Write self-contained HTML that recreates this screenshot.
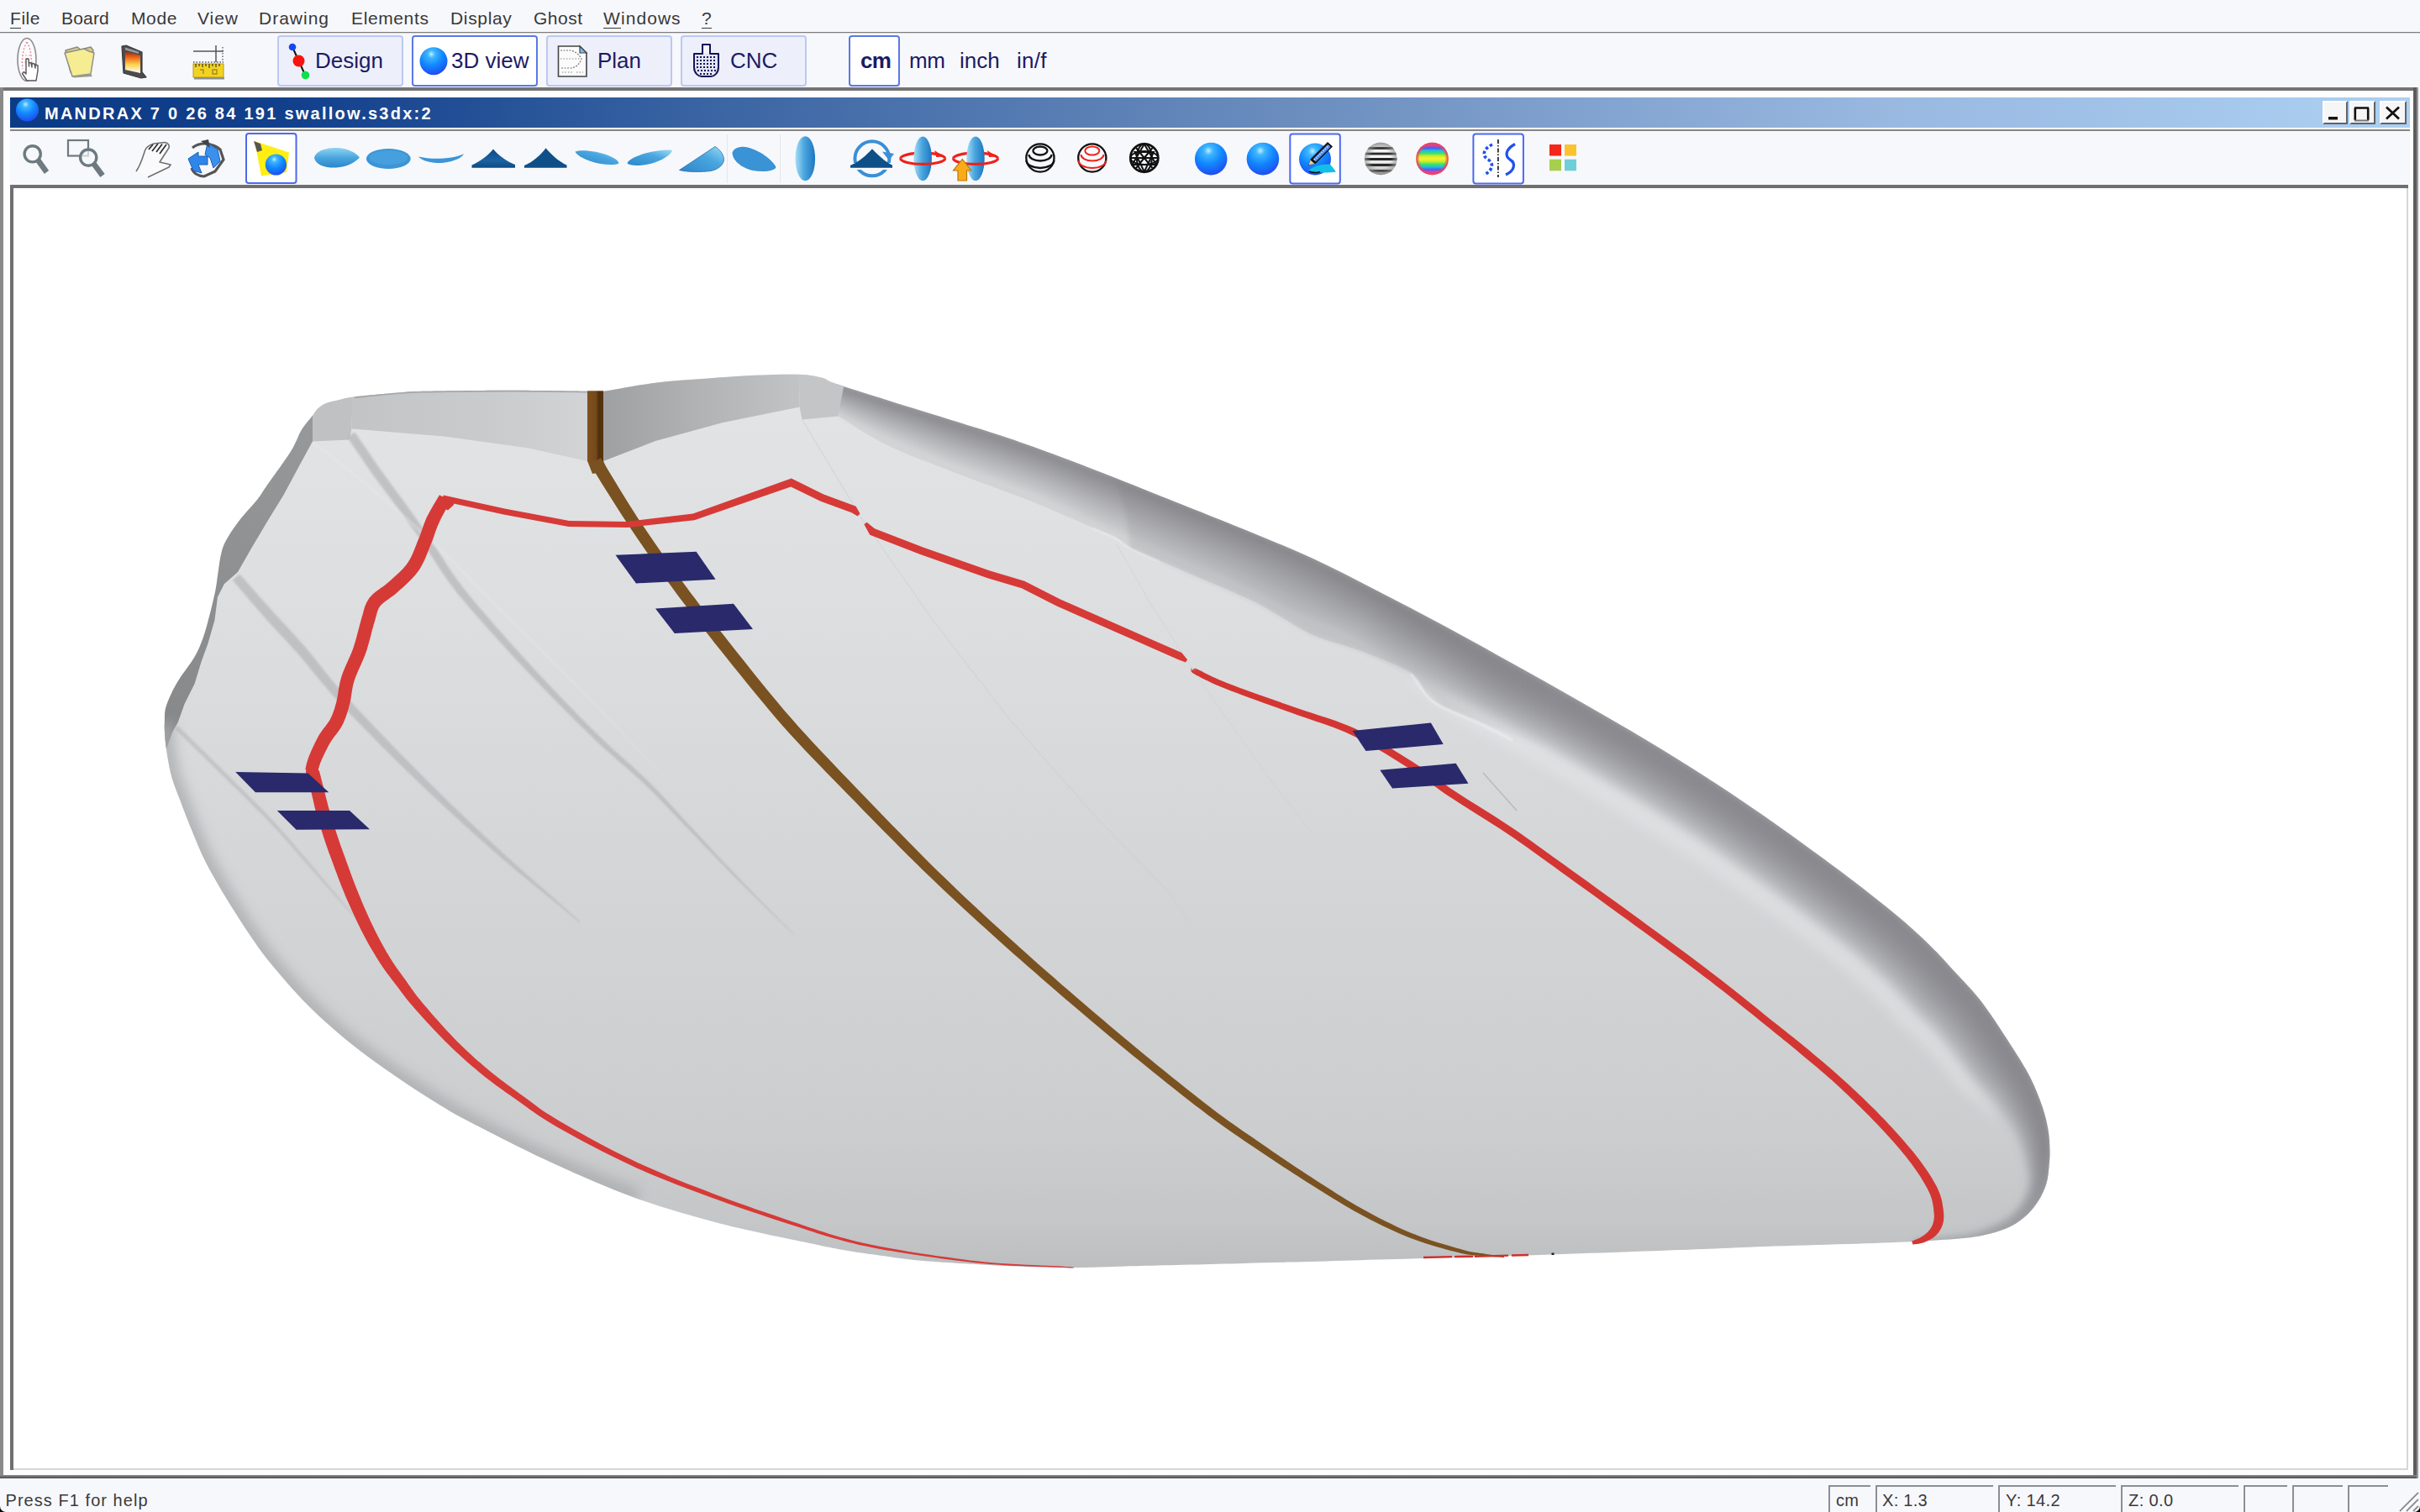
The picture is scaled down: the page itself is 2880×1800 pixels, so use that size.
<!DOCTYPE html>
<html>
<head>
<meta charset="utf-8">
<title>Shape3d</title>
<style>
html,body{margin:0;padding:0;}
body{width:2880px;height:1800px;overflow:hidden;background:#f7f8fc;font-family:"Liberation Sans",sans-serif;position:relative;}
.a{position:absolute;}
.t{position:absolute;white-space:pre;line-height:1;}
.menu .t{font-size:21px;color:#383838;top:11px;}
.menu u{text-decoration:none;border-bottom:1.5px solid #383838;padding-bottom:0;}
.tb{position:absolute;top:42px;height:57px;border:2px solid #bcc8f1;border-radius:4px;background:#edf0fa;}
.tb.sel{border-color:#5a78e6;background:#ffffff;}
.tbt{font-size:26px;color:#1b1b66;top:59px;}
.st{font-size:20px;color:#3a3a3a;top:1776px;}
.pane{position:absolute;top:1768px;height:32px;border-top:2px solid #8d8d93;border-left:2px solid #8d8d93;}
.wb{position:absolute;top:120px;height:24px;background:#f6f6f6;border-top:2px solid #fff;border-left:2px solid #fff;border-right:2px solid #5f6468;border-bottom:2px solid #5f6468;}
</style>
</head>
<body>
<!-- ===== menu bar ===== -->
<div class="menu">
<span class="t" style="left:12px;letter-spacing:.54px"><u>F</u>ile</span>
<span class="t" style="left:73px;letter-spacing:.19px">Board</span>
<span class="t" style="left:156px;letter-spacing:.62px">Mode</span>
<span class="t" style="left:235px;letter-spacing:.96px">View</span>
<span class="t" style="left:308px;letter-spacing:1px">Drawing</span>
<span class="t" style="left:418px;letter-spacing:.62px">Elements</span>
<span class="t" style="left:536px;letter-spacing:.66px">Display</span>
<span class="t" style="left:635px;letter-spacing:.51px">Ghost</span>
<span class="t" style="left:718px;letter-spacing:1.07px"><u>W</u>indows</span>
<span class="t" style="left:835px;"><u>?</u></span>
</div>
<div class="a" style="left:0;top:38px;width:2880px;height:1px;background:#7d7d7d"></div>
<div class="a" style="left:0;top:39px;width:2880px;height:1px;background:#d9d9dc"></div>

<!-- ===== main toolbar ===== -->
<div id="maintb">
<div class="tb" style="left:330px;width:146px"></div>
<div class="tb sel" style="left:490px;width:146px"></div>
<div class="tb" style="left:650px;width:146px"></div>
<div class="tb" style="left:810px;width:146px"></div>
<div class="tb sel" style="left:1010px;width:57px"></div>
<span class="t tbt" style="left:375px;">Design</span>
<span class="t tbt" style="left:537px;">3D view</span>
<span class="t tbt" style="left:711px;">Plan</span>
<span class="t tbt" style="left:869px;">CNC</span>
<span class="t tbt" style="left:1024px;font-weight:bold;letter-spacing:-.6px">cm</span>
<span class="t tbt" style="left:1082px;letter-spacing:-.5px">mm</span>
<span class="t tbt" style="left:1142px;">inch</span>
<span class="t tbt" style="left:1210px;letter-spacing:.3px">in/f</span>
</div>

<!-- ===== MDI child frame ===== -->
<div class="a" style="left:0;top:104px;width:2878px;height:4px;background:#747474"></div>
<div class="a" style="left:0;top:104px;width:4px;height:1656px;background:#8a8a8a"></div>
<div class="a" style="left:4px;top:108px;width:2868px;height:1648px;background:#fdfdfe"></div>
<div class="a" style="left:2872px;top:104px;width:4px;height:1656px;background:#5c5c5c"></div>
<div class="a" style="left:2876px;top:104px;width:2px;height:1656px;background:#9a9a9a"></div>
<div class="a" style="left:0;top:1756px;width:2876px;height:4px;background:linear-gradient(#8c8c8c,#4a4a4a)"></div>
<!-- title bar -->
<div class="a" style="left:12px;top:116px;width:2856px;height:36px;background:linear-gradient(90deg,#0c3b86 0%,#12408c 12%,#3c66a4 30%,#6e90c0 55%,#98b8e0 78%,#add0f2 100%)"></div>
<div class="a" style="left:12px;top:154px;width:2856px;height:2px;background:#858585"></div>
<div class="a" style="left:12px;top:156px;width:2856px;height:64px;background:#f7f8fc"></div>
<span class="t" style="left:53px;top:125px;font-size:20px;font-weight:bold;color:#fff;letter-spacing:2.26px;" id="title">MANDRAX 7 0 26 84 191 swallow.s3dx:2</span>
<div class="wb" style="left:2764px;width:26px"></div>
<div class="wb" style="left:2796px;width:27px"></div>
<div class="wb" style="left:2832px;width:28px"></div>

<!-- canvas -->
<div class="a" style="left:12px;top:220px;width:2854px;height:1530px;background:#6f6f6f"></div>
<div class="a" style="left:16px;top:224px;width:2850px;height:1526px;background:#d6d6d6"></div>
<div class="a" id="canvas" style="left:16px;top:224px;width:2848px;height:1524px;background:#fff;overflow:hidden"></div>
<svg class="a" style="left:16px;top:224px" width="2848" height="1524" viewBox="16 224 2848 1524">
<defs>
<linearGradient id="gb" gradientUnits="userSpaceOnUse" x1="0" y1="450" x2="0" y2="1510"><stop offset="0" stop-color="#e3e4e6"/><stop offset=".3" stop-color="#dcdddf"/><stop offset=".6" stop-color="#d3d4d6"/><stop offset=".85" stop-color="#cccdcf"/><stop offset=".95" stop-color="#c4c6c8"/><stop offset="1" stop-color="#bcbec0"/></linearGradient>
<clipPath id="cs"><path d="M317.0 579.0 C323.6 569.5 339.3 548.2 346.3 537.0 C353.3 525.8 354.7 518.6 359.0 511.6 C363.3 504.6 368.7 499.0 372.0 494.7 C375.3 490.4 376.1 488.3 378.9 485.8 C381.7 483.3 384.7 481.5 388.8 479.8 C392.9 478.1 398.2 477.1 403.7 475.9 C409.1 474.7 408.8 473.9 421.5 472.4 C434.2 470.9 465.5 468.1 480.0 467.0 C494.5 465.9 487.3 466.2 508.6 465.8 C529.9 465.4 576.1 464.8 607.8 464.8 C639.5 464.8 680.6 465.6 699.0 465.8 C717.4 466.0 704.5 467.5 718.0 465.8 C731.5 464.1 759.8 458.2 780.0 455.7 C800.2 453.2 819.7 452.3 839.5 450.8 C859.3 449.3 880.5 447.6 899.0 446.8 C917.5 446.0 937.4 445.3 950.6 445.8 C963.8 446.3 971.1 448.0 978.4 449.8 C985.7 451.6 981.1 452.2 994.3 456.7 C1007.5 461.2 1034.0 469.5 1057.8 477.0 C1081.6 484.5 1113.3 494.1 1137.0 501.5 C1160.7 508.9 1179.5 514.6 1200.0 521.5 C1220.5 528.4 1238.3 534.9 1260.0 543.0 C1281.7 551.1 1306.7 560.8 1330.0 570.0 C1353.3 579.2 1375.0 588.0 1400.0 598.0 C1425.0 608.0 1453.3 619.0 1480.0 630.0 C1506.7 641.0 1533.4 651.5 1560.0 663.8 C1586.6 676.0 1613.0 690.0 1639.4 703.5 C1665.9 717.0 1692.3 730.8 1718.7 745.0 C1745.1 759.2 1771.5 774.0 1798.0 788.8 C1824.5 803.5 1850.5 818.0 1877.5 833.5 C1904.5 849.0 1933.0 865.2 1960.0 881.5 C1987.0 897.8 2013.0 913.8 2039.4 931.0 C2065.8 948.2 2092.3 966.3 2118.7 985.0 C2145.1 1003.7 2174.8 1025.5 2198.0 1043.0 C2221.2 1060.5 2241.0 1076.2 2257.6 1090.0 C2274.2 1103.8 2285.7 1114.6 2297.3 1125.9 C2308.9 1137.2 2316.6 1146.1 2327.0 1157.6 C2337.4 1169.1 2348.4 1179.6 2360.0 1195.0 C2371.6 1210.4 2387.4 1235.2 2396.8 1250.0 C2406.2 1264.8 2411.1 1272.5 2416.7 1283.7 C2422.3 1295.0 2427.1 1307.3 2430.6 1317.5 C2434.1 1327.7 2436.0 1336.4 2437.5 1345.0 C2439.0 1353.6 2439.3 1361.7 2439.5 1369.0 C2439.7 1376.3 2439.2 1382.4 2438.5 1389.0 C2437.8 1395.6 2437.5 1402.1 2435.5 1408.7 C2433.5 1415.3 2430.4 1422.4 2426.6 1428.6 C2422.8 1434.8 2418.3 1440.8 2412.7 1446.0 C2407.1 1451.2 2400.5 1456.2 2392.9 1460.0 C2385.3 1463.8 2376.3 1466.7 2367.0 1469.0 C2357.7 1471.3 2351.9 1472.5 2337.0 1474.0 C2322.1 1475.5 2300.9 1476.8 2277.8 1478.0 C2254.7 1479.2 2228.2 1480.0 2198.4 1481.0 C2168.6 1482.0 2132.1 1482.8 2099.0 1484.0 C2065.9 1485.2 2049.8 1486.2 2000.0 1488.0 C1950.2 1489.8 1866.7 1492.9 1800.0 1495.0 C1733.3 1497.1 1653.3 1499.3 1600.0 1500.8 C1546.7 1502.3 1520.5 1503.0 1480.0 1504.0 C1439.5 1505.0 1390.7 1506.2 1357.0 1507.0 C1323.3 1507.8 1304.2 1509.0 1277.8 1509.0 C1251.4 1509.0 1228.2 1508.3 1198.4 1507.0 C1168.6 1505.7 1125.6 1503.2 1099.2 1501.0 C1072.8 1498.8 1056.5 1495.8 1040.0 1493.5 C1023.5 1491.2 1013.9 1490.0 1000.0 1487.5 C986.1 1485.0 980.5 1483.7 956.8 1478.6 C933.1 1473.5 890.7 1465.3 857.6 1456.7 C824.5 1448.1 791.5 1438.9 758.4 1427.0 C725.3 1415.1 692.3 1400.5 659.2 1385.3 C626.1 1370.1 583.6 1348.3 560.0 1336.0 C536.4 1323.7 531.2 1320.0 517.5 1311.7 C503.8 1303.4 491.1 1294.9 477.8 1285.9 C464.6 1277.0 451.2 1267.9 438.0 1258.0 C424.8 1248.1 411.6 1237.8 398.4 1226.3 C385.2 1214.8 371.9 1202.6 358.7 1188.7 C345.5 1174.8 329.1 1155.5 319.0 1143.0 C308.9 1130.5 304.6 1123.6 298.0 1114.0 C291.4 1104.4 285.9 1095.8 279.4 1085.5 C272.9 1075.2 265.3 1062.9 259.0 1052.0 C252.7 1041.1 246.9 1030.9 241.7 1020.0 C236.5 1009.1 232.3 998.3 227.6 986.8 C222.9 975.3 217.7 961.6 213.7 951.0 C209.7 940.4 206.4 932.9 203.8 923.0 C201.2 913.1 199.2 900.5 197.9 891.6 C196.6 882.7 196.2 875.1 195.9 869.8 C195.6 864.5 195.7 864.4 195.9 860.0 C196.1 855.6 195.6 849.4 196.9 843.7 C198.2 838.0 201.0 831.9 203.8 825.9 C206.6 819.9 209.1 815.3 213.7 808.0 C218.3 800.7 227.0 790.0 231.6 782.0 C236.2 774.0 238.5 768.2 241.5 760.0 C244.5 751.8 246.9 742.1 249.4 732.6 C251.9 723.1 254.7 711.2 256.4 702.9 C258.1 694.6 258.2 690.3 259.4 683.0 C260.5 675.7 261.6 665.7 263.3 659.0 C265.0 652.3 265.7 649.6 269.3 643.0 C272.9 636.4 278.7 627.7 285.0 619.5 C291.3 611.3 301.7 600.5 307.0 593.7 C312.3 587.0 310.4 588.5 317.0 579.0Z"/></clipPath>
<filter id="b30" x="-10%" y="-10%" width="120%" height="120%"><feGaussianBlur stdDeviation="26"/></filter>
<filter id="b18" x="-10%" y="-10%" width="120%" height="120%"><feGaussianBlur stdDeviation="16"/></filter>
<filter id="b8" x="-10%" y="-10%" width="120%" height="120%"><feGaussianBlur stdDeviation="7"/></filter>
<filter id="b1" x="-10%" y="-10%" width="120%" height="120%"><feGaussianBlur stdDeviation="1.2"/></filter>
<filter id="b4" x="-10%" y="-10%" width="120%" height="120%"><feGaussianBlur stdDeviation="4"/></filter>
<filter id="b3" x="-10%" y="-10%" width="120%" height="120%"><feGaussianBlur stdDeviation="2.5"/></filter>
<linearGradient id="gtl" gradientUnits="userSpaceOnUse" x1="420" y1="0" x2="700" y2="0"><stop offset="0" stop-color="#c3c4c6"/><stop offset=".6" stop-color="#cacbcd"/><stop offset="1" stop-color="#d2d3d5"/></linearGradient>
<linearGradient id="gtr" gradientUnits="userSpaceOnUse" x1="718" y1="0" x2="952" y2="0"><stop offset="0" stop-color="#9fa0a2"/><stop offset=".5" stop-color="#b2b3b5"/><stop offset="1" stop-color="#c2c3c5"/></linearGradient>
<linearGradient id="gst" gradientUnits="userSpaceOnUse" x1="699" y1="0" x2="718" y2="0"><stop offset="0" stop-color="#80521f"/><stop offset=".55" stop-color="#74481a"/><stop offset=".7" stop-color="#4f2f0c"/><stop offset="1" stop-color="#56340f"/></linearGradient>
<linearGradient id="gdl" gradientUnits="userSpaceOnUse" x1="200" y1="850" x2="372" y2="500"><stop offset="0" stop-color="#88898b"/><stop offset="1" stop-color="#97989a"/></linearGradient>
<linearGradient id="gfade" gradientUnits="userSpaceOnUse" x1="1660" y1="0" x2="1840" y2="0"><stop offset="0" stop-color="#fff"/><stop offset="1" stop-color="#000"/></linearGradient>
<mask id="mfade" maskUnits="userSpaceOnUse" x="900" y="400" width="1100" height="600"><rect x="900" y="400" width="1100" height="600" fill="url(#gfade)"/></mask>
</defs>
<path d="M317.0 579.0 C323.6 569.5 339.3 548.2 346.3 537.0 C353.3 525.8 354.7 518.6 359.0 511.6 C363.3 504.6 368.7 499.0 372.0 494.7 C375.3 490.4 376.1 488.3 378.9 485.8 C381.7 483.3 384.7 481.5 388.8 479.8 C392.9 478.1 398.2 477.1 403.7 475.9 C409.1 474.7 408.8 473.9 421.5 472.4 C434.2 470.9 465.5 468.1 480.0 467.0 C494.5 465.9 487.3 466.2 508.6 465.8 C529.9 465.4 576.1 464.8 607.8 464.8 C639.5 464.8 680.6 465.6 699.0 465.8 C717.4 466.0 704.5 467.5 718.0 465.8 C731.5 464.1 759.8 458.2 780.0 455.7 C800.2 453.2 819.7 452.3 839.5 450.8 C859.3 449.3 880.5 447.6 899.0 446.8 C917.5 446.0 937.4 445.3 950.6 445.8 C963.8 446.3 971.1 448.0 978.4 449.8 C985.7 451.6 981.1 452.2 994.3 456.7 C1007.5 461.2 1034.0 469.5 1057.8 477.0 C1081.6 484.5 1113.3 494.1 1137.0 501.5 C1160.7 508.9 1179.5 514.6 1200.0 521.5 C1220.5 528.4 1238.3 534.9 1260.0 543.0 C1281.7 551.1 1306.7 560.8 1330.0 570.0 C1353.3 579.2 1375.0 588.0 1400.0 598.0 C1425.0 608.0 1453.3 619.0 1480.0 630.0 C1506.7 641.0 1533.4 651.5 1560.0 663.8 C1586.6 676.0 1613.0 690.0 1639.4 703.5 C1665.9 717.0 1692.3 730.8 1718.7 745.0 C1745.1 759.2 1771.5 774.0 1798.0 788.8 C1824.5 803.5 1850.5 818.0 1877.5 833.5 C1904.5 849.0 1933.0 865.2 1960.0 881.5 C1987.0 897.8 2013.0 913.8 2039.4 931.0 C2065.8 948.2 2092.3 966.3 2118.7 985.0 C2145.1 1003.7 2174.8 1025.5 2198.0 1043.0 C2221.2 1060.5 2241.0 1076.2 2257.6 1090.0 C2274.2 1103.8 2285.7 1114.6 2297.3 1125.9 C2308.9 1137.2 2316.6 1146.1 2327.0 1157.6 C2337.4 1169.1 2348.4 1179.6 2360.0 1195.0 C2371.6 1210.4 2387.4 1235.2 2396.8 1250.0 C2406.2 1264.8 2411.1 1272.5 2416.7 1283.7 C2422.3 1295.0 2427.1 1307.3 2430.6 1317.5 C2434.1 1327.7 2436.0 1336.4 2437.5 1345.0 C2439.0 1353.6 2439.3 1361.7 2439.5 1369.0 C2439.7 1376.3 2439.2 1382.4 2438.5 1389.0 C2437.8 1395.6 2437.5 1402.1 2435.5 1408.7 C2433.5 1415.3 2430.4 1422.4 2426.6 1428.6 C2422.8 1434.8 2418.3 1440.8 2412.7 1446.0 C2407.1 1451.2 2400.5 1456.2 2392.9 1460.0 C2385.3 1463.8 2376.3 1466.7 2367.0 1469.0 C2357.7 1471.3 2351.9 1472.5 2337.0 1474.0 C2322.1 1475.5 2300.9 1476.8 2277.8 1478.0 C2254.7 1479.2 2228.2 1480.0 2198.4 1481.0 C2168.6 1482.0 2132.1 1482.8 2099.0 1484.0 C2065.9 1485.2 2049.8 1486.2 2000.0 1488.0 C1950.2 1489.8 1866.7 1492.9 1800.0 1495.0 C1733.3 1497.1 1653.3 1499.3 1600.0 1500.8 C1546.7 1502.3 1520.5 1503.0 1480.0 1504.0 C1439.5 1505.0 1390.7 1506.2 1357.0 1507.0 C1323.3 1507.8 1304.2 1509.0 1277.8 1509.0 C1251.4 1509.0 1228.2 1508.3 1198.4 1507.0 C1168.6 1505.7 1125.6 1503.2 1099.2 1501.0 C1072.8 1498.8 1056.5 1495.8 1040.0 1493.5 C1023.5 1491.2 1013.9 1490.0 1000.0 1487.5 C986.1 1485.0 980.5 1483.7 956.8 1478.6 C933.1 1473.5 890.7 1465.3 857.6 1456.7 C824.5 1448.1 791.5 1438.9 758.4 1427.0 C725.3 1415.1 692.3 1400.5 659.2 1385.3 C626.1 1370.1 583.6 1348.3 560.0 1336.0 C536.4 1323.7 531.2 1320.0 517.5 1311.7 C503.8 1303.4 491.1 1294.9 477.8 1285.9 C464.6 1277.0 451.2 1267.9 438.0 1258.0 C424.8 1248.1 411.6 1237.8 398.4 1226.3 C385.2 1214.8 371.9 1202.6 358.7 1188.7 C345.5 1174.8 329.1 1155.5 319.0 1143.0 C308.9 1130.5 304.6 1123.6 298.0 1114.0 C291.4 1104.4 285.9 1095.8 279.4 1085.5 C272.9 1075.2 265.3 1062.9 259.0 1052.0 C252.7 1041.1 246.9 1030.9 241.7 1020.0 C236.5 1009.1 232.3 998.3 227.6 986.8 C222.9 975.3 217.7 961.6 213.7 951.0 C209.7 940.4 206.4 932.9 203.8 923.0 C201.2 913.1 199.2 900.5 197.9 891.6 C196.6 882.7 196.2 875.1 195.9 869.8 C195.6 864.5 195.7 864.4 195.9 860.0 C196.1 855.6 195.6 849.4 196.9 843.7 C198.2 838.0 201.0 831.9 203.8 825.9 C206.6 819.9 209.1 815.3 213.7 808.0 C218.3 800.7 227.0 790.0 231.6 782.0 C236.2 774.0 238.5 768.2 241.5 760.0 C244.5 751.8 246.9 742.1 249.4 732.6 C251.9 723.1 254.7 711.2 256.4 702.9 C258.1 694.6 258.2 690.3 259.4 683.0 C260.5 675.7 261.6 665.7 263.3 659.0 C265.0 652.3 265.7 649.6 269.3 643.0 C272.9 636.4 278.7 627.7 285.0 619.5 C291.3 611.3 301.7 600.5 307.0 593.7 C312.3 587.0 310.4 588.5 317.0 579.0Z" fill="url(#gb)"/>
<g clip-path="url(#cs)"><g filter="url(#b4)">
<polygon points="995.2,453.8 1001.9,456.0 1011.1,459.0 1022.0,462.5 1034.0,466.3 1046.5,470.3 1058.7,474.1 1071.2,478.0 1084.5,482.2 1098.3,486.4 1112.1,490.6 1125.4,494.8 1137.9,498.6 1149.4,502.2 1160.2,505.6 1170.6,508.8 1180.7,512.0 1190.8,515.3 1201.0,518.7 1211.0,522.1 1220.8,525.5 1230.6,529.0 1240.4,532.6 1250.5,536.3 1261.1,540.2 1272.2,544.4 1283.7,548.8 1295.5,553.3 1307.4,557.9 1319.3,562.6 1331.1,567.2 1342.7,571.8 1354.1,576.3 1365.5,580.9 1377.0,585.5 1388.9,590.3 1401.1,595.2 1413.9,600.3 1427.0,605.5 1440.5,610.9 1454.1,616.3 1467.7,621.7 1481.1,627.2 1494.5,632.7 1507.8,638.1 1521.2,643.7 1534.6,649.3 1547.9,655.1 1561.3,661.1 1574.6,667.3 1587.8,673.8 1601.1,680.5 1614.3,687.2 1627.5,694.0 1640.8,700.8 1654.0,707.6 1667.2,714.5 1680.4,721.3 1693.7,728.3 1706.9,735.3 1720.1,742.4 1733.3,749.5 1746.6,756.8 1759.8,764.1 1773.0,771.4 1786.2,778.8 1799.5,786.2 1812.7,793.5 1825.8,800.9 1839.0,808.3 1852.2,815.7 1865.6,823.2 1879.0,830.9 1892.6,838.7 1906.4,846.6 1920.3,854.6 1934.1,862.7 1947.9,870.8 1961.5,878.9 1975.0,887.0 1988.3,895.2 2001.5,903.3 2014.7,911.6 2027.8,919.9 2041.0,928.5 2054.3,937.2 2067.5,946.0 2080.7,955.0 2094.0,964.1 2107.2,973.3 2120.4,982.6 2133.9,992.1 2147.6,1002.0 2161.4,1012.0 2174.8,1021.9 2187.7,1031.5 2199.8,1040.6 2211.1,1049.2 2221.9,1057.5 2232.1,1065.5 2241.8,1073.2 2250.9,1080.6 2259.5,1087.7 2267.4,1094.4 2274.7,1100.7 2281.3,1106.7 2287.6,1112.5 2293.6,1118.1 2299.4,1123.8 2304.9,1129.3 2310.0,1134.5 2314.8,1139.6 2319.4,1144.7 2324.2,1150.0 2329.2,1155.6 2334.5,1161.3 2339.8,1167.0 2345.3,1172.8 2350.9,1179.1 2356.6,1185.8 2362.4,1193.2 2368.6,1201.7 2375.1,1211.1 2381.7,1221.1 2388.2,1231.0 2394.1,1240.2 2399.3,1248.4 2403.7,1255.2 2407.5,1261.2 2410.8,1266.6 2413.7,1271.8 2416.6,1276.9 2419.4,1282.4 2422.2,1288.1 2424.8,1294.0 2427.2,1299.9 2429.5,1305.6 2431.6,1311.2 2433.4,1316.5 2435.1,1321.6 2436.5,1326.5 2437.7,1331.1 2438.8,1335.7 2439.7,1340.1 2440.5,1344.5 2441.1,1348.8 2441.6,1353.1 2442.0,1357.2 2442.2,1361.3 2442.4,1365.2 2442.5,1369.0 2442.5,1372.6 2442.5,1376.1 2442.3,1379.4 2442.1,1382.7 2441.8,1386.0 2441.5,1389.3 2441.2,1392.6 2440.8,1395.9 2440.5,1399.3 2440.0,1402.7 2439.3,1406.1 2438.4,1409.5 2437.3,1413.0 2435.9,1416.5 2434.5,1420.0 2432.8,1423.5 2431.1,1426.9 2429.2,1430.2 2427.1,1433.3 2425.0,1436.5 2422.7,1439.5 2420.2,1442.5 2417.6,1445.4 2414.8,1448.2 2411.8,1450.9 2408.6,1453.5 2405.3,1456.0 2401.8,1458.4 2398.1,1460.6 2394.2,1462.7 2390.2,1464.6 2386.0,1466.3 2381.6,1467.9 2377.0,1469.3 2372.4,1470.7 2367.7,1471.9 2363.2,1473.0 2359.0,1473.9 2354.6,1474.8 2349.7,1475.5 2344.1,1476.3 2337.3,1477.0 2328.4,1477.8 2317.4,1478.5 2305.7,1479.3 2294.4,1480.0 2284.8,1480.6 2278.0,1481.0 2277.8,1478.0 2284.6,1477.4 2294.2,1476.3 2305.4,1474.9 2317.1,1473.1 2327.8,1471.0 2336.6,1469.5 2343.2,1468.1 2348.5,1466.8 2353.0,1465.4 2357.0,1464.0 2360.8,1462.4 2364.9,1460.7 2369.2,1459.0 2373.3,1457.3 2377.3,1455.4 2381.0,1453.5 2384.4,1451.5 2387.6,1449.4 2390.5,1447.2 2393.2,1444.9 2395.7,1442.5 2398.1,1440.0 2400.2,1437.5 2402.2,1434.9 2404.0,1432.3 2405.5,1429.7 2406.9,1427.0 2408.1,1424.2 2409.2,1421.5 2410.2,1418.7 2410.9,1415.8 2411.6,1412.9 2412.1,1410.0 2412.4,1407.2 2412.5,1404.5 2412.5,1402.0 2412.2,1399.8 2411.7,1397.6 2411.1,1395.2 2410.6,1392.5 2409.9,1389.5 2409.3,1386.3 2408.7,1383.1 2408.1,1380.2 2407.3,1377.5 2406.5,1375.0 2405.6,1372.4 2404.6,1369.5 2403.6,1366.5 2402.5,1363.5 2401.3,1360.4 2400.1,1357.5 2398.7,1354.6 2397.2,1351.6 2395.6,1348.6 2393.9,1345.5 2392.1,1342.4 2390.2,1339.3 2388.1,1336.1 2385.8,1332.5 2383.2,1328.7 2380.4,1324.5 2377.4,1320.2 2374.3,1316.0 2371.2,1311.8 2367.9,1307.9 2364.7,1304.4 2361.5,1301.2 2358.1,1297.9 2354.3,1294.0 2349.8,1289.2 2344.5,1283.3 2338.8,1275.8 2332.4,1267.2 2325.7,1258.2 2318.9,1249.4 2312.6,1241.5 2307.0,1235.1 2302.2,1229.7 2297.6,1225.0 2292.7,1220.2 2287.5,1215.2 2281.8,1209.9 2276.1,1204.3 2270.9,1198.6 2266.2,1193.3 2261.9,1188.7 2257.8,1184.3 2253.6,1179.9 2248.8,1175.2 2243.7,1170.2 2238.4,1165.2 2232.9,1160.1 2226.9,1154.8 2220.5,1149.1 2213.3,1143.0 2205.3,1136.4 2196.7,1129.5 2187.5,1122.2 2177.7,1114.5 2167.3,1106.5 2156.3,1098.1 2144.5,1089.3 2131.9,1079.9 2118.8,1070.2 2105.3,1060.4 2091.9,1050.8 2078.8,1041.4 2065.9,1032.4 2053.0,1023.4 2040.1,1014.6 2027.3,1005.9 2014.5,997.3 2001.7,988.9 1988.9,980.7 1976.2,972.6 1963.4,964.6 1950.5,956.6 1937.5,948.7 1924.4,940.8 1911.1,932.8 1897.7,924.9 1884.1,917.0 1870.4,909.1 1856.7,901.3 1843.2,893.5 1830.0,886.0 1816.8,878.5 1803.7,871.2 1790.6,863.8 1777.5,856.5 1764.3,849.2 1751.4,841.3 1738.5,833.5 1725.6,825.8 1712.8,818.1 1700.1,810.6 1687.4,803.1 1675.0,795.2 1662.5,787.4 1650.0,779.6 1637.4,771.9 1624.8,764.2 1612.1,756.5 1598.5,750.6 1585.0,744.7 1571.7,738.9 1558.5,733.4 1545.5,728.0 1532.7,723.0 1520.7,716.4 1508.5,710.0 1496.1,703.6 1483.4,697.3 1470.6,690.9 1457.8,684.5 1444.6,678.8 1431.3,673.1 1417.9,667.4 1404.7,661.8 1391.6,656.3 1378.9,650.9 1366.7,645.6 1355.0,640.6 1343.6,635.6 1332.3,630.8 1321.2,626.0 1309.8,621.1 1298.5,615.7 1287.0,610.2 1275.6,604.8 1264.3,599.5 1253.2,594.3 1242.7,589.3 1232.3,585.4 1222.5,581.6 1213.0,578.0 1203.6,574.5 1194.2,571.1 1184.5,567.6 1174.8,564.0 1165.2,560.4 1155.5,556.8 1145.3,553.2 1134.7,549.4 1123.4,545.4 1111.3,540.3 1098.4,535.0 1085.0,529.6 1071.5,524.2 1058.5,518.8 1046.3,513.7 1034.4,508.3 1022.4,502.8 1010.8,497.5 1000.3,492.5 991.7,488.0 985.4,484.4" fill="#838487" opacity="0.200"/>
<polygon points="995.2,453.8 1001.9,456.0 1011.1,459.0 1022.0,462.5 1034.0,466.3 1046.5,470.3 1058.7,474.1 1071.2,478.0 1084.5,482.2 1098.3,486.4 1112.1,490.6 1125.4,494.8 1137.9,498.6 1149.4,502.2 1160.2,505.6 1170.6,508.8 1180.7,512.0 1190.8,515.3 1201.0,518.7 1211.0,522.1 1220.8,525.5 1230.6,529.0 1240.4,532.6 1250.5,536.3 1261.1,540.2 1272.2,544.4 1283.7,548.8 1295.5,553.3 1307.4,557.9 1319.3,562.6 1331.1,567.2 1342.7,571.8 1354.1,576.3 1365.5,580.9 1377.0,585.5 1388.9,590.3 1401.1,595.2 1413.9,600.3 1427.0,605.5 1440.5,610.9 1454.1,616.3 1467.7,621.7 1481.1,627.2 1494.5,632.7 1507.8,638.1 1521.2,643.7 1534.6,649.3 1547.9,655.1 1561.3,661.1 1574.6,667.3 1587.8,673.8 1601.1,680.5 1614.3,687.2 1627.5,694.0 1640.8,700.8 1654.0,707.6 1667.2,714.5 1680.4,721.3 1693.7,728.3 1706.9,735.3 1720.1,742.4 1733.3,749.5 1746.6,756.8 1759.8,764.1 1773.0,771.4 1786.2,778.8 1799.5,786.2 1812.7,793.5 1825.8,800.9 1839.0,808.3 1852.2,815.7 1865.6,823.2 1879.0,830.9 1892.6,838.7 1906.4,846.6 1920.3,854.6 1934.1,862.7 1947.9,870.8 1961.5,878.9 1975.0,887.0 1988.3,895.2 2001.5,903.3 2014.7,911.6 2027.8,919.9 2041.0,928.5 2054.3,937.2 2067.5,946.0 2080.7,955.0 2094.0,964.1 2107.2,973.3 2120.4,982.6 2133.9,992.1 2147.6,1002.0 2161.4,1012.0 2174.8,1021.9 2187.7,1031.5 2199.8,1040.6 2211.1,1049.2 2221.9,1057.5 2232.1,1065.5 2241.8,1073.2 2250.9,1080.6 2259.5,1087.7 2267.4,1094.4 2274.7,1100.7 2281.3,1106.7 2287.6,1112.5 2293.6,1118.1 2299.4,1123.8 2304.9,1129.3 2310.0,1134.5 2314.8,1139.6 2319.4,1144.7 2324.2,1150.0 2329.2,1155.6 2334.5,1161.3 2339.8,1167.0 2345.3,1172.8 2350.9,1179.1 2356.6,1185.8 2362.4,1193.2 2368.6,1201.7 2375.1,1211.1 2381.7,1221.1 2388.2,1231.0 2394.1,1240.2 2399.3,1248.4 2403.7,1255.2 2407.5,1261.2 2410.8,1266.6 2413.7,1271.8 2416.6,1276.9 2419.4,1282.4 2422.2,1288.1 2424.8,1294.0 2427.2,1299.9 2429.5,1305.6 2431.6,1311.2 2433.4,1316.5 2435.1,1321.6 2436.5,1326.5 2437.7,1331.1 2438.8,1335.7 2439.7,1340.1 2440.5,1344.5 2441.1,1348.8 2441.6,1353.1 2442.0,1357.2 2442.2,1361.3 2442.4,1365.2 2442.5,1369.0 2442.5,1372.6 2442.5,1376.1 2442.3,1379.4 2442.1,1382.7 2441.8,1386.0 2441.5,1389.3 2441.2,1392.6 2440.8,1395.9 2440.5,1399.3 2440.0,1402.7 2439.3,1406.1 2438.4,1409.5 2437.3,1413.0 2435.9,1416.5 2434.5,1420.0 2432.8,1423.5 2431.1,1426.9 2429.2,1430.2 2427.1,1433.3 2425.0,1436.5 2422.7,1439.5 2420.2,1442.5 2417.6,1445.4 2414.8,1448.2 2411.8,1450.9 2408.6,1453.5 2405.3,1456.0 2401.8,1458.4 2398.1,1460.6 2394.2,1462.7 2390.2,1464.6 2386.0,1466.3 2381.6,1467.9 2377.0,1469.3 2372.4,1470.7 2367.7,1471.9 2363.2,1473.0 2359.0,1473.9 2354.6,1474.8 2349.7,1475.5 2344.1,1476.3 2337.3,1477.0 2328.4,1477.8 2317.4,1478.5 2305.7,1479.3 2294.4,1480.0 2284.8,1480.6 2278.0,1481.0 2277.8,1478.0 2284.6,1477.6 2294.2,1477.0 2305.5,1476.3 2317.2,1475.6 2328.1,1474.8 2336.9,1473.2 2343.5,1471.5 2348.9,1469.5 2353.3,1467.3 2357.1,1464.8 2361.0,1463.3 2365.1,1461.7 2369.5,1460.0 2373.7,1458.3 2377.7,1456.5 2381.4,1454.7 2385.0,1452.7 2388.2,1450.6 2391.2,1448.5 2394.0,1446.2 2396.6,1443.8 2399.1,1441.3 2401.4,1438.7 2403.4,1436.2 2405.3,1433.6 2406.9,1430.9 2408.4,1428.2 2409.8,1425.5 2411.0,1422.6 2412.1,1419.8 2413.0,1416.9 2413.7,1414.0 2414.3,1411.0 2414.8,1408.1 2415.1,1405.3 2415.2,1402.8 2415.0,1400.4 2414.6,1398.1 2414.2,1395.6 2413.7,1392.8 2413.2,1389.8 2412.7,1386.6 2412.2,1383.4 2411.7,1380.5 2411.0,1377.7 2410.3,1375.1 2409.6,1372.4 2408.7,1369.5 2407.7,1366.4 2406.7,1363.2 2405.7,1360.1 2404.5,1357.0 2403.3,1354.0 2401.9,1350.9 2400.4,1347.7 2398.8,1344.5 2397.0,1341.2 2395.2,1337.9 2393.2,1334.5 2391.0,1330.8 2388.5,1326.7 2385.8,1322.4 2382.9,1318.0 2379.9,1313.5 2376.8,1309.2 2373.6,1305.1 2370.4,1301.4 2367.3,1298.0 2363.9,1294.5 2360.2,1290.4 2355.7,1285.5 2350.6,1279.5 2344.9,1271.9 2338.6,1263.2 2331.9,1254.1 2325.2,1245.2 2318.8,1237.1 2313.1,1230.4 2308.2,1224.8 2303.5,1219.8 2298.6,1215.0 2293.3,1209.9 2287.7,1204.5 2282.0,1198.9 2276.8,1193.2 2272.1,1187.9 2267.8,1183.2 2263.6,1178.8 2259.3,1174.3 2254.5,1169.5 2249.3,1164.4 2243.9,1159.3 2238.3,1154.1 2232.3,1148.8 2225.7,1143.0 2218.4,1136.9 2210.4,1130.2 2201.7,1123.2 2192.4,1115.9 2182.6,1108.1 2172.2,1100.1 2161.2,1091.7 2149.4,1082.9 2136.7,1073.5 2123.5,1063.7 2110.0,1053.9 2096.6,1044.2 2083.4,1034.9 2070.5,1025.8 2057.6,1016.8 2044.7,1008.0 2031.8,999.2 2018.9,990.6 2006.0,982.2 1993.2,973.9 1980.4,965.8 1967.6,957.7 1954.7,949.8 1941.7,941.8 1928.6,933.9 1915.2,925.9 1901.7,918.0 1888.1,910.0 1874.4,902.1 1860.7,894.3 1847.2,886.6 1833.9,879.0 1820.7,871.5 1807.6,864.2 1794.5,856.8 1781.4,849.5 1768.2,842.2 1755.5,834.0 1742.7,825.9 1730.0,817.8 1717.4,809.8 1704.8,801.9 1692.2,794.1 1679.9,786.0 1667.5,777.9 1655.1,769.9 1642.6,761.9 1630.1,754.0 1617.5,746.1 1604.1,739.8 1590.7,733.5 1577.5,727.4 1564.4,721.4 1551.5,715.6 1538.7,710.0 1526.4,703.6 1513.9,697.3 1501.3,691.1 1488.5,685.0 1475.6,678.8 1462.7,672.6 1449.4,666.9 1436.0,661.3 1422.6,655.7 1409.3,650.1 1396.2,644.6 1383.5,639.3 1371.3,634.1 1359.5,629.1 1348.1,624.3 1336.9,619.5 1325.6,614.7 1314.3,610.0 1302.8,604.7 1291.2,599.4 1279.7,594.1 1268.3,589.0 1257.1,584.0 1246.4,579.2 1236.1,575.2 1226.2,571.5 1216.6,567.9 1207.1,564.4 1197.6,561.0 1187.9,557.5 1178.1,553.9 1168.4,550.4 1158.6,546.9 1148.4,543.4 1137.7,539.7 1126.4,535.8 1114.2,531.0 1101.2,525.9 1087.7,520.8 1074.2,515.6 1061.1,510.5 1048.8,505.7 1036.9,500.6 1024.7,495.5 1013.0,490.4 1002.5,485.8 993.7,481.6 987.4,478.3" fill="#838487" opacity="0.200"/>
<polygon points="995.2,453.8 1001.9,456.0 1011.1,459.0 1022.0,462.5 1034.0,466.3 1046.5,470.3 1058.7,474.1 1071.2,478.0 1084.5,482.2 1098.3,486.4 1112.1,490.6 1125.4,494.8 1137.9,498.6 1149.4,502.2 1160.2,505.6 1170.6,508.8 1180.7,512.0 1190.8,515.3 1201.0,518.7 1211.0,522.1 1220.8,525.5 1230.6,529.0 1240.4,532.6 1250.5,536.3 1261.1,540.2 1272.2,544.4 1283.7,548.8 1295.5,553.3 1307.4,557.9 1319.3,562.6 1331.1,567.2 1342.7,571.8 1354.1,576.3 1365.5,580.9 1377.0,585.5 1388.9,590.3 1401.1,595.2 1413.9,600.3 1427.0,605.5 1440.5,610.9 1454.1,616.3 1467.7,621.7 1481.1,627.2 1494.5,632.7 1507.8,638.1 1521.2,643.7 1534.6,649.3 1547.9,655.1 1561.3,661.1 1574.6,667.3 1587.8,673.8 1601.1,680.5 1614.3,687.2 1627.5,694.0 1640.8,700.8 1654.0,707.6 1667.2,714.5 1680.4,721.3 1693.7,728.3 1706.9,735.3 1720.1,742.4 1733.3,749.5 1746.6,756.8 1759.8,764.1 1773.0,771.4 1786.2,778.8 1799.5,786.2 1812.7,793.5 1825.8,800.9 1839.0,808.3 1852.2,815.7 1865.6,823.2 1879.0,830.9 1892.6,838.7 1906.4,846.6 1920.3,854.6 1934.1,862.7 1947.9,870.8 1961.5,878.9 1975.0,887.0 1988.3,895.2 2001.5,903.3 2014.7,911.6 2027.8,919.9 2041.0,928.5 2054.3,937.2 2067.5,946.0 2080.7,955.0 2094.0,964.1 2107.2,973.3 2120.4,982.6 2133.9,992.1 2147.6,1002.0 2161.4,1012.0 2174.8,1021.9 2187.7,1031.5 2199.8,1040.6 2211.1,1049.2 2221.9,1057.5 2232.1,1065.5 2241.8,1073.2 2250.9,1080.6 2259.5,1087.7 2267.4,1094.4 2274.7,1100.7 2281.3,1106.7 2287.6,1112.5 2293.6,1118.1 2299.4,1123.8 2304.9,1129.3 2310.0,1134.5 2314.8,1139.6 2319.4,1144.7 2324.2,1150.0 2329.2,1155.6 2334.5,1161.3 2339.8,1167.0 2345.3,1172.8 2350.9,1179.1 2356.6,1185.8 2362.4,1193.2 2368.6,1201.7 2375.1,1211.1 2381.7,1221.1 2388.2,1231.0 2394.1,1240.2 2399.3,1248.4 2403.7,1255.2 2407.5,1261.2 2410.8,1266.6 2413.7,1271.8 2416.6,1276.9 2419.4,1282.4 2422.2,1288.1 2424.8,1294.0 2427.2,1299.9 2429.5,1305.6 2431.6,1311.2 2433.4,1316.5 2435.1,1321.6 2436.5,1326.5 2437.7,1331.1 2438.8,1335.7 2439.7,1340.1 2440.5,1344.5 2441.1,1348.8 2441.6,1353.1 2442.0,1357.2 2442.2,1361.3 2442.4,1365.2 2442.5,1369.0 2442.5,1372.6 2442.5,1376.1 2442.3,1379.4 2442.1,1382.7 2441.8,1386.0 2441.5,1389.3 2441.2,1392.6 2440.8,1395.9 2440.5,1399.3 2440.0,1402.7 2439.3,1406.1 2438.4,1409.5 2437.3,1413.0 2435.9,1416.5 2434.5,1420.0 2432.8,1423.5 2431.1,1426.9 2429.2,1430.2 2427.1,1433.3 2425.0,1436.5 2422.7,1439.5 2420.2,1442.5 2417.6,1445.4 2414.8,1448.2 2411.8,1450.9 2408.6,1453.5 2405.3,1456.0 2401.8,1458.4 2398.1,1460.6 2394.2,1462.7 2390.2,1464.6 2386.0,1466.3 2381.6,1467.9 2377.0,1469.3 2372.4,1470.7 2367.7,1471.9 2363.2,1473.0 2359.0,1473.9 2354.6,1474.8 2349.7,1475.5 2344.1,1476.3 2337.3,1477.0 2328.4,1477.8 2317.4,1478.5 2305.7,1479.3 2294.4,1480.0 2284.8,1480.6 2278.0,1481.0 2277.8,1478.0 2284.6,1477.6 2294.2,1477.0 2305.5,1476.3 2317.2,1475.6 2328.1,1474.8 2337.0,1474.0 2343.7,1473.3 2349.3,1472.6 2354.1,1471.8 2358.4,1471.0 2362.3,1468.9 2366.3,1466.4 2370.6,1464.0 2374.6,1461.3 2378.3,1458.5 2381.9,1455.7 2385.4,1453.8 2388.8,1451.8 2391.8,1449.6 2394.7,1447.3 2397.4,1444.9 2400.0,1442.5 2402.4,1439.9 2404.5,1437.4 2406.5,1434.7 2408.2,1432.1 2409.8,1429.4 2411.3,1426.6 2412.6,1423.7 2413.8,1420.9 2414.8,1417.9 2415.7,1415.0 2416.4,1412.0 2417.0,1409.0 2417.4,1406.1 2417.6,1403.5 2417.5,1401.0 2417.3,1398.6 2417.0,1396.0 2416.6,1393.2 2416.2,1390.1 2415.8,1386.9 2415.4,1383.7 2414.9,1380.7 2414.4,1377.9 2413.8,1375.2 2413.1,1372.4 2412.4,1369.4 2411.5,1366.3 2410.6,1363.0 2409.7,1359.7 2408.6,1356.6 2407.4,1353.4 2406.1,1350.2 2404.7,1346.9 2403.2,1343.5 2401.5,1340.1 2399.8,1336.6 2397.9,1333.0 2395.7,1329.2 2393.3,1325.0 2390.6,1320.5 2387.8,1315.9 2384.9,1311.4 2381.9,1306.9 2378.7,1302.6 2375.6,1298.7 2372.5,1295.0 2369.2,1291.3 2365.5,1287.1 2361.1,1282.1 2356.1,1276.0 2350.5,1268.3 2344.2,1259.6 2337.5,1250.4 2330.8,1241.3 2324.4,1233.1 2318.7,1226.2 2313.7,1220.4 2308.9,1215.2 2303.9,1210.2 2298.6,1205.0 2293.0,1199.6 2287.3,1194.0 2282.2,1188.3 2277.5,1183.0 2273.1,1178.3 2268.9,1173.7 2264.5,1169.2 2259.6,1164.3 2254.3,1159.2 2248.8,1154.0 2243.1,1148.7 2237.1,1143.3 2230.4,1137.5 2223.1,1131.3 2215.0,1124.6 2206.3,1117.5 2197.0,1110.1 2187.1,1102.4 2176.6,1094.3 2165.5,1085.9 2153.7,1077.0 2141.0,1067.6 2127.8,1057.9 2114.3,1048.0 2100.8,1038.3 2087.6,1028.9 2074.7,1019.8 2061.7,1010.8 2048.8,1001.9 2035.8,993.2 2022.9,984.6 2010.0,976.1 1997.2,967.8 1984.3,959.6 1971.5,951.6 1958.5,943.6 1945.5,935.6 1932.3,927.6 1918.9,919.7 1905.4,911.7 1891.7,903.7 1878.0,895.8 1864.3,888.0 1850.8,880.2 1837.5,872.6 1824.3,865.2 1811.2,857.8 1798.1,850.5 1785.0,843.1 1771.8,835.8 1759.1,827.5 1746.5,819.1 1733.9,810.9 1721.3,802.7 1708.8,794.5 1696.3,786.5 1684.0,778.2 1671.7,770.0 1659.3,761.8 1646.9,753.7 1634.4,745.7 1621.8,737.6 1608.6,731.1 1595.3,724.5 1582.2,718.0 1569.2,711.7 1556.3,705.6 1543.5,699.7 1530.9,693.3 1518.3,687.2 1505.5,681.1 1492.6,675.1 1479.6,669.1 1466.5,663.1 1453.2,657.4 1439.8,651.8 1426.4,646.2 1413.0,640.7 1399.9,635.3 1387.2,630.0 1375.0,624.9 1363.2,620.0 1351.8,615.2 1340.5,610.4 1329.2,605.7 1317.8,601.0 1306.3,595.9 1294.6,590.7 1283.0,585.6 1271.5,580.6 1260.3,575.7 1249.5,571.1 1239.1,567.1 1229.1,563.4 1219.5,559.8 1210.0,556.3 1200.4,552.9 1190.6,549.5 1180.7,545.9 1171.0,542.5 1161.1,539.0 1150.8,535.6 1140.1,531.9 1128.7,528.1 1116.5,523.5 1103.4,518.7 1089.9,513.7 1076.3,508.7 1063.1,503.9 1050.8,499.3 1038.8,494.5 1026.6,489.6 1014.9,484.8 1004.2,480.4 995.3,476.5 988.9,473.5" fill="#838487" opacity="0.200"/>
<polygon points="995.2,453.8 1001.9,456.0 1011.1,459.0 1022.0,462.5 1034.0,466.3 1046.5,470.3 1058.7,474.1 1071.2,478.0 1084.5,482.2 1098.3,486.4 1112.1,490.6 1125.4,494.8 1137.9,498.6 1149.4,502.2 1160.2,505.6 1170.6,508.8 1180.7,512.0 1190.8,515.3 1201.0,518.7 1211.0,522.1 1220.8,525.5 1230.6,529.0 1240.4,532.6 1250.5,536.3 1261.1,540.2 1272.2,544.4 1283.7,548.8 1295.5,553.3 1307.4,557.9 1319.3,562.6 1331.1,567.2 1342.7,571.8 1354.1,576.3 1365.5,580.9 1377.0,585.5 1388.9,590.3 1401.1,595.2 1413.9,600.3 1427.0,605.5 1440.5,610.9 1454.1,616.3 1467.7,621.7 1481.1,627.2 1494.5,632.7 1507.8,638.1 1521.2,643.7 1534.6,649.3 1547.9,655.1 1561.3,661.1 1574.6,667.3 1587.8,673.8 1601.1,680.5 1614.3,687.2 1627.5,694.0 1640.8,700.8 1654.0,707.6 1667.2,714.5 1680.4,721.3 1693.7,728.3 1706.9,735.3 1720.1,742.4 1733.3,749.5 1746.6,756.8 1759.8,764.1 1773.0,771.4 1786.2,778.8 1799.5,786.2 1812.7,793.5 1825.8,800.9 1839.0,808.3 1852.2,815.7 1865.6,823.2 1879.0,830.9 1892.6,838.7 1906.4,846.6 1920.3,854.6 1934.1,862.7 1947.9,870.8 1961.5,878.9 1975.0,887.0 1988.3,895.2 2001.5,903.3 2014.7,911.6 2027.8,919.9 2041.0,928.5 2054.3,937.2 2067.5,946.0 2080.7,955.0 2094.0,964.1 2107.2,973.3 2120.4,982.6 2133.9,992.1 2147.6,1002.0 2161.4,1012.0 2174.8,1021.9 2187.7,1031.5 2199.8,1040.6 2211.1,1049.2 2221.9,1057.5 2232.1,1065.5 2241.8,1073.2 2250.9,1080.6 2259.5,1087.7 2267.4,1094.4 2274.7,1100.7 2281.3,1106.7 2287.6,1112.5 2293.6,1118.1 2299.4,1123.8 2304.9,1129.3 2310.0,1134.5 2314.8,1139.6 2319.4,1144.7 2324.2,1150.0 2329.2,1155.6 2334.5,1161.3 2339.8,1167.0 2345.3,1172.8 2350.9,1179.1 2356.6,1185.8 2362.4,1193.2 2368.6,1201.7 2375.1,1211.1 2381.7,1221.1 2388.2,1231.0 2394.1,1240.2 2399.3,1248.4 2403.7,1255.2 2407.5,1261.2 2410.8,1266.6 2413.7,1271.8 2416.6,1276.9 2419.4,1282.4 2422.2,1288.1 2424.8,1294.0 2427.2,1299.9 2429.5,1305.6 2431.6,1311.2 2433.4,1316.5 2435.1,1321.6 2436.5,1326.5 2437.7,1331.1 2438.8,1335.7 2439.7,1340.1 2440.5,1344.5 2441.1,1348.8 2441.6,1353.1 2442.0,1357.2 2442.2,1361.3 2442.4,1365.2 2442.5,1369.0 2442.5,1372.6 2442.5,1376.1 2442.3,1379.4 2442.1,1382.7 2441.8,1386.0 2441.5,1389.3 2441.2,1392.6 2440.8,1395.9 2440.5,1399.3 2440.0,1402.7 2439.3,1406.1 2438.4,1409.5 2437.3,1413.0 2435.9,1416.5 2434.5,1420.0 2432.8,1423.5 2431.1,1426.9 2429.2,1430.2 2427.1,1433.3 2425.0,1436.5 2422.7,1439.5 2420.2,1442.5 2417.6,1445.4 2414.8,1448.2 2411.8,1450.9 2408.6,1453.5 2405.3,1456.0 2401.8,1458.4 2398.1,1460.6 2394.2,1462.7 2390.2,1464.6 2386.0,1466.3 2381.6,1467.9 2377.0,1469.3 2372.4,1470.7 2367.7,1471.9 2363.2,1473.0 2359.0,1473.9 2354.6,1474.8 2349.7,1475.5 2344.1,1476.3 2337.3,1477.0 2328.4,1477.8 2317.4,1478.5 2305.7,1479.3 2294.4,1480.0 2284.8,1480.6 2278.0,1481.0 2277.8,1478.0 2284.6,1477.6 2294.2,1477.0 2305.5,1476.3 2317.2,1475.6 2328.1,1474.8 2337.0,1474.0 2343.7,1473.3 2349.3,1472.6 2354.1,1471.8 2358.4,1471.0 2362.6,1470.1 2367.0,1469.0 2371.6,1467.8 2376.2,1466.5 2380.6,1465.1 2384.8,1463.2 2388.4,1460.4 2391.6,1457.4 2394.4,1454.2 2396.9,1450.8 2399.0,1447.2 2400.8,1443.5 2403.3,1441.0 2405.5,1438.4 2407.6,1435.8 2409.4,1433.1 2411.1,1430.4 2412.7,1427.6 2414.1,1424.7 2415.4,1421.8 2416.5,1418.9 2417.5,1415.8 2418.3,1412.8 2419.0,1409.8 2419.5,1406.9 2419.8,1404.1 2419.9,1401.6 2419.7,1399.0 2419.5,1396.4 2419.2,1393.5 2418.9,1390.4 2418.6,1387.1 2418.3,1384.0 2417.9,1380.9 2417.5,1378.1 2417.0,1375.3 2416.4,1372.4 2415.7,1369.4 2414.9,1366.1 2414.1,1362.8 2413.3,1359.5 2412.3,1356.2 2411.2,1352.9 2410.0,1349.5 2408.6,1346.1 2407.2,1342.6 2405.6,1339.1 2403.9,1335.5 2402.1,1331.7 2400.0,1327.8 2397.7,1323.4 2395.1,1318.8 2392.3,1314.1 2389.5,1309.4 2386.5,1304.7 2383.4,1300.2 2380.3,1296.2 2377.3,1292.4 2374.0,1288.5 2370.3,1284.1 2366.1,1279.0 2361.1,1272.8 2355.6,1265.0 2349.3,1256.2 2342.7,1247.0 2336.0,1237.8 2329.6,1229.4 2323.8,1222.3 2318.7,1216.4 2313.7,1211.0 2308.7,1205.8 2303.4,1200.6 2297.8,1195.1 2292.2,1189.5 2287.1,1183.8 2282.4,1178.6 2278.0,1173.8 2273.7,1169.2 2269.2,1164.5 2264.2,1159.5 2258.9,1154.4 2253.4,1149.2 2247.6,1143.8 2241.5,1138.3 2234.8,1132.5 2227.3,1126.2 2219.2,1119.5 2210.4,1112.4 2201.1,1104.9 2191.1,1097.2 2180.6,1089.1 2169.5,1080.6 2157.7,1071.7 2145.0,1062.3 2131.7,1052.5 2118.2,1042.7 2104.7,1032.9 2091.4,1023.5 2078.5,1014.4 2065.5,1005.4 2052.5,996.5 2039.5,987.7 2026.6,979.0 2013.6,970.5 2000.7,962.2 1987.9,954.0 1975.0,945.9 1962.0,937.9 1948.9,929.9 1935.7,922.0 1922.3,914.0 1908.8,906.0 1895.1,898.0 1881.3,890.1 1867.6,882.2 1854.1,874.5 1840.8,866.9 1827.6,859.4 1814.4,852.0 1801.3,844.7 1788.2,837.4 1775.0,830.0 1762.4,821.6 1749.8,813.1 1737.3,804.7 1724.8,796.4 1712.3,788.1 1699.9,780.0 1687.5,771.6 1675.2,763.3 1662.8,755.1 1650.4,746.9 1637.9,738.8 1625.4,730.7 1612.2,724.0 1599.0,717.2 1586.0,710.5 1573.0,703.9 1560.1,697.6 1547.3,691.4 1534.6,685.1 1521.8,679.0 1508.9,673.1 1495.8,667.2 1482.8,661.3 1469.7,655.4 1456.3,649.8 1442.9,644.2 1429.4,638.7 1416.0,633.2 1402.9,627.9 1390.2,622.6 1377.9,617.6 1366.2,612.7 1354.7,607.9 1343.4,603.2 1332.0,598.5 1320.6,593.8 1309.0,588.8 1297.3,583.8 1285.6,578.8 1274.0,573.9 1262.8,569.1 1251.9,564.6 1241.5,560.7 1231.5,556.9 1221.8,553.3 1212.3,549.9 1202.6,546.4 1192.8,543.0 1182.9,539.5 1173.0,536.1 1163.1,532.7 1152.8,529.3 1142.0,525.7 1130.7,521.9 1118.4,517.5 1105.2,512.9 1091.6,508.1 1078.0,503.3 1064.8,498.6 1052.4,494.1 1040.4,489.5 1028.1,484.9 1016.3,480.3 1005.6,476.1 996.7,472.4 990.2,469.6" fill="#838487" opacity="0.200"/>
<polygon points="995.2,453.8 1001.9,456.0 1011.1,459.0 1022.0,462.5 1034.0,466.3 1046.5,470.3 1058.7,474.1 1071.2,478.0 1084.5,482.2 1098.3,486.4 1112.1,490.6 1125.4,494.8 1137.9,498.6 1149.4,502.2 1160.2,505.6 1170.6,508.8 1180.7,512.0 1190.8,515.3 1201.0,518.7 1211.0,522.1 1220.8,525.5 1230.6,529.0 1240.4,532.6 1250.5,536.3 1261.1,540.2 1272.2,544.4 1283.7,548.8 1295.5,553.3 1307.4,557.9 1319.3,562.6 1331.1,567.2 1342.7,571.8 1354.1,576.3 1365.5,580.9 1377.0,585.5 1388.9,590.3 1401.1,595.2 1413.9,600.3 1427.0,605.5 1440.5,610.9 1454.1,616.3 1467.7,621.7 1481.1,627.2 1494.5,632.7 1507.8,638.1 1521.2,643.7 1534.6,649.3 1547.9,655.1 1561.3,661.1 1574.6,667.3 1587.8,673.8 1601.1,680.5 1614.3,687.2 1627.5,694.0 1640.8,700.8 1654.0,707.6 1667.2,714.5 1680.4,721.3 1693.7,728.3 1706.9,735.3 1720.1,742.4 1733.3,749.5 1746.6,756.8 1759.8,764.1 1773.0,771.4 1786.2,778.8 1799.5,786.2 1812.7,793.5 1825.8,800.9 1839.0,808.3 1852.2,815.7 1865.6,823.2 1879.0,830.9 1892.6,838.7 1906.4,846.6 1920.3,854.6 1934.1,862.7 1947.9,870.8 1961.5,878.9 1975.0,887.0 1988.3,895.2 2001.5,903.3 2014.7,911.6 2027.8,919.9 2041.0,928.5 2054.3,937.2 2067.5,946.0 2080.7,955.0 2094.0,964.1 2107.2,973.3 2120.4,982.6 2133.9,992.1 2147.6,1002.0 2161.4,1012.0 2174.8,1021.9 2187.7,1031.5 2199.8,1040.6 2211.1,1049.2 2221.9,1057.5 2232.1,1065.5 2241.8,1073.2 2250.9,1080.6 2259.5,1087.7 2267.4,1094.4 2274.7,1100.7 2281.3,1106.7 2287.6,1112.5 2293.6,1118.1 2299.4,1123.8 2304.9,1129.3 2310.0,1134.5 2314.8,1139.6 2319.4,1144.7 2324.2,1150.0 2329.2,1155.6 2334.5,1161.3 2339.8,1167.0 2345.3,1172.8 2350.9,1179.1 2356.6,1185.8 2362.4,1193.2 2368.6,1201.7 2375.1,1211.1 2381.7,1221.1 2388.2,1231.0 2394.1,1240.2 2399.3,1248.4 2403.7,1255.2 2407.5,1261.2 2410.8,1266.6 2413.7,1271.8 2416.6,1276.9 2419.4,1282.4 2422.2,1288.1 2424.8,1294.0 2427.2,1299.9 2429.5,1305.6 2431.6,1311.2 2433.4,1316.5 2435.1,1321.6 2436.5,1326.5 2437.7,1331.1 2438.8,1335.7 2439.7,1340.1 2440.5,1344.5 2441.1,1348.8 2441.6,1353.1 2442.0,1357.2 2442.2,1361.3 2442.4,1365.2 2442.5,1369.0 2442.5,1372.6 2442.5,1376.1 2442.3,1379.4 2442.1,1382.7 2441.8,1386.0 2441.5,1389.3 2441.2,1392.6 2440.8,1395.9 2440.5,1399.3 2440.0,1402.7 2439.3,1406.1 2438.4,1409.5 2437.3,1413.0 2435.9,1416.5 2434.5,1420.0 2432.8,1423.5 2431.1,1426.9 2429.2,1430.2 2427.1,1433.3 2425.0,1436.5 2422.7,1439.5 2420.2,1442.5 2417.6,1445.4 2414.8,1448.2 2411.8,1450.9 2408.6,1453.5 2405.3,1456.0 2401.8,1458.4 2398.1,1460.6 2394.2,1462.7 2390.2,1464.6 2386.0,1466.3 2381.6,1467.9 2377.0,1469.3 2372.4,1470.7 2367.7,1471.9 2363.2,1473.0 2359.0,1473.9 2354.6,1474.8 2349.7,1475.5 2344.1,1476.3 2337.3,1477.0 2328.4,1477.8 2317.4,1478.5 2305.7,1479.3 2294.4,1480.0 2284.8,1480.6 2278.0,1481.0 2277.8,1478.0 2284.6,1477.6 2294.2,1477.0 2305.5,1476.3 2317.2,1475.6 2328.1,1474.8 2337.0,1474.0 2343.7,1473.3 2349.3,1472.6 2354.1,1471.8 2358.4,1471.0 2362.6,1470.1 2367.0,1469.0 2371.6,1467.8 2376.2,1466.5 2380.6,1465.1 2384.9,1463.5 2389.0,1461.8 2392.9,1460.0 2396.6,1458.0 2400.2,1455.8 2403.5,1453.5 2406.8,1451.1 2408.9,1447.5 2410.7,1443.9 2412.0,1440.0 2412.9,1436.1 2413.4,1432.2 2413.9,1428.5 2415.5,1425.6 2416.8,1422.7 2418.0,1419.7 2419.1,1416.6 2420.0,1413.6 2420.8,1410.5 2421.4,1407.5 2421.8,1404.7 2422.0,1402.0 2422.0,1399.4 2421.8,1396.7 2421.6,1393.7 2421.4,1390.6 2421.1,1387.4 2420.9,1384.2 2420.6,1381.1 2420.3,1378.2 2419.9,1375.4 2419.3,1372.4 2418.8,1369.3 2418.1,1366.0 2417.4,1362.6 2416.6,1359.2 2415.7,1355.8 2414.7,1352.4 2413.5,1349.0 2412.2,1345.4 2410.9,1341.8 2409.4,1338.1 2407.8,1334.4 2406.0,1330.6 2403.9,1326.4 2401.6,1322.0 2399.1,1317.3 2396.5,1312.4 2393.6,1307.5 2390.7,1302.8 2387.7,1298.1 2384.6,1293.9 2381.6,1289.9 2378.4,1285.9 2374.8,1281.4 2370.6,1276.1 2365.7,1269.8 2360.2,1262.1 2354.0,1253.2 2347.4,1243.8 2340.7,1234.6 2334.3,1226.1 2328.4,1218.8 2323.3,1212.7 2318.2,1207.2 2313.1,1201.9 2307.8,1196.5 2302.3,1191.0 2296.7,1185.4 2291.6,1179.7 2286.8,1174.5 2282.4,1169.6 2278.1,1165.0 2273.5,1160.2 2268.5,1155.2 2263.1,1150.0 2257.5,1144.7 2251.7,1139.4 2245.5,1133.8 2238.7,1127.9 2231.2,1121.6 2223.0,1114.8 2214.2,1107.6 2204.8,1100.2 2194.8,1092.4 2184.3,1084.3 2173.2,1075.8 2161.3,1066.9 2148.6,1057.4 2135.3,1047.6 2121.7,1037.8 2108.2,1028.0 2094.9,1018.6 2081.9,1009.4 2068.9,1000.4 2055.9,991.5 2042.9,982.7 2029.9,974.0 2016.9,965.5 2004.0,957.1 1991.1,948.9 1978.2,940.8 1965.2,932.8 1952.1,924.8 1938.8,916.8 1925.4,908.8 1911.8,900.8 1898.1,892.8 1884.4,884.8 1870.7,877.0 1857.1,869.2 1843.8,861.6 1830.6,854.1 1817.4,846.8 1804.3,839.4 1791.2,832.1 1778.0,824.7 1765.4,816.2 1752.8,807.7 1740.3,799.3 1727.8,790.9 1715.3,782.6 1702.9,774.4 1690.5,766.0 1678.2,757.7 1665.8,749.4 1653.3,741.3 1640.8,733.1 1628.3,725.1 1615.2,718.2 1602.1,711.3 1589.0,704.4 1576.1,697.7 1563.2,691.1 1550.3,684.8 1537.5,678.6 1524.6,672.6 1511.6,666.7 1498.4,660.9 1485.3,655.1 1472.1,649.3 1458.8,643.7 1445.3,638.2 1431.8,632.7 1418.4,627.3 1405.3,621.9 1392.5,616.7 1380.3,611.7 1368.5,606.8 1357.0,602.1 1345.7,597.4 1334.3,592.8 1322.9,588.1 1311.2,583.2 1299.5,578.3 1287.7,573.3 1276.1,568.5 1264.8,563.9 1253.9,559.4 1243.4,555.5 1233.4,551.7 1223.7,548.2 1214.1,544.7 1204.4,541.3 1194.5,537.8 1184.5,534.4 1174.7,531.0 1164.7,527.7 1154.4,524.3 1143.6,520.8 1132.2,517.0 1119.9,512.7 1106.7,508.2 1093.0,503.6 1079.4,498.9 1066.1,494.3 1053.7,490.0 1041.6,485.6 1029.3,481.1 1017.5,476.7 1006.7,472.7 997.7,469.2 991.2,466.5" fill="#838487" opacity="0.200"/>
<polygon points="995.2,453.8 1001.9,456.0 1011.1,459.0 1022.0,462.5 1034.0,466.3 1046.5,470.3 1058.7,474.1 1071.2,478.0 1084.5,482.2 1098.3,486.4 1112.1,490.6 1125.4,494.8 1137.9,498.6 1149.4,502.2 1160.2,505.6 1170.6,508.8 1180.7,512.0 1190.8,515.3 1201.0,518.7 1211.0,522.1 1220.8,525.5 1230.6,529.0 1240.4,532.6 1250.5,536.3 1261.1,540.2 1272.2,544.4 1283.7,548.8 1295.5,553.3 1307.4,557.9 1319.3,562.6 1331.1,567.2 1342.7,571.8 1354.1,576.3 1365.5,580.9 1377.0,585.5 1388.9,590.3 1401.1,595.2 1413.9,600.3 1427.0,605.5 1440.5,610.9 1454.1,616.3 1467.7,621.7 1481.1,627.2 1494.5,632.7 1507.8,638.1 1521.2,643.7 1534.6,649.3 1547.9,655.1 1561.3,661.1 1574.6,667.3 1587.8,673.8 1601.1,680.5 1614.3,687.2 1627.5,694.0 1640.8,700.8 1654.0,707.6 1667.2,714.5 1680.4,721.3 1693.7,728.3 1706.9,735.3 1720.1,742.4 1733.3,749.5 1746.6,756.8 1759.8,764.1 1773.0,771.4 1786.2,778.8 1799.5,786.2 1812.7,793.5 1825.8,800.9 1839.0,808.3 1852.2,815.7 1865.6,823.2 1879.0,830.9 1892.6,838.7 1906.4,846.6 1920.3,854.6 1934.1,862.7 1947.9,870.8 1961.5,878.9 1975.0,887.0 1988.3,895.2 2001.5,903.3 2014.7,911.6 2027.8,919.9 2041.0,928.5 2054.3,937.2 2067.5,946.0 2080.7,955.0 2094.0,964.1 2107.2,973.3 2120.4,982.6 2133.9,992.1 2147.6,1002.0 2161.4,1012.0 2174.8,1021.9 2187.7,1031.5 2199.8,1040.6 2211.1,1049.2 2221.9,1057.5 2232.1,1065.5 2241.8,1073.2 2250.9,1080.6 2259.5,1087.7 2267.4,1094.4 2274.7,1100.7 2281.3,1106.7 2287.6,1112.5 2293.6,1118.1 2299.4,1123.8 2304.9,1129.3 2310.0,1134.5 2314.8,1139.6 2319.4,1144.7 2324.2,1150.0 2329.2,1155.6 2334.5,1161.3 2339.8,1167.0 2345.3,1172.8 2350.9,1179.1 2356.6,1185.8 2362.4,1193.2 2368.6,1201.7 2375.1,1211.1 2381.7,1221.1 2388.2,1231.0 2394.1,1240.2 2399.3,1248.4 2403.7,1255.2 2407.5,1261.2 2410.8,1266.6 2413.7,1271.8 2416.6,1276.9 2419.4,1282.4 2422.2,1288.1 2424.8,1294.0 2427.2,1299.9 2429.5,1305.6 2431.6,1311.2 2433.4,1316.5 2435.1,1321.6 2436.5,1326.5 2437.7,1331.1 2438.8,1335.7 2439.7,1340.1 2440.5,1344.5 2441.1,1348.8 2441.6,1353.1 2442.0,1357.2 2442.2,1361.3 2442.4,1365.2 2442.5,1369.0 2442.5,1372.6 2442.5,1376.1 2442.3,1379.4 2442.1,1382.7 2441.8,1386.0 2441.5,1389.3 2441.2,1392.6 2440.8,1395.9 2440.5,1399.3 2440.0,1402.7 2439.3,1406.1 2438.4,1409.5 2437.3,1413.0 2435.9,1416.5 2434.5,1420.0 2432.8,1423.5 2431.1,1426.9 2429.2,1430.2 2427.1,1433.3 2425.0,1436.5 2422.7,1439.5 2420.2,1442.5 2417.6,1445.4 2414.8,1448.2 2411.8,1450.9 2408.6,1453.5 2405.3,1456.0 2401.8,1458.4 2398.1,1460.6 2394.2,1462.7 2390.2,1464.6 2386.0,1466.3 2381.6,1467.9 2377.0,1469.3 2372.4,1470.7 2367.7,1471.9 2363.2,1473.0 2359.0,1473.9 2354.6,1474.8 2349.7,1475.5 2344.1,1476.3 2337.3,1477.0 2328.4,1477.8 2317.4,1478.5 2305.7,1479.3 2294.4,1480.0 2284.8,1480.6 2278.0,1481.0 2277.8,1478.0 2284.6,1477.6 2294.2,1477.0 2305.5,1476.3 2317.2,1475.6 2328.1,1474.8 2337.0,1474.0 2343.7,1473.3 2349.3,1472.6 2354.1,1471.8 2358.4,1471.0 2362.6,1470.1 2367.0,1469.0 2371.6,1467.8 2376.2,1466.5 2380.6,1465.1 2384.9,1463.5 2389.0,1461.8 2392.9,1460.0 2396.6,1458.0 2400.2,1455.8 2403.5,1453.5 2406.8,1451.1 2409.8,1448.6 2412.7,1446.0 2415.4,1443.3 2418.0,1440.5 2420.3,1437.7 2422.3,1434.5 2422.9,1430.5 2423.2,1426.6 2422.9,1422.4 2422.1,1418.2 2421.6,1414.3 2422.5,1411.2 2423.2,1408.1 2423.7,1405.3 2423.9,1402.5 2424.0,1399.8 2423.9,1397.0 2423.8,1394.0 2423.7,1390.8 2423.5,1387.6 2423.3,1384.4 2423.1,1381.3 2422.9,1378.4 2422.5,1375.5 2422.1,1372.5 2421.6,1369.3 2421.0,1365.9 2420.3,1362.5 2419.6,1359.0 2418.8,1355.5 2417.9,1352.0 2416.8,1348.4 2415.6,1344.8 2414.3,1341.1 2412.8,1337.3 2411.3,1333.5 2409.5,1329.5 2407.6,1325.2 2405.3,1320.7 2402.9,1315.8 2400.3,1310.9 2397.5,1305.9 2394.6,1300.9 2391.6,1296.2 2388.6,1291.8 2385.6,1287.6 2382.4,1283.5 2378.9,1278.9 2374.7,1273.5 2369.9,1267.1 2364.5,1259.3 2358.3,1250.4 2351.7,1241.0 2345.0,1231.7 2338.6,1223.0 2332.7,1215.6 2327.5,1209.3 2322.3,1203.6 2317.2,1198.2 2311.8,1192.8 2306.3,1187.3 2300.8,1181.6 2295.7,1176.0 2291.0,1170.7 2286.5,1165.8 2282.1,1161.1 2277.5,1156.3 2272.4,1151.2 2266.9,1146.0 2261.3,1140.7 2255.4,1135.2 2249.2,1129.6 2242.3,1123.7 2234.8,1117.3 2226.5,1110.5 2217.7,1103.3 2208.3,1095.8 2198.3,1088.0 2187.7,1079.8 2176.6,1071.4 2164.6,1062.4 2151.9,1052.9 2138.6,1043.1 2125.0,1033.2 2111.5,1023.5 2098.2,1014.0 2085.1,1004.9 2072.1,995.8 2059.0,986.8 2046.0,978.0 2033.0,969.3 2020.0,960.8 2007.0,952.4 1994.1,944.2 1981.1,936.1 1968.1,928.0 1955.0,920.0 1941.7,912.0 1928.3,904.0 1914.6,895.9 1900.9,887.9 1887.1,880.0 1873.4,872.1 1859.9,864.4 1846.5,856.8 1833.3,849.3 1820.1,841.9 1807.0,834.5 1793.9,827.2 1780.7,819.8 1768.1,811.3 1755.5,802.9 1743.0,794.4 1730.5,786.0 1718.0,777.7 1705.5,769.5 1693.1,761.1 1680.7,752.9 1668.2,744.7 1655.8,736.5 1643.2,728.5 1630.7,720.4 1617.6,713.4 1604.5,706.4 1591.5,699.5 1578.6,692.6 1565.7,685.9 1552.8,679.5 1539.8,673.3 1526.8,667.4 1513.7,661.6 1500.5,655.8 1487.3,650.1 1474.1,644.4 1460.7,638.9 1447.2,633.3 1433.7,627.9 1420.3,622.5 1407.2,617.2 1394.4,612.0 1382.2,607.0 1370.4,602.1 1358.9,597.4 1347.5,592.8 1336.2,588.2 1324.7,583.5 1313.0,578.7 1301.2,573.8 1289.4,569.0 1277.7,564.2 1266.4,559.6 1255.4,555.3 1244.9,551.3 1234.9,547.6 1225.2,544.0 1215.5,540.6 1205.9,537.1 1195.9,533.7 1185.9,530.3 1176.0,526.9 1165.9,523.6 1155.6,520.3 1144.8,516.8 1133.4,513.1 1121.1,508.9 1107.8,504.5 1094.1,499.9 1080.4,495.4 1067.2,490.9 1054.8,486.7 1042.6,482.4 1030.3,478.1 1018.4,473.8 1007.6,469.9 998.5,466.6 991.9,464.0" fill="#838487" opacity="0.200"/>
<polygon points="995.2,453.8 1001.9,456.0 1011.1,459.0 1022.0,462.5 1034.0,466.3 1046.5,470.3 1058.7,474.1 1071.2,478.0 1084.5,482.2 1098.3,486.4 1112.1,490.6 1125.4,494.8 1137.9,498.6 1149.4,502.2 1160.2,505.6 1170.6,508.8 1180.7,512.0 1190.8,515.3 1201.0,518.7 1211.0,522.1 1220.8,525.5 1230.6,529.0 1240.4,532.6 1250.5,536.3 1261.1,540.2 1272.2,544.4 1283.7,548.8 1295.5,553.3 1307.4,557.9 1319.3,562.6 1331.1,567.2 1342.7,571.8 1354.1,576.3 1365.5,580.9 1377.0,585.5 1388.9,590.3 1401.1,595.2 1413.9,600.3 1427.0,605.5 1440.5,610.9 1454.1,616.3 1467.7,621.7 1481.1,627.2 1494.5,632.7 1507.8,638.1 1521.2,643.7 1534.6,649.3 1547.9,655.1 1561.3,661.1 1574.6,667.3 1587.8,673.8 1601.1,680.5 1614.3,687.2 1627.5,694.0 1640.8,700.8 1654.0,707.6 1667.2,714.5 1680.4,721.3 1693.7,728.3 1706.9,735.3 1720.1,742.4 1733.3,749.5 1746.6,756.8 1759.8,764.1 1773.0,771.4 1786.2,778.8 1799.5,786.2 1812.7,793.5 1825.8,800.9 1839.0,808.3 1852.2,815.7 1865.6,823.2 1879.0,830.9 1892.6,838.7 1906.4,846.6 1920.3,854.6 1934.1,862.7 1947.9,870.8 1961.5,878.9 1975.0,887.0 1988.3,895.2 2001.5,903.3 2014.7,911.6 2027.8,919.9 2041.0,928.5 2054.3,937.2 2067.5,946.0 2080.7,955.0 2094.0,964.1 2107.2,973.3 2120.4,982.6 2133.9,992.1 2147.6,1002.0 2161.4,1012.0 2174.8,1021.9 2187.7,1031.5 2199.8,1040.6 2211.1,1049.2 2221.9,1057.5 2232.1,1065.5 2241.8,1073.2 2250.9,1080.6 2259.5,1087.7 2267.4,1094.4 2274.7,1100.7 2281.3,1106.7 2287.6,1112.5 2293.6,1118.1 2299.4,1123.8 2304.9,1129.3 2310.0,1134.5 2314.8,1139.6 2319.4,1144.7 2324.2,1150.0 2329.2,1155.6 2334.5,1161.3 2339.8,1167.0 2345.3,1172.8 2350.9,1179.1 2356.6,1185.8 2362.4,1193.2 2368.6,1201.7 2375.1,1211.1 2381.7,1221.1 2388.2,1231.0 2394.1,1240.2 2399.3,1248.4 2403.7,1255.2 2407.5,1261.2 2410.8,1266.6 2413.7,1271.8 2416.6,1276.9 2419.4,1282.4 2422.2,1288.1 2424.8,1294.0 2427.2,1299.9 2429.5,1305.6 2431.6,1311.2 2433.4,1316.5 2435.1,1321.6 2436.5,1326.5 2437.7,1331.1 2438.8,1335.7 2439.7,1340.1 2440.5,1344.5 2441.1,1348.8 2441.6,1353.1 2442.0,1357.2 2442.2,1361.3 2442.4,1365.2 2442.5,1369.0 2442.5,1372.6 2442.5,1376.1 2442.3,1379.4 2442.1,1382.7 2441.8,1386.0 2441.5,1389.3 2441.2,1392.6 2440.8,1395.9 2440.5,1399.3 2440.0,1402.7 2439.3,1406.1 2438.4,1409.5 2437.3,1413.0 2435.9,1416.5 2434.5,1420.0 2432.8,1423.5 2431.1,1426.9 2429.2,1430.2 2427.1,1433.3 2425.0,1436.5 2422.7,1439.5 2420.2,1442.5 2417.6,1445.4 2414.8,1448.2 2411.8,1450.9 2408.6,1453.5 2405.3,1456.0 2401.8,1458.4 2398.1,1460.6 2394.2,1462.7 2390.2,1464.6 2386.0,1466.3 2381.6,1467.9 2377.0,1469.3 2372.4,1470.7 2367.7,1471.9 2363.2,1473.0 2359.0,1473.9 2354.6,1474.8 2349.7,1475.5 2344.1,1476.3 2337.3,1477.0 2328.4,1477.8 2317.4,1478.5 2305.7,1479.3 2294.4,1480.0 2284.8,1480.6 2278.0,1481.0 2277.8,1478.0 2284.6,1477.6 2294.2,1477.0 2305.5,1476.3 2317.2,1475.6 2328.1,1474.8 2337.0,1474.0 2343.7,1473.3 2349.3,1472.6 2354.1,1471.8 2358.4,1471.0 2362.6,1470.1 2367.0,1469.0 2371.6,1467.8 2376.2,1466.5 2380.6,1465.1 2384.9,1463.5 2389.0,1461.8 2392.9,1460.0 2396.6,1458.0 2400.2,1455.8 2403.5,1453.5 2406.8,1451.1 2409.8,1448.6 2412.7,1446.0 2415.4,1443.3 2418.0,1440.5 2420.3,1437.7 2422.6,1434.7 2424.6,1431.7 2426.6,1428.6 2428.4,1425.4 2430.2,1422.1 2431.2,1418.6 2430.6,1414.4 2429.6,1410.4 2428.2,1406.6 2426.2,1403.0 2425.9,1400.1 2425.9,1397.3 2425.9,1394.2 2425.8,1391.0 2425.7,1387.8 2425.6,1384.6 2425.5,1381.5 2425.3,1378.5 2425.0,1375.5 2424.6,1372.5 2424.2,1369.2 2423.7,1365.8 2423.1,1362.3 2422.4,1358.8 2421.7,1355.2 2420.8,1351.6 2419.8,1347.9 2418.7,1344.2 2417.4,1340.4 2416.0,1336.5 2414.5,1332.6 2412.8,1328.4 2410.9,1324.1 2408.8,1319.4 2406.4,1314.5 2403.8,1309.4 2401.1,1304.3 2398.2,1299.3 2395.3,1294.3 2392.3,1289.8 2389.4,1285.5 2386.2,1281.2 2382.7,1276.5 2378.6,1271.1 2373.8,1264.6 2368.4,1256.8 2362.3,1247.8 2355.7,1238.3 2349.0,1228.9 2342.6,1220.1 2336.7,1212.6 2331.4,1206.1 2326.2,1200.3 2320.9,1194.8 2315.6,1189.3 2310.1,1183.8 2304.6,1178.1 2299.5,1172.5 2294.8,1167.2 2290.3,1162.3 2285.9,1157.5 2281.2,1152.7 2276.0,1147.5 2270.5,1142.2 2264.8,1136.9 2258.9,1131.4 2252.6,1125.7 2245.7,1119.7 2238.1,1113.3 2229.8,1106.4 2220.9,1099.2 2211.5,1091.7 2201.4,1083.9 2190.9,1075.7 2179.7,1067.2 2167.8,1058.2 2155.0,1048.7 2141.7,1038.9 2128.1,1029.0 2114.5,1019.2 2101.2,1009.8 2088.1,1000.6 2075.0,991.5 2062.0,982.5 2048.9,973.7 2035.9,965.0 2022.8,956.4 2009.8,948.0 1996.9,939.8 1983.9,931.6 1970.8,923.6 1957.7,915.6 1944.4,907.5 1930.9,899.5 1917.3,891.5 1903.5,883.4 1889.7,875.5 1876.0,867.6 1862.5,859.9 1849.1,852.2 1835.9,844.8 1822.7,837.4 1809.6,830.0 1796.4,822.7 1783.2,815.3 1770.6,806.9 1758.0,798.4 1745.4,790.0 1732.9,781.7 1720.4,773.4 1707.8,765.2 1695.4,756.9 1682.9,748.7 1670.4,740.6 1657.8,732.5 1645.3,724.5 1632.7,716.6 1619.6,709.5 1606.6,702.5 1593.6,695.4 1580.6,688.5 1567.7,681.8 1554.7,675.2 1541.7,669.1 1528.6,663.2 1515.4,657.5 1502.2,651.8 1489.0,646.2 1475.7,640.5 1462.3,635.0 1448.8,629.5 1435.2,624.0 1421.8,618.6 1408.7,613.3 1395.9,608.2 1383.7,603.2 1371.9,598.4 1360.4,593.7 1349.0,589.1 1337.6,584.5 1326.1,579.9 1314.4,575.1 1302.6,570.3 1290.7,565.5 1279.1,560.8 1267.6,556.3 1256.7,551.9 1246.2,548.0 1236.1,544.3 1226.4,540.7 1216.7,537.3 1207.0,533.8 1197.0,530.4 1187.0,527.0 1177.0,523.7 1167.0,520.4 1156.6,517.1 1145.8,513.6 1134.4,510.0 1122.0,505.9 1108.7,501.5 1095.0,497.0 1081.3,492.6 1068.0,488.2 1055.6,484.1 1043.4,479.9 1031.0,475.7 1019.1,471.5 1008.3,467.7 999.2,464.5 992.6,462.0" fill="#838487" opacity="0.200"/>
<polygon points="995.2,453.8 1001.9,456.0 1011.1,459.0 1022.0,462.5 1034.0,466.3 1046.5,470.3 1058.7,474.1 1071.2,478.0 1084.5,482.2 1098.3,486.4 1112.1,490.6 1125.4,494.8 1137.9,498.6 1149.4,502.2 1160.2,505.6 1170.6,508.8 1180.7,512.0 1190.8,515.3 1201.0,518.7 1211.0,522.1 1220.8,525.5 1230.6,529.0 1240.4,532.6 1250.5,536.3 1261.1,540.2 1272.2,544.4 1283.7,548.8 1295.5,553.3 1307.4,557.9 1319.3,562.6 1331.1,567.2 1342.7,571.8 1354.1,576.3 1365.5,580.9 1377.0,585.5 1388.9,590.3 1401.1,595.2 1413.9,600.3 1427.0,605.5 1440.5,610.9 1454.1,616.3 1467.7,621.7 1481.1,627.2 1494.5,632.7 1507.8,638.1 1521.2,643.7 1534.6,649.3 1547.9,655.1 1561.3,661.1 1574.6,667.3 1587.8,673.8 1601.1,680.5 1614.3,687.2 1627.5,694.0 1640.8,700.8 1654.0,707.6 1667.2,714.5 1680.4,721.3 1693.7,728.3 1706.9,735.3 1720.1,742.4 1733.3,749.5 1746.6,756.8 1759.8,764.1 1773.0,771.4 1786.2,778.8 1799.5,786.2 1812.7,793.5 1825.8,800.9 1839.0,808.3 1852.2,815.7 1865.6,823.2 1879.0,830.9 1892.6,838.7 1906.4,846.6 1920.3,854.6 1934.1,862.7 1947.9,870.8 1961.5,878.9 1975.0,887.0 1988.3,895.2 2001.5,903.3 2014.7,911.6 2027.8,919.9 2041.0,928.5 2054.3,937.2 2067.5,946.0 2080.7,955.0 2094.0,964.1 2107.2,973.3 2120.4,982.6 2133.9,992.1 2147.6,1002.0 2161.4,1012.0 2174.8,1021.9 2187.7,1031.5 2199.8,1040.6 2211.1,1049.2 2221.9,1057.5 2232.1,1065.5 2241.8,1073.2 2250.9,1080.6 2259.5,1087.7 2267.4,1094.4 2274.7,1100.7 2281.3,1106.7 2287.6,1112.5 2293.6,1118.1 2299.4,1123.8 2304.9,1129.3 2310.0,1134.5 2314.8,1139.6 2319.4,1144.7 2324.2,1150.0 2329.2,1155.6 2334.5,1161.3 2339.8,1167.0 2345.3,1172.8 2350.9,1179.1 2356.6,1185.8 2362.4,1193.2 2368.6,1201.7 2375.1,1211.1 2381.7,1221.1 2388.2,1231.0 2394.1,1240.2 2399.3,1248.4 2403.7,1255.2 2407.5,1261.2 2410.8,1266.6 2413.7,1271.8 2416.6,1276.9 2419.4,1282.4 2422.2,1288.1 2424.8,1294.0 2427.2,1299.9 2429.5,1305.6 2431.6,1311.2 2433.4,1316.5 2435.1,1321.6 2436.5,1326.5 2437.7,1331.1 2438.8,1335.7 2439.7,1340.1 2440.5,1344.5 2441.1,1348.8 2441.6,1353.1 2442.0,1357.2 2442.2,1361.3 2442.4,1365.2 2442.5,1369.0 2442.5,1372.6 2442.5,1376.1 2442.3,1379.4 2442.1,1382.7 2441.8,1386.0 2441.5,1389.3 2441.2,1392.6 2440.8,1395.9 2440.5,1399.3 2440.0,1402.7 2439.3,1406.1 2438.4,1409.5 2437.3,1413.0 2435.9,1416.5 2434.5,1420.0 2432.8,1423.5 2431.1,1426.9 2429.2,1430.2 2427.1,1433.3 2425.0,1436.5 2422.7,1439.5 2420.2,1442.5 2417.6,1445.4 2414.8,1448.2 2411.8,1450.9 2408.6,1453.5 2405.3,1456.0 2401.8,1458.4 2398.1,1460.6 2394.2,1462.7 2390.2,1464.6 2386.0,1466.3 2381.6,1467.9 2377.0,1469.3 2372.4,1470.7 2367.7,1471.9 2363.2,1473.0 2359.0,1473.9 2354.6,1474.8 2349.7,1475.5 2344.1,1476.3 2337.3,1477.0 2328.4,1477.8 2317.4,1478.5 2305.7,1479.3 2294.4,1480.0 2284.8,1480.6 2278.0,1481.0 2277.8,1478.0 2284.6,1477.6 2294.2,1477.0 2305.5,1476.3 2317.2,1475.6 2328.1,1474.8 2337.0,1474.0 2343.7,1473.3 2349.3,1472.6 2354.1,1471.8 2358.4,1471.0 2362.6,1470.1 2367.0,1469.0 2371.6,1467.8 2376.2,1466.5 2380.6,1465.1 2384.9,1463.5 2389.0,1461.8 2392.9,1460.0 2396.6,1458.0 2400.2,1455.8 2403.5,1453.5 2406.8,1451.1 2409.8,1448.6 2412.7,1446.0 2415.4,1443.3 2418.0,1440.5 2420.3,1437.7 2422.6,1434.7 2424.6,1431.7 2426.6,1428.6 2428.4,1425.4 2430.2,1422.1 2431.7,1418.8 2433.2,1415.4 2434.4,1412.0 2435.5,1408.7 2436.4,1405.4 2435.1,1401.8 2433.2,1398.3 2431.0,1394.8 2428.6,1391.3 2427.8,1388.0 2427.7,1384.8 2427.7,1381.7 2427.5,1378.6 2427.3,1375.6 2427.0,1372.5 2426.7,1369.2 2426.2,1365.7 2425.7,1362.2 2425.1,1358.5 2424.4,1354.9 2423.6,1351.2 2422.7,1347.4 2421.6,1343.6 2420.4,1339.7 2419.1,1335.8 2417.6,1331.7 2416.0,1327.5 2414.1,1323.0 2412.0,1318.3 2409.7,1313.2 2407.1,1308.1 2404.5,1302.8 2401.7,1297.7 2398.7,1292.6 2395.8,1287.9 2392.9,1283.6 2389.8,1279.1 2386.3,1274.3 2382.2,1268.8 2377.6,1262.3 2372.2,1254.4 2366.1,1245.3 2359.5,1235.8 2352.9,1226.3 2346.4,1217.4 2340.5,1209.7 2335.1,1203.2 2329.8,1197.2 2324.5,1191.5 2319.2,1186.0 2313.7,1180.5 2308.3,1174.8 2303.2,1169.2 2298.4,1163.9 2293.9,1159.0 2289.4,1154.1 2284.7,1149.2 2279.5,1144.0 2273.9,1138.7 2268.2,1133.3 2262.2,1127.7 2255.8,1122.0 2248.9,1116.0 2241.3,1109.5 2232.9,1102.6 2224.0,1095.4 2214.5,1087.9 2204.5,1080.0 2193.8,1071.8 2182.7,1063.3 2170.7,1054.3 2157.9,1044.8 2144.6,1035.0 2130.9,1025.0 2117.3,1015.2 2104.0,1005.8 2090.9,996.6 2077.8,987.5 2064.7,978.5 2051.7,969.6 2038.6,960.9 2025.5,952.3 2012.5,943.9 1999.5,935.6 1986.5,927.5 1973.4,919.4 1960.2,911.4 1946.9,903.3 1933.4,895.3 1919.8,887.2 1906.0,879.2 1892.2,871.2 1878.5,863.4 1864.9,855.6 1851.5,848.0 1838.3,840.5 1825.1,833.1 1812.0,825.7 1798.8,818.4 1785.6,811.0 1772.9,802.6 1760.3,794.3 1747.7,786.0 1735.1,777.7 1722.5,769.5 1709.9,761.4 1697.4,753.2 1684.8,745.1 1672.2,737.1 1659.6,729.1 1647.0,721.2 1634.3,713.4 1621.3,706.3 1608.2,699.2 1595.2,692.2 1582.2,685.2 1569.3,678.4 1556.3,671.8 1543.2,665.7 1530.0,659.9 1516.8,654.2 1503.5,648.6 1490.3,643.0 1477.0,637.4 1463.6,631.9 1450.0,626.4 1436.5,620.9 1423.0,615.6 1409.9,610.3 1397.1,605.2 1384.9,600.2 1373.1,595.4 1361.6,590.7 1350.2,586.1 1338.8,581.5 1327.3,576.9 1315.5,572.2 1303.7,567.4 1291.8,562.7 1280.1,558.0 1268.7,553.6 1257.7,549.3 1247.1,545.3 1237.1,541.6 1227.3,538.1 1217.6,534.6 1207.9,531.2 1197.9,527.8 1187.8,524.3 1177.8,521.0 1167.8,517.8 1157.4,514.5 1146.6,511.1 1135.2,507.4 1122.8,503.4 1109.5,499.1 1095.7,494.7 1082.0,490.3 1068.7,486.0 1056.2,482.0 1044.1,477.9 1031.7,473.7 1019.7,469.7 1008.8,466.0 999.8,462.8 993.1,460.4" fill="#838487" opacity="0.200"/>
<polygon points="995.2,453.8 1001.9,456.0 1011.1,459.0 1022.0,462.5 1034.0,466.3 1046.5,470.3 1058.7,474.1 1071.2,478.0 1084.5,482.2 1098.3,486.4 1112.1,490.6 1125.4,494.8 1137.9,498.6 1149.4,502.2 1160.2,505.6 1170.6,508.8 1180.7,512.0 1190.8,515.3 1201.0,518.7 1211.0,522.1 1220.8,525.5 1230.6,529.0 1240.4,532.6 1250.5,536.3 1261.1,540.2 1272.2,544.4 1283.7,548.8 1295.5,553.3 1307.4,557.9 1319.3,562.6 1331.1,567.2 1342.7,571.8 1354.1,576.3 1365.5,580.9 1377.0,585.5 1388.9,590.3 1401.1,595.2 1413.9,600.3 1427.0,605.5 1440.5,610.9 1454.1,616.3 1467.7,621.7 1481.1,627.2 1494.5,632.7 1507.8,638.1 1521.2,643.7 1534.6,649.3 1547.9,655.1 1561.3,661.1 1574.6,667.3 1587.8,673.8 1601.1,680.5 1614.3,687.2 1627.5,694.0 1640.8,700.8 1654.0,707.6 1667.2,714.5 1680.4,721.3 1693.7,728.3 1706.9,735.3 1720.1,742.4 1733.3,749.5 1746.6,756.8 1759.8,764.1 1773.0,771.4 1786.2,778.8 1799.5,786.2 1812.7,793.5 1825.8,800.9 1839.0,808.3 1852.2,815.7 1865.6,823.2 1879.0,830.9 1892.6,838.7 1906.4,846.6 1920.3,854.6 1934.1,862.7 1947.9,870.8 1961.5,878.9 1975.0,887.0 1988.3,895.2 2001.5,903.3 2014.7,911.6 2027.8,919.9 2041.0,928.5 2054.3,937.2 2067.5,946.0 2080.7,955.0 2094.0,964.1 2107.2,973.3 2120.4,982.6 2133.9,992.1 2147.6,1002.0 2161.4,1012.0 2174.8,1021.9 2187.7,1031.5 2199.8,1040.6 2211.1,1049.2 2221.9,1057.5 2232.1,1065.5 2241.8,1073.2 2250.9,1080.6 2259.5,1087.7 2267.4,1094.4 2274.7,1100.7 2281.3,1106.7 2287.6,1112.5 2293.6,1118.1 2299.4,1123.8 2304.9,1129.3 2310.0,1134.5 2314.8,1139.6 2319.4,1144.7 2324.2,1150.0 2329.2,1155.6 2334.5,1161.3 2339.8,1167.0 2345.3,1172.8 2350.9,1179.1 2356.6,1185.8 2362.4,1193.2 2368.6,1201.7 2375.1,1211.1 2381.7,1221.1 2388.2,1231.0 2394.1,1240.2 2399.3,1248.4 2403.7,1255.2 2407.5,1261.2 2410.8,1266.6 2413.7,1271.8 2416.6,1276.9 2419.4,1282.4 2422.2,1288.1 2424.8,1294.0 2427.2,1299.9 2429.5,1305.6 2431.6,1311.2 2433.4,1316.5 2435.1,1321.6 2436.5,1326.5 2437.7,1331.1 2438.8,1335.7 2439.7,1340.1 2440.5,1344.5 2441.1,1348.8 2441.6,1353.1 2442.0,1357.2 2442.2,1361.3 2442.4,1365.2 2442.5,1369.0 2442.5,1372.6 2442.5,1376.1 2442.3,1379.4 2442.1,1382.7 2441.8,1386.0 2441.5,1389.3 2441.2,1392.6 2440.8,1395.9 2440.5,1399.3 2440.0,1402.7 2439.3,1406.1 2438.4,1409.5 2437.3,1413.0 2435.9,1416.5 2434.5,1420.0 2432.8,1423.5 2431.1,1426.9 2429.2,1430.2 2427.1,1433.3 2425.0,1436.5 2422.7,1439.5 2420.2,1442.5 2417.6,1445.4 2414.8,1448.2 2411.8,1450.9 2408.6,1453.5 2405.3,1456.0 2401.8,1458.4 2398.1,1460.6 2394.2,1462.7 2390.2,1464.6 2386.0,1466.3 2381.6,1467.9 2377.0,1469.3 2372.4,1470.7 2367.7,1471.9 2363.2,1473.0 2359.0,1473.9 2354.6,1474.8 2349.7,1475.5 2344.1,1476.3 2337.3,1477.0 2328.4,1477.8 2317.4,1478.5 2305.7,1479.3 2294.4,1480.0 2284.8,1480.6 2278.0,1481.0 2277.8,1478.0 2284.6,1477.6 2294.2,1477.0 2305.5,1476.3 2317.2,1475.6 2328.1,1474.8 2337.0,1474.0 2343.7,1473.3 2349.3,1472.6 2354.1,1471.8 2358.4,1471.0 2362.6,1470.1 2367.0,1469.0 2371.6,1467.8 2376.2,1466.5 2380.6,1465.1 2384.9,1463.5 2389.0,1461.8 2392.9,1460.0 2396.6,1458.0 2400.2,1455.8 2403.5,1453.5 2406.8,1451.1 2409.8,1448.6 2412.7,1446.0 2415.4,1443.3 2418.0,1440.5 2420.3,1437.7 2422.6,1434.7 2424.6,1431.7 2426.6,1428.6 2428.4,1425.4 2430.2,1422.1 2431.7,1418.8 2433.2,1415.4 2434.4,1412.0 2435.5,1408.7 2436.4,1405.4 2437.0,1402.1 2437.5,1398.9 2437.9,1395.6 2438.2,1392.3 2437.1,1388.9 2435.6,1385.4 2433.9,1382.1 2432.0,1378.9 2430.0,1375.7 2429.4,1372.5 2429.1,1369.2 2428.7,1365.7 2428.2,1362.0 2427.7,1358.3 2427.1,1354.6 2426.3,1350.9 2425.4,1347.0 2424.4,1343.1 2423.3,1339.1 2422.0,1335.0 2420.6,1330.9 2419.0,1326.5 2417.2,1322.0 2415.1,1317.1 2412.8,1312.0 2410.4,1306.7 2407.8,1301.4 2405.0,1296.1 2402.1,1291.0 2399.2,1286.1 2396.3,1281.6 2393.2,1277.1 2389.8,1272.2 2385.8,1266.5 2381.1,1260.0 2375.8,1252.0 2369.7,1243.0 2363.2,1233.4 2356.5,1223.8 2350.1,1214.8 2344.1,1207.0 2338.7,1200.3 2333.3,1194.2 2328.0,1188.4 2322.6,1182.8 2317.2,1177.3 2311.8,1171.6 2306.7,1166.0 2301.9,1160.7 2297.4,1155.7 2292.9,1150.9 2288.1,1145.9 2282.8,1140.6 2277.2,1135.2 2271.4,1129.8 2265.4,1124.2 2259.0,1118.5 2252.0,1112.4 2244.3,1105.9 2236.0,1098.9 2227.0,1091.7 2217.5,1084.1 2207.4,1076.2 2196.7,1068.0 2185.5,1059.5 2173.5,1050.5 2160.7,1041.0 2147.4,1031.1 2133.7,1021.2 2120.1,1011.4 2106.8,1001.9 2093.6,992.7 2080.5,983.6 2067.4,974.6 2054.3,965.7 2041.2,956.9 2028.1,948.3 2015.0,939.9 2002.0,931.6 1989.0,923.4 1975.9,915.3 1962.7,907.3 1949.4,899.2 1935.8,891.2 1922.2,883.1 1908.4,875.1 1894.6,867.1 1880.8,859.2 1867.2,851.5 1853.9,843.8 1840.6,836.3 1827.4,828.9 1814.3,821.6 1801.1,814.2 1787.9,806.9 1775.2,798.6 1762.5,790.4 1749.8,782.1 1737.1,774.0 1724.4,765.9 1711.8,757.9 1699.1,749.8 1686.5,741.9 1673.8,734.0 1661.1,726.2 1648.4,718.4 1635.7,710.7 1622.6,703.6 1609.6,696.5 1596.6,689.5 1583.6,682.5 1570.6,675.7 1557.6,669.1 1544.4,663.1 1531.1,657.2 1517.9,651.5 1504.6,646.0 1491.3,640.4 1478.0,634.9 1464.6,629.4 1451.0,623.9 1437.5,618.5 1424.0,613.1 1410.9,607.8 1398.1,602.7 1385.9,597.8 1374.0,593.0 1362.5,588.3 1351.1,583.7 1339.7,579.2 1328.2,574.6 1316.5,569.9 1304.6,565.2 1292.7,560.5 1280.9,555.8 1269.5,551.4 1258.4,547.1 1247.9,543.2 1237.9,539.5 1228.1,535.9 1218.4,532.5 1208.6,529.1 1198.6,525.6 1188.5,522.2 1178.5,519.0 1168.4,515.7 1158.1,512.4 1147.2,509.0 1135.8,505.4 1123.4,501.5 1110.1,497.2 1096.3,492.9 1082.6,488.5 1069.2,484.3 1056.8,480.3 1044.6,476.3 1032.2,472.2 1020.2,468.2 1009.3,464.6 1000.2,461.5 993.5,459.2" fill="#838487" opacity="0.200"/>
<polygon points="995.2,453.8 1001.9,456.0 1011.1,459.0 1022.0,462.5 1034.0,466.3 1046.5,470.3 1058.7,474.1 1071.2,478.0 1084.5,482.2 1098.3,486.4 1112.1,490.6 1125.4,494.8 1137.9,498.6 1149.4,502.2 1160.2,505.6 1170.6,508.8 1180.7,512.0 1190.8,515.3 1201.0,518.7 1211.0,522.1 1220.8,525.5 1230.6,529.0 1240.4,532.6 1250.5,536.3 1261.1,540.2 1272.2,544.4 1283.7,548.8 1295.5,553.3 1307.4,557.9 1319.3,562.6 1331.1,567.2 1342.7,571.8 1354.1,576.3 1365.5,580.9 1377.0,585.5 1388.9,590.3 1401.1,595.2 1413.9,600.3 1427.0,605.5 1440.5,610.9 1454.1,616.3 1467.7,621.7 1481.1,627.2 1494.5,632.7 1507.8,638.1 1521.2,643.7 1534.6,649.3 1547.9,655.1 1561.3,661.1 1574.6,667.3 1587.8,673.8 1601.1,680.5 1614.3,687.2 1627.5,694.0 1640.8,700.8 1654.0,707.6 1667.2,714.5 1680.4,721.3 1693.7,728.3 1706.9,735.3 1720.1,742.4 1733.3,749.5 1746.6,756.8 1759.8,764.1 1773.0,771.4 1786.2,778.8 1799.5,786.2 1812.7,793.5 1825.8,800.9 1839.0,808.3 1852.2,815.7 1865.6,823.2 1879.0,830.9 1892.6,838.7 1906.4,846.6 1920.3,854.6 1934.1,862.7 1947.9,870.8 1961.5,878.9 1975.0,887.0 1988.3,895.2 2001.5,903.3 2014.7,911.6 2027.8,919.9 2041.0,928.5 2054.3,937.2 2067.5,946.0 2080.7,955.0 2094.0,964.1 2107.2,973.3 2120.4,982.6 2133.9,992.1 2147.6,1002.0 2161.4,1012.0 2174.8,1021.9 2187.7,1031.5 2199.8,1040.6 2211.1,1049.2 2221.9,1057.5 2232.1,1065.5 2241.8,1073.2 2250.9,1080.6 2259.5,1087.7 2267.4,1094.4 2274.7,1100.7 2281.3,1106.7 2287.6,1112.5 2293.6,1118.1 2299.4,1123.8 2304.9,1129.3 2310.0,1134.5 2314.8,1139.6 2319.4,1144.7 2324.2,1150.0 2329.2,1155.6 2334.5,1161.3 2339.8,1167.0 2345.3,1172.8 2350.9,1179.1 2356.6,1185.8 2362.4,1193.2 2368.6,1201.7 2375.1,1211.1 2381.7,1221.1 2388.2,1231.0 2394.1,1240.2 2399.3,1248.4 2403.7,1255.2 2407.5,1261.2 2410.8,1266.6 2413.7,1271.8 2416.6,1276.9 2419.4,1282.4 2422.2,1288.1 2424.8,1294.0 2427.2,1299.9 2429.5,1305.6 2431.6,1311.2 2433.4,1316.5 2435.1,1321.6 2436.5,1326.5 2437.7,1331.1 2438.8,1335.7 2439.7,1340.1 2440.5,1344.5 2441.1,1348.8 2441.6,1353.1 2442.0,1357.2 2442.2,1361.3 2442.4,1365.2 2442.5,1369.0 2442.5,1372.6 2442.5,1376.1 2442.3,1379.4 2442.1,1382.7 2441.8,1386.0 2441.5,1389.3 2441.2,1392.6 2440.8,1395.9 2440.5,1399.3 2440.0,1402.7 2439.3,1406.1 2438.4,1409.5 2437.3,1413.0 2435.9,1416.5 2434.5,1420.0 2432.8,1423.5 2431.1,1426.9 2429.2,1430.2 2427.1,1433.3 2425.0,1436.5 2422.7,1439.5 2420.2,1442.5 2417.6,1445.4 2414.8,1448.2 2411.8,1450.9 2408.6,1453.5 2405.3,1456.0 2401.8,1458.4 2398.1,1460.6 2394.2,1462.7 2390.2,1464.6 2386.0,1466.3 2381.6,1467.9 2377.0,1469.3 2372.4,1470.7 2367.7,1471.9 2363.2,1473.0 2359.0,1473.9 2354.6,1474.8 2349.7,1475.5 2344.1,1476.3 2337.3,1477.0 2328.4,1477.8 2317.4,1478.5 2305.7,1479.3 2294.4,1480.0 2284.8,1480.6 2278.0,1481.0 2277.8,1478.0 2284.6,1477.6 2294.2,1477.0 2305.5,1476.3 2317.2,1475.6 2328.1,1474.8 2337.0,1474.0 2343.7,1473.3 2349.3,1472.6 2354.1,1471.8 2358.4,1471.0 2362.6,1470.1 2367.0,1469.0 2371.6,1467.8 2376.2,1466.5 2380.6,1465.1 2384.9,1463.5 2389.0,1461.8 2392.9,1460.0 2396.6,1458.0 2400.2,1455.8 2403.5,1453.5 2406.8,1451.1 2409.8,1448.6 2412.7,1446.0 2415.4,1443.3 2418.0,1440.5 2420.3,1437.7 2422.6,1434.7 2424.6,1431.7 2426.6,1428.6 2428.4,1425.4 2430.2,1422.1 2431.7,1418.8 2433.2,1415.4 2434.4,1412.0 2435.5,1408.7 2436.4,1405.4 2437.0,1402.1 2437.5,1398.9 2437.9,1395.6 2438.2,1392.3 2438.5,1389.0 2438.8,1385.7 2439.1,1382.5 2439.3,1379.3 2439.5,1376.0 2438.3,1372.6 2436.6,1369.0 2435.1,1365.4 2433.5,1361.7 2431.7,1358.0 2429.8,1354.3 2429.1,1350.5 2428.2,1346.5 2427.3,1342.5 2426.2,1338.4 2425.0,1334.3 2423.6,1330.0 2422.1,1325.6 2420.3,1321.0 2418.3,1316.0 2416.1,1310.8 2413.6,1305.4 2411.1,1300.0 2408.3,1294.6 2405.5,1289.3 2402.6,1284.3 2399.7,1279.7 2396.7,1275.0 2393.3,1270.0 2389.3,1264.3 2384.8,1257.7 2379.5,1249.7 2373.4,1240.6 2366.9,1230.9 2360.3,1221.2 2353.8,1212.2 2347.8,1204.2 2342.3,1197.3 2336.9,1191.1 2331.5,1185.3 2326.1,1179.6 2320.7,1174.0 2315.3,1168.3 2310.2,1162.7 2305.5,1157.5 2300.9,1152.5 2296.3,1147.5 2291.5,1142.5 2286.2,1137.2 2280.5,1131.8 2274.7,1126.3 2268.6,1120.7 2262.2,1114.9 2255.1,1108.7 2247.4,1102.2 2239.0,1095.2 2230.0,1088.0 2220.4,1080.4 2210.3,1072.4 2199.6,1064.2 2188.4,1055.7 2176.4,1046.7 2163.6,1037.1 2150.2,1027.3 2136.5,1017.3 2122.9,1007.5 2109.5,998.0 2096.4,988.7 2083.2,979.6 2070.1,970.6 2057.0,961.7 2043.8,952.9 2030.7,944.3 2017.6,935.8 2004.6,927.5 1991.5,919.4 1978.4,911.3 1965.2,903.2 1951.8,895.1 1938.3,887.0 1924.6,879.0 1910.8,870.9 1897.0,863.0 1883.2,855.1 1869.6,847.3 1856.2,839.7 1843.0,832.2 1829.8,824.7 1816.6,817.4 1803.5,810.0 1790.3,802.7 1777.4,794.6 1764.6,786.5 1751.9,778.4 1739.1,770.4 1726.3,762.4 1713.6,754.5 1700.8,746.7 1688.1,738.9 1675.3,731.2 1662.5,723.5 1649.7,715.9 1636.9,708.4 1623.8,701.3 1610.8,694.2 1597.7,687.2 1584.7,680.3 1571.6,673.5 1558.6,666.9 1545.3,660.9 1532.1,655.1 1518.8,649.4 1505.5,643.9 1492.1,638.4 1478.8,632.9 1465.4,627.4 1451.8,621.9 1438.2,616.5 1424.8,611.1 1411.6,605.9 1398.9,600.8 1386.6,595.9 1374.8,591.1 1363.3,586.4 1351.9,581.8 1340.5,577.3 1328.9,572.7 1317.2,568.0 1305.3,563.3 1293.4,558.7 1281.6,554.1 1270.1,549.7 1259.1,545.4 1248.6,541.5 1238.5,537.8 1228.7,534.3 1219.0,530.8 1209.2,527.4 1199.2,523.9 1189.1,520.6 1179.1,517.3 1168.9,514.1 1158.6,510.8 1147.7,507.4 1136.3,503.8 1123.9,499.9 1110.5,495.7 1096.8,491.4 1083.0,487.1 1069.7,482.9 1057.2,478.9 1045.0,475.0 1032.6,470.9 1020.6,467.0 1009.7,463.4 1000.5,460.4 993.8,458.2" fill="#838487" opacity="0.200"/>
<polygon points="995.2,453.8 1001.9,456.0 1011.1,459.0 1022.0,462.5 1034.0,466.3 1046.5,470.3 1058.7,474.1 1071.2,478.0 1084.5,482.2 1098.3,486.4 1112.1,490.6 1125.4,494.8 1137.9,498.6 1149.4,502.2 1160.2,505.6 1170.6,508.8 1180.7,512.0 1190.8,515.3 1201.0,518.7 1211.0,522.1 1220.8,525.5 1230.6,529.0 1240.4,532.6 1250.5,536.3 1261.1,540.2 1272.2,544.4 1283.7,548.8 1295.5,553.3 1307.4,557.9 1319.3,562.6 1331.1,567.2 1342.7,571.8 1354.1,576.3 1365.5,580.9 1377.0,585.5 1388.9,590.3 1401.1,595.2 1413.9,600.3 1427.0,605.5 1440.5,610.9 1454.1,616.3 1467.7,621.7 1481.1,627.2 1494.5,632.7 1507.8,638.1 1521.2,643.7 1534.6,649.3 1547.9,655.1 1561.3,661.1 1574.6,667.3 1587.8,673.8 1601.1,680.5 1614.3,687.2 1627.5,694.0 1640.8,700.8 1654.0,707.6 1667.2,714.5 1680.4,721.3 1693.7,728.3 1706.9,735.3 1720.1,742.4 1733.3,749.5 1746.6,756.8 1759.8,764.1 1773.0,771.4 1786.2,778.8 1799.5,786.2 1812.7,793.5 1825.8,800.9 1839.0,808.3 1852.2,815.7 1865.6,823.2 1879.0,830.9 1892.6,838.7 1906.4,846.6 1920.3,854.6 1934.1,862.7 1947.9,870.8 1961.5,878.9 1975.0,887.0 1988.3,895.2 2001.5,903.3 2014.7,911.6 2027.8,919.9 2041.0,928.5 2054.3,937.2 2067.5,946.0 2080.7,955.0 2094.0,964.1 2107.2,973.3 2120.4,982.6 2133.9,992.1 2147.6,1002.0 2161.4,1012.0 2174.8,1021.9 2187.7,1031.5 2199.8,1040.6 2211.1,1049.2 2221.9,1057.5 2232.1,1065.5 2241.8,1073.2 2250.9,1080.6 2259.5,1087.7 2267.4,1094.4 2274.7,1100.7 2281.3,1106.7 2287.6,1112.5 2293.6,1118.1 2299.4,1123.8 2304.9,1129.3 2310.0,1134.5 2314.8,1139.6 2319.4,1144.7 2324.2,1150.0 2329.2,1155.6 2334.5,1161.3 2339.8,1167.0 2345.3,1172.8 2350.9,1179.1 2356.6,1185.8 2362.4,1193.2 2368.6,1201.7 2375.1,1211.1 2381.7,1221.1 2388.2,1231.0 2394.1,1240.2 2399.3,1248.4 2403.7,1255.2 2407.5,1261.2 2410.8,1266.6 2413.7,1271.8 2416.6,1276.9 2419.4,1282.4 2422.2,1288.1 2424.8,1294.0 2427.2,1299.9 2429.5,1305.6 2431.6,1311.2 2433.4,1316.5 2435.1,1321.6 2436.5,1326.5 2437.7,1331.1 2438.8,1335.7 2439.7,1340.1 2440.5,1344.5 2441.1,1348.8 2441.6,1353.1 2442.0,1357.2 2442.2,1361.3 2442.4,1365.2 2442.5,1369.0 2442.5,1372.6 2442.5,1376.1 2442.3,1379.4 2442.1,1382.7 2441.8,1386.0 2441.5,1389.3 2441.2,1392.6 2440.8,1395.9 2440.5,1399.3 2440.0,1402.7 2439.3,1406.1 2438.4,1409.5 2437.3,1413.0 2435.9,1416.5 2434.5,1420.0 2432.8,1423.5 2431.1,1426.9 2429.2,1430.2 2427.1,1433.3 2425.0,1436.5 2422.7,1439.5 2420.2,1442.5 2417.6,1445.4 2414.8,1448.2 2411.8,1450.9 2408.6,1453.5 2405.3,1456.0 2401.8,1458.4 2398.1,1460.6 2394.2,1462.7 2390.2,1464.6 2386.0,1466.3 2381.6,1467.9 2377.0,1469.3 2372.4,1470.7 2367.7,1471.9 2363.2,1473.0 2359.0,1473.9 2354.6,1474.8 2349.7,1475.5 2344.1,1476.3 2337.3,1477.0 2328.4,1477.8 2317.4,1478.5 2305.7,1479.3 2294.4,1480.0 2284.8,1480.6 2278.0,1481.0 2277.8,1478.0 2284.6,1477.6 2294.2,1477.0 2305.5,1476.3 2317.2,1475.6 2328.1,1474.8 2337.0,1474.0 2343.7,1473.3 2349.3,1472.6 2354.1,1471.8 2358.4,1471.0 2362.6,1470.1 2367.0,1469.0 2371.6,1467.8 2376.2,1466.5 2380.6,1465.1 2384.9,1463.5 2389.0,1461.8 2392.9,1460.0 2396.6,1458.0 2400.2,1455.8 2403.5,1453.5 2406.8,1451.1 2409.8,1448.6 2412.7,1446.0 2415.4,1443.3 2418.0,1440.5 2420.3,1437.7 2422.6,1434.7 2424.6,1431.7 2426.6,1428.6 2428.4,1425.4 2430.2,1422.1 2431.7,1418.8 2433.2,1415.4 2434.4,1412.0 2435.5,1408.7 2436.4,1405.4 2437.0,1402.1 2437.5,1398.9 2437.9,1395.6 2438.2,1392.3 2438.5,1389.0 2438.8,1385.7 2439.1,1382.5 2439.3,1379.3 2439.5,1376.0 2439.5,1372.6 2439.5,1369.0 2439.4,1365.3 2439.2,1361.4 2439.0,1357.5 2438.6,1353.4 2437.2,1349.4 2435.5,1345.3 2433.9,1341.2 2432.2,1337.1 2430.3,1333.0 2428.3,1328.7 2426.0,1324.4 2423.7,1319.8 2421.8,1314.7 2419.6,1309.4 2417.3,1303.9 2414.7,1298.4 2412.0,1292.8 2409.2,1287.4 2406.4,1282.3 2403.5,1277.5 2400.5,1272.7 2397.1,1267.6 2393.3,1261.8 2388.8,1255.1 2383.5,1247.1 2377.5,1237.9 2371.0,1228.2 2364.4,1218.4 2357.9,1209.2 2351.9,1201.1 2346.3,1194.1 2340.8,1187.8 2335.3,1181.8 2329.9,1176.1 2324.5,1170.4 2319.2,1164.8 2314.1,1159.2 2309.4,1153.9 2304.8,1148.9 2300.2,1143.9 2295.2,1138.8 2289.9,1133.5 2284.2,1127.9 2278.3,1122.4 2272.2,1116.7 2265.7,1110.9 2258.6,1104.7 2250.8,1098.1 2242.3,1091.1 2233.3,1083.8 2223.7,1076.2 2213.6,1068.3 2202.9,1060.0 2191.6,1051.5 2179.6,1042.4 2166.7,1032.9 2153.3,1023.0 2139.7,1013.0 2126.0,1003.2 2112.6,993.6 2099.4,984.4 2086.3,975.3 2073.1,966.2 2059.9,957.3 2046.8,948.5 2033.6,939.9 2020.5,931.4 2007.4,923.1 1994.3,914.9 1981.2,906.7 1967.9,898.7 1954.5,890.6 1941.0,882.5 1927.3,874.4 1913.4,866.4 1899.6,858.4 1885.8,850.5 1872.3,842.7 1858.8,835.1 1845.6,827.5 1832.4,820.1 1819.2,812.8 1806.0,805.4 1792.8,798.1 1779.9,790.1 1767.0,782.2 1754.1,774.4 1741.2,766.5 1728.3,758.8 1715.4,751.1 1702.5,743.5 1689.7,735.9 1676.8,728.4 1663.8,721.0 1650.9,713.6 1638.0,706.3 1624.9,699.3 1611.8,692.3 1598.7,685.3 1585.6,678.4 1572.5,671.7 1559.4,665.2 1546.1,659.2 1532.8,653.4 1519.5,647.8 1506.1,642.2 1492.8,636.8 1479.5,631.3 1466.0,625.8 1452.5,620.3 1438.9,614.9 1425.4,609.6 1412.3,604.3 1399.5,599.2 1387.3,594.3 1375.4,589.6 1363.9,584.9 1352.5,580.3 1341.1,575.8 1329.5,571.2 1317.8,566.6 1305.8,561.9 1293.9,557.2 1282.2,552.7 1270.7,548.3 1259.6,544.1 1249.1,540.2 1239.0,536.5 1229.2,532.9 1219.5,529.4 1209.7,526.0 1199.6,522.6 1189.5,519.2 1179.5,516.0 1169.4,512.7 1159.0,509.5 1148.1,506.1 1136.7,502.5 1124.2,498.6 1110.9,494.5 1097.1,490.2 1083.4,485.9 1070.0,481.8 1057.5,477.9 1045.3,474.0 1032.9,470.0 1020.9,466.1 1010.0,462.5 1000.8,459.5 994.1,457.3" fill="#838487" opacity="0.200"/>
<polygon points="995.2,453.8 1001.9,456.0 1011.1,459.0 1022.0,462.5 1034.0,466.3 1046.5,470.3 1058.7,474.1 1071.2,478.0 1084.5,482.2 1098.3,486.4 1112.1,490.6 1125.4,494.8 1137.9,498.6 1149.4,502.2 1160.2,505.6 1170.6,508.8 1180.7,512.0 1190.8,515.3 1201.0,518.7 1211.0,522.1 1220.8,525.5 1230.6,529.0 1240.4,532.6 1250.5,536.3 1261.1,540.2 1272.2,544.4 1283.7,548.8 1295.5,553.3 1307.4,557.9 1319.3,562.6 1331.1,567.2 1342.7,571.8 1354.1,576.3 1365.5,580.9 1377.0,585.5 1388.9,590.3 1401.1,595.2 1413.9,600.3 1427.0,605.5 1440.5,610.9 1454.1,616.3 1467.7,621.7 1481.1,627.2 1494.5,632.7 1507.8,638.1 1521.2,643.7 1534.6,649.3 1547.9,655.1 1561.3,661.1 1574.6,667.3 1587.8,673.8 1601.1,680.5 1614.3,687.2 1627.5,694.0 1640.8,700.8 1654.0,707.6 1667.2,714.5 1680.4,721.3 1693.7,728.3 1706.9,735.3 1720.1,742.4 1733.3,749.5 1746.6,756.8 1759.8,764.1 1773.0,771.4 1786.2,778.8 1799.5,786.2 1812.7,793.5 1825.8,800.9 1839.0,808.3 1852.2,815.7 1865.6,823.2 1879.0,830.9 1892.6,838.7 1906.4,846.6 1920.3,854.6 1934.1,862.7 1947.9,870.8 1961.5,878.9 1975.0,887.0 1988.3,895.2 2001.5,903.3 2014.7,911.6 2027.8,919.9 2041.0,928.5 2054.3,937.2 2067.5,946.0 2080.7,955.0 2094.0,964.1 2107.2,973.3 2120.4,982.6 2133.9,992.1 2147.6,1002.0 2161.4,1012.0 2174.8,1021.9 2187.7,1031.5 2199.8,1040.6 2211.1,1049.2 2221.9,1057.5 2232.1,1065.5 2241.8,1073.2 2250.9,1080.6 2259.5,1087.7 2267.4,1094.4 2274.7,1100.7 2281.3,1106.7 2287.6,1112.5 2293.6,1118.1 2299.4,1123.8 2304.9,1129.3 2310.0,1134.5 2314.8,1139.6 2319.4,1144.7 2324.2,1150.0 2329.2,1155.6 2334.5,1161.3 2339.8,1167.0 2345.3,1172.8 2350.9,1179.1 2356.6,1185.8 2362.4,1193.2 2368.6,1201.7 2375.1,1211.1 2381.7,1221.1 2388.2,1231.0 2394.1,1240.2 2399.3,1248.4 2403.7,1255.2 2407.5,1261.2 2410.8,1266.6 2413.7,1271.8 2416.6,1276.9 2419.4,1282.4 2422.2,1288.1 2424.8,1294.0 2427.2,1299.9 2429.5,1305.6 2431.6,1311.2 2433.4,1316.5 2435.1,1321.6 2436.5,1326.5 2437.7,1331.1 2438.8,1335.7 2439.7,1340.1 2440.5,1344.5 2441.1,1348.8 2441.6,1353.1 2442.0,1357.2 2442.2,1361.3 2442.4,1365.2 2442.5,1369.0 2442.5,1372.6 2442.5,1376.1 2442.3,1379.4 2442.1,1382.7 2441.8,1386.0 2441.5,1389.3 2441.2,1392.6 2440.8,1395.9 2440.5,1399.3 2440.0,1402.7 2439.3,1406.1 2438.4,1409.5 2437.3,1413.0 2435.9,1416.5 2434.5,1420.0 2432.8,1423.5 2431.1,1426.9 2429.2,1430.2 2427.1,1433.3 2425.0,1436.5 2422.7,1439.5 2420.2,1442.5 2417.6,1445.4 2414.8,1448.2 2411.8,1450.9 2408.6,1453.5 2405.3,1456.0 2401.8,1458.4 2398.1,1460.6 2394.2,1462.7 2390.2,1464.6 2386.0,1466.3 2381.6,1467.9 2377.0,1469.3 2372.4,1470.7 2367.7,1471.9 2363.2,1473.0 2359.0,1473.9 2354.6,1474.8 2349.7,1475.5 2344.1,1476.3 2337.3,1477.0 2328.4,1477.8 2317.4,1478.5 2305.7,1479.3 2294.4,1480.0 2284.8,1480.6 2278.0,1481.0 2277.8,1478.0 2284.6,1477.6 2294.2,1477.0 2305.5,1476.3 2317.2,1475.6 2328.1,1474.8 2337.0,1474.0 2343.7,1473.3 2349.3,1472.6 2354.1,1471.8 2358.4,1471.0 2362.6,1470.1 2367.0,1469.0 2371.6,1467.8 2376.2,1466.5 2380.6,1465.1 2384.9,1463.5 2389.0,1461.8 2392.9,1460.0 2396.6,1458.0 2400.2,1455.8 2403.5,1453.5 2406.8,1451.1 2409.8,1448.6 2412.7,1446.0 2415.4,1443.3 2418.0,1440.5 2420.3,1437.7 2422.6,1434.7 2424.6,1431.7 2426.6,1428.6 2428.4,1425.4 2430.2,1422.1 2431.7,1418.8 2433.2,1415.4 2434.4,1412.0 2435.5,1408.7 2436.4,1405.4 2437.0,1402.1 2437.5,1398.9 2437.9,1395.6 2438.2,1392.3 2438.5,1389.0 2438.8,1385.7 2439.1,1382.5 2439.3,1379.3 2439.5,1376.0 2439.5,1372.6 2439.5,1369.0 2439.4,1365.3 2439.2,1361.4 2439.0,1357.5 2438.6,1353.4 2438.2,1349.2 2437.5,1345.0 2436.7,1340.7 2435.8,1336.3 2434.8,1331.9 2433.6,1327.3 2432.2,1322.5 2430.6,1317.5 2428.8,1312.2 2426.7,1306.7 2424.5,1301.0 2422.0,1295.2 2419.4,1289.4 2416.7,1283.7 2413.9,1278.3 2411.1,1273.2 2408.2,1268.2 2404.9,1262.8 2401.2,1256.8 2396.8,1250.0 2391.6,1241.9 2385.6,1232.6 2379.2,1222.7 2372.6,1212.8 2366.1,1203.4 2360.0,1195.0 2354.2,1187.7 2348.6,1181.0 2343.1,1174.8 2337.6,1169.0 2332.3,1163.3 2327.0,1157.6 2322.0,1152.0 2317.2,1146.8 2312.6,1141.7 2307.8,1136.6 2302.8,1131.4 2297.3,1125.9 2291.5,1120.3 2285.5,1114.7 2279.3,1108.9 2272.7,1102.9 2265.5,1096.7 2257.6,1090.0 2249.0,1082.9 2239.9,1075.6 2230.3,1067.9 2220.1,1059.9 2209.3,1051.6 2198.0,1043.0 2185.9,1033.9 2173.0,1024.3 2159.6,1014.4 2145.9,1004.4 2132.1,994.6 2118.7,985.0 2105.5,975.7 2092.3,966.5 2079.1,957.5 2065.8,948.5 2052.6,939.7 2039.4,931.0 2026.2,922.5 2013.1,914.1 1999.9,905.9 1986.7,897.7 1973.4,889.6 1960.0,881.5 1946.4,873.4 1932.6,865.3 1918.8,857.2 1904.9,849.2 1891.1,841.3 1877.5,833.5 1864.1,825.8 1850.8,818.3 1837.5,810.9 1824.4,803.5 1811.2,796.2 1798.0,788.8 1784.8,781.4 1771.6,774.0 1758.3,766.7 1745.1,759.4 1731.9,752.2 1718.7,745.0 1705.5,737.9 1692.3,730.9 1679.1,724.0 1665.8,717.1 1652.6,710.3 1639.4,703.5 1626.2,696.7 1613.0,689.9 1599.7,683.2 1586.5,676.5 1573.3,670.1 1560.0,663.8 1546.7,657.8 1533.4,652.0 1520.0,646.4 1506.7,640.9 1493.3,635.5 1480.0,630.0 1466.6,624.5 1453.0,619.1 1439.4,613.6 1425.9,608.3 1412.8,603.1 1400.0,598.0 1387.8,593.1 1375.9,588.3 1364.4,583.7 1353.0,579.1 1341.6,574.6 1330.0,570.0 1318.2,565.4 1306.3,560.7 1294.4,556.1 1282.6,551.6 1271.1,547.2 1260.0,543.0 1249.5,539.1 1239.4,535.4 1229.6,531.8 1219.9,528.4 1210.1,524.9 1200.0,521.5 1189.9,518.1 1179.8,514.9 1169.7,511.7 1159.3,508.4 1148.5,505.1 1137.0,501.5 1124.6,497.6 1111.2,493.5 1097.4,489.3 1083.6,485.0 1070.3,480.9 1057.8,477.0 1045.6,473.1 1033.1,469.2 1021.1,465.3 1010.2,461.8 1001.0,458.9 994.3,456.7" fill="#838487" opacity="0.200"/>
</g>
<polygon points="1667.9,808.3 1679.6,817.4 1691.7,826.1 1703.7,834.7 1715.8,843.5 1728.0,852.4 1740.7,860.5 1753.9,867.9 1767.1,875.2 1780.2,882.5 1793.2,889.9 1806.3,897.2 1819.4,904.6 1832.6,912.2 1846.1,919.9 1859.7,927.7 1873.3,935.5 1886.8,943.4 1900.2,951.3 1913.4,959.1 1926.4,967.0 1939.3,974.9 1952.0,982.8 1964.7,990.7 1977.3,998.7 1989.9,1006.9 2002.6,1015.2 2015.3,1023.7 2028.1,1032.3 2040.8,1041.1 2053.6,1050.0 2066.4,1058.9 2079.4,1068.2 2092.8,1077.8 2106.1,1087.5 2119.2,1097.1 2131.7,1106.5 2143.4,1115.2 2154.2,1123.5 2164.5,1131.4 2174.2,1139.0 2183.3,1146.2 2191.7,1153.0 2199.5,1159.5 2206.5,1165.4 2212.8,1170.8 2218.4,1175.9 2223.8,1180.9 2228.9,1185.7 2233.8,1190.5 2238.3,1195.0 2242.3,1199.1 2246.2,1203.2 2250.3,1207.8 2255.0,1213.0 2260.5,1219.1 2266.8,1224.9 2272.6,1230.1 2277.9,1234.8 2282.6,1239.1 2286.9,1243.2 2291.4,1247.9 2297.0,1253.8 2303.2,1261.1 2310.1,1269.4 2317.0,1278.1 2323.6,1286.5 2329.8,1294.0 2335.7,1299.7 2340.8,1304.2 2345.1,1307.6 2348.8,1310.4 2352.1,1312.9 2355.3,1315.5 2358.7,1318.6 2362.1,1322.1 2365.4,1325.7 2368.6,1329.5 2371.7,1333.2 2374.5,1336.6 2377.0,1339.6 2377.9,1339.0 2376.5,1335.4 2374.6,1331.4 2372.5,1327.0 2370.2,1322.5 2367.9,1317.9 2365.5,1313.5 2363.0,1309.0 2360.1,1305.1 2357.4,1301.6 2354.7,1298.0 2351.6,1293.9 2347.8,1288.8 2343.4,1282.7 2338.0,1275.4 2331.8,1266.8 2325.1,1257.8 2318.4,1248.9 2312.0,1240.8 2306.5,1234.3 2301.8,1228.9 2297.1,1224.1 2292.3,1219.4 2287.2,1214.4 2281.7,1209.1 2276.3,1203.7 2271.3,1198.2 2266.6,1193.0 2262.3,1188.3 2258.3,1183.9 2254.0,1179.5 2249.2,1174.8 2244.1,1169.8 2238.8,1164.8 2233.2,1159.7 2227.3,1154.4 2220.8,1148.7 2213.6,1142.6 2205.6,1136.0 2197.0,1129.0 2187.8,1121.7 2178.0,1114.0 2167.6,1106.0 2156.7,1097.7 2144.9,1088.8 2132.3,1079.5 2119.1,1069.8 2105.7,1060.0 2092.2,1050.3 2079.1,1041.0 2066.2,1031.9 2053.3,1023.0 2040.4,1014.1 2027.6,1005.4 2014.8,996.9 2002.0,988.4 1989.2,980.2 1976.4,972.1 1963.7,964.1 1950.8,956.1 1937.8,948.2 1924.7,940.3 1911.4,932.3 1897.9,924.4 1884.3,916.5 1870.7,908.6 1857.0,900.8 1843.5,893.1 1830.2,885.5 1817.1,878.0 1804.0,870.7 1790.9,863.3 1777.8,856.0 1764.6,848.7 1751.4,841.3 1737.8,834.8 1723.8,829.1 1709.9,823.5 1696.1,818.0 1682.3,812.7 1668.9,806.8" fill="#e6e7e9" filter="url(#b8)" opacity=".5"/>
</g>
<g clip-path="url(#cs)" mask="url(#mfade)"><polygon points="994.3,456.7 1001.0,458.9 1010.2,461.8 1021.1,465.3 1033.1,469.2 1045.6,473.1 1057.8,477.0 1070.3,480.9 1083.6,485.0 1097.4,489.3 1111.2,493.5 1124.6,497.6 1137.0,501.5 1148.5,505.1 1159.3,508.4 1169.7,511.7 1179.8,514.9 1189.9,518.1 1200.0,521.5 1210.1,524.9 1219.9,528.4 1229.6,531.8 1239.4,535.4 1249.5,539.1 1260.0,543.0 1271.1,547.2 1282.6,551.6 1294.4,556.1 1306.3,560.7 1318.2,565.4 1330.0,570.0 1341.6,574.6 1353.0,579.1 1364.4,583.7 1375.9,588.3 1387.8,593.1 1400.0,598.0 1412.8,603.1 1425.9,608.3 1439.4,613.6 1453.0,619.1 1466.6,624.5 1480.0,630.0 1493.3,635.5 1506.7,640.9 1520.0,646.4 1533.4,652.0 1546.7,657.8 1560.0,663.8 1573.3,670.1 1586.5,676.5 1599.7,683.2 1613.0,689.9 1626.2,696.7 1639.4,703.5 1652.6,710.3 1665.8,717.1 1679.1,724.0 1692.3,730.9 1705.5,737.9 1718.7,745.0 1731.9,752.2 1745.1,759.4 1758.3,766.7 1771.6,774.0 1784.8,781.4 1798.0,788.8 1811.2,796.2 1824.4,803.5 1837.5,810.9 1850.8,818.3 1864.1,825.8 1877.5,833.5 1891.1,841.3 1904.9,849.2 1900.0,915.0 1850.0,893.0 1800.0,874.0 1758.0,858.0 1718.7,842.0 1716.6,840.7 1713.6,839.0 1710.1,837.0 1706.3,834.6 1702.5,831.7 1699.0,828.5 1696.1,824.7 1693.8,820.2 1691.5,815.4 1688.6,810.3 1684.6,805.4 1679.0,800.7 1671.4,796.2 1662.1,791.8 1651.7,787.4 1640.8,783.1 1629.9,778.9 1619.5,775.0 1609.6,771.5 1599.9,768.6 1590.1,765.7 1580.2,762.8 1570.2,759.3 1560.0,755.0 1549.8,749.8 1539.9,743.9 1529.7,737.6 1519.1,730.9 1507.6,724.2 1495.0,717.5 1480.4,710.6 1464.1,703.3 1446.9,695.9 1429.8,688.7 1413.9,682.0 1400.0,676.0 1388.1,670.8 1377.3,666.3 1367.6,662.2 1359.0,658.5 1351.5,655.1 1345.0,652.0 1340.1,649.3 1336.9,647.1 1334.8,645.2 1333.1,643.6 1331.0,641.9 1328.0,640.0 1324.1,638.1 1319.9,636.2 1315.4,634.3 1310.6,632.4 1305.5,630.3 1300.0,628.0 1294.1,625.4 1287.7,622.6 1281.0,619.6 1274.0,616.6 1267.0,613.5 1260.0,610.5 1253.4,607.7 1247.1,605.0 1240.7,602.3 1233.8,599.5 1225.9,596.3 1216.5,592.6 1205.3,588.4 1192.7,583.7 1179.0,578.6 1164.8,573.4 1150.6,568.1 1137.0,562.9 1123.6,557.8 1109.9,552.6 1096.2,547.3 1082.8,542.0 1069.9,536.6 1057.8,531.0 1045.9,524.9 1034.0,518.1 1022.6,511.2 1012.3,504.8 1003.7,499.3 997.3,495.4" fill="#7b7c7f" opacity=".13"/>
<path d="M1321 566 C1336 586 1342 618 1345 652 L1400 676 L1495 717.5 L1560 755 L1619.5 775 L1679 800.7 L1718.7 842 L1900 915 L1905 840 L1480 628 Z" fill="#7b7c7f" opacity=".16" filter="url(#b3)"/></g>
<path d="M1300.0 629.0 C1304.7 631.0 1320.2 636.8 1328.0 641.0 C1335.8 645.2 1338.3 649.3 1347.0 654.0 C1355.7 658.7 1374.5 666.5 1380.0 669.0" fill="none" stroke="#f4f5f7" stroke-width="2" opacity=".5" filter="url(#b1)"/>
<path d="M1679.0 802.0 C1682.3 806.5 1692.4 822.2 1699.0 829.0 C1705.6 835.8 1708.9 837.8 1718.7 843.0 C1728.5 848.2 1744.5 853.7 1758.0 860.0 C1771.5 866.3 1793.0 877.5 1800.0 881.0" fill="none" stroke="#f6f7f9" stroke-width="2.6" opacity=".5" filter="url(#b1)"/>
<g clip-path="url(#cs)"><polygon points="419.3,440.0 699.0,440.0 699.0,549.0 627.6,533.3 528.4,519.4 419.0,510.6" fill="url(#gtl)"/></g>
<g clip-path="url(#cs)"><polygon points="372.0,480.0 372.0,525.5 415.6,523.5 418.6,510.6 419.6,465.0" fill="#c0c1c3"/></g>
<g clip-path="url(#cs)"><polygon points="372.0,494.7 372.0,525.5 359.0,549.3 353.2,560.0 337.2,589.8 318.9,619.5 299.0,653.0 283.0,681.0 267.0,695.0 259.0,710.8 255.4,738.6 247.5,766.0 239.5,788.0 231.6,814.0 219.7,837.8 211.7,860.0 205.0,872.0 197.9,891.6 150.0,900.0 150.0,480.0 372.0,480.0" fill="url(#gdl)"/></g>
<g clip-path="url(#cs)"><polygon points="718.0,430.0 950.6,430.0 951.6,484.5 859.4,503.3 780.0,525.0 718.0,549.0" fill="url(#gtr)"/>
<polygon points="950.6,430.0 1010.0,430.0 997.3,495.4 954.6,499.4 951.6,484.5" fill="#c4c5c7"/></g>
<g clip-path="url(#cs)"><path d="M421.5 472.4 C431.2 471.5 465.5 468.1 480.0 467.0 C494.5 465.9 487.3 466.2 508.6 465.8 C529.9 465.4 576.1 464.8 607.8 464.8 C639.5 464.8 683.8 465.6 699.0 465.8" fill="none" stroke="#9c9d9f" stroke-width="3.2" opacity=".8"/></g>
<rect x="699" y="465.3" width="19" height="84" fill="url(#gst)"/>
<g clip-path="url(#cs)">
<polygon points="413.1,520.4 414.9,523.1 417.4,526.7 420.3,531.0 423.5,535.7 427.0,540.8 430.6,546.1 434.3,551.5 437.9,556.7 441.3,561.7 444.5,566.2 447.5,570.3 450.5,574.4 453.4,578.3 456.3,582.1 459.1,585.9 462.0,589.6 464.8,593.3 467.6,597.1 470.5,600.9 473.4,604.8 476.2,608.7 479.1,612.6 481.9,616.4 484.7,620.3 487.5,624.2 490.4,628.2 493.3,632.3 496.4,636.6 499.6,641.1 502.9,645.8 506.2,650.8 509.6,655.9 513.1,661.2 516.6,666.7 520.3,672.4 524.1,678.3 528.1,684.2 532.4,690.4 536.9,696.6 541.7,702.9 546.9,709.4 552.5,716.1 558.3,723.0 564.3,730.0 570.5,737.1 576.9,744.2 583.2,751.3 589.5,758.3 595.8,765.1 601.8,771.8 607.9,778.4 613.9,785.0 620.0,791.5 626.2,798.0 632.2,804.4 638.3,810.7 644.3,817.0 650.2,823.1 656.1,829.1 661.8,834.9 667.4,840.6 672.9,846.2 678.3,851.6 683.7,856.9 688.9,862.1 694.2,867.2 699.4,872.3 704.7,877.3 709.9,882.4 715.3,887.4 720.6,892.3 726.0,897.1 731.3,901.8 736.7,906.4 742.0,911.0 747.3,915.6 752.6,920.2 757.9,924.9 763.2,929.8 768.5,934.8 773.8,939.9 779.1,945.2 784.4,950.7 789.8,956.2 795.1,961.7 800.5,967.4 805.8,973.0 811.1,978.6 816.5,984.2 821.8,989.8 827.2,995.3 832.5,1000.8 837.9,1006.4 843.2,1011.9 848.6,1017.5 853.9,1023.0 859.3,1028.5 864.6,1034.0 870.0,1039.5 875.3,1044.9 880.8,1050.4 886.6,1056.1 892.5,1062.0 898.4,1067.8 904.3,1073.6 909.9,1079.1 915.3,1084.4 920.3,1089.2 924.7,1093.5 928.6,1097.2 931.8,1100.3 934.4,1102.9 936.7,1105.0 938.5,1106.7 940.0,1108.0 941.3,1109.1 942.3,1110.0 943.2,1110.8 944.0,1111.5 944.8,1112.2 945.2,1111.8 944.4,1111.1 943.6,1110.3 942.8,1109.5 941.8,1108.5 940.6,1107.4 939.1,1106.0 937.4,1104.2 935.2,1102.1 932.6,1099.5 929.4,1096.4 925.7,1092.6 921.3,1088.2 916.4,1083.2 911.1,1077.9 905.6,1072.3 899.8,1066.4 894.0,1060.5 888.2,1054.6 882.5,1048.7 877.1,1043.1 871.9,1037.6 866.6,1032.1 861.4,1026.5 856.2,1020.9 850.9,1015.3 845.7,1009.6 840.5,1003.9 835.2,998.3 830.0,992.6 824.8,987.0 819.5,981.4 814.3,975.7 809.1,970.0 803.8,964.2 798.6,958.5 793.3,952.8 788.1,947.2 782.8,941.6 777.6,936.2 772.3,930.8 767.0,925.7 761.7,920.7 756.5,915.9 751.2,911.1 745.9,906.5 740.7,901.8 735.4,897.1 730.2,892.4 725.0,887.6 719.7,882.6 714.5,877.6 709.3,872.5 704.2,867.5 699.0,862.3 693.9,857.1 688.7,851.9 683.4,846.5 678.1,841.0 672.7,835.4 667.2,829.7 661.5,823.8 655.8,817.7 649.9,811.6 644.0,805.3 638.1,798.9 632.1,792.5 626.1,786.0 620.1,779.4 614.1,772.8 608.2,766.2 602.2,759.4 596.0,752.5 589.8,745.4 583.5,738.3 577.3,731.1 571.2,724.0 565.3,717.0 559.6,710.2 554.3,703.5 549.3,697.1 544.6,690.9 540.2,684.8 536.1,678.8 532.2,672.9 528.5,667.1 524.9,661.5 521.4,655.9 517.9,650.5 514.5,645.3 511.1,640.2 507.8,635.4 504.7,630.8 501.6,626.4 498.7,622.3 495.9,618.2 493.0,614.3 490.3,610.4 487.5,606.5 484.7,602.6 481.8,598.6 479.0,594.6 476.1,590.7 473.3,586.9 470.5,583.2 467.7,579.4 464.9,575.6 462.1,571.8 459.3,567.9 456.4,563.9 453.5,559.8 450.3,555.4 446.9,550.4 443.3,545.2 439.7,539.9 436.1,534.6 432.6,529.5 429.3,524.8 426.5,520.5 424.0,517.0 422.1,514.2" fill="#b9babc" opacity=".8" filter="url(#b1)"/>
<polygon points="276.8,690.6 279.0,693.2 281.9,696.6 285.2,700.6 289.0,705.0 293.1,709.8 297.4,714.9 301.8,720.0 306.2,725.1 310.4,730.0 314.4,734.6 318.3,739.0 322.3,743.3 326.2,747.5 330.2,751.8 334.1,756.0 338.1,760.3 342.1,764.6 346.1,768.9 350.1,773.4 354.1,777.9 358.1,782.5 362.0,787.2 366.0,792.0 370.0,796.9 374.0,801.8 378.1,806.8 382.3,811.9 386.7,817.1 391.2,822.4 395.9,827.7 400.8,833.0 405.9,838.5 411.1,844.1 416.5,849.8 422.0,855.4 427.5,861.1 433.0,866.8 438.6,872.5 444.0,878.0 449.4,883.5 454.8,888.9 460.1,894.2 465.5,899.5 470.8,904.8 476.1,910.0 481.5,915.2 486.8,920.4 492.2,925.6 497.5,930.7 502.8,935.8 508.2,940.9 513.5,946.0 518.9,951.0 524.2,956.0 529.6,961.0 534.9,966.0 540.3,970.9 545.6,975.8 551.0,980.7 556.3,985.6 561.7,990.4 567.1,995.2 572.4,999.9 577.8,1004.7 583.1,1009.4 588.5,1014.1 593.9,1018.8 599.2,1023.4 604.6,1028.0 610.0,1032.6 615.5,1037.2 621.2,1041.9 627.0,1046.7 632.8,1051.5 638.6,1056.2 644.2,1060.8 649.6,1065.2 654.7,1069.3 659.4,1073.2 663.7,1076.6 667.5,1079.8 671.0,1082.8 674.3,1085.5 677.3,1088.0 680.0,1090.3 682.4,1092.4 684.6,1094.2 686.5,1095.8 688.2,1097.2 689.7,1098.4 690.3,1097.6 689.0,1096.3 687.4,1094.8 685.6,1093.1 683.5,1091.2 681.1,1089.0 678.5,1086.6 675.6,1084.0 672.5,1081.1 669.0,1078.1 665.3,1074.8 661.2,1071.1 656.6,1067.1 651.7,1062.7 646.4,1058.1 641.0,1053.4 635.4,1048.5 629.7,1043.5 624.1,1038.5 618.6,1033.6 613.2,1028.8 608.0,1024.1 602.8,1019.4 597.6,1014.6 592.4,1009.8 587.2,1004.9 581.9,1000.1 576.7,995.2 571.5,990.3 566.3,985.4 561.1,980.4 555.8,975.5 550.6,970.5 545.4,965.5 540.1,960.5 534.9,955.4 529.7,950.3 524.4,945.2 519.2,940.1 514.0,934.9 508.8,929.8 503.5,924.5 498.3,919.3 493.1,914.1 487.9,908.8 482.7,903.5 477.5,898.2 472.2,892.8 467.0,887.4 461.8,882.0 456.6,876.5 451.3,871.0 445.9,865.4 440.5,859.7 435.0,853.9 429.6,848.2 424.2,842.5 419.0,836.8 413.8,831.2 408.9,825.7 404.1,820.3 399.6,815.1 395.2,809.9 391.0,804.8 387.0,799.7 383.0,794.6 379.0,789.6 375.1,784.6 371.1,779.7 367.2,774.9 363.1,770.1 359.0,765.4 355.0,760.9 350.9,756.4 346.9,752.1 342.9,747.8 339.0,743.6 335.0,739.3 331.1,735.1 327.2,730.9 323.4,726.6 319.3,722.1 315.0,717.3 310.6,712.3 306.2,707.3 301.8,702.3 297.7,697.6 293.8,693.2 290.4,689.3 287.4,686.0 285.2,683.4" fill="#bbbcbe" opacity=".85" filter="url(#b1)"/>
<polygon points="208.1,867.6 211.0,870.5 214.7,874.1 219.1,878.4 224.0,883.2 229.4,888.4 235.1,894.0 240.9,899.7 246.8,905.5 252.6,911.2 258.2,916.8 264.0,922.4 270.0,928.3 276.2,934.4 282.6,940.6 289.0,946.9 295.3,953.2 301.5,959.4 307.5,965.4 313.1,971.1 318.4,976.6 323.2,981.6 327.7,986.4 332.0,991.0 336.0,995.5 339.9,999.8 343.6,1004.1 347.3,1008.3 351.0,1012.5 354.8,1016.8 358.7,1021.2 362.6,1025.6 366.6,1030.0 370.6,1034.5 374.5,1039.0 378.5,1043.5 382.3,1047.9 386.2,1052.2 389.9,1056.5 393.6,1060.6 397.2,1064.7 400.9,1068.7 404.6,1072.9 408.4,1077.1 412.2,1081.2 415.8,1085.2 419.3,1089.0 422.5,1092.5 425.3,1095.6 427.7,1098.3 429.6,1100.3 430.4,1099.7 428.5,1097.5 426.2,1094.8 423.4,1091.7 420.3,1088.1 416.9,1084.3 413.4,1080.2 409.7,1076.0 406.0,1071.7 402.3,1067.5 398.8,1063.3 395.3,1059.2 391.7,1055.0 388.0,1050.6 384.3,1046.2 380.5,1041.7 376.7,1037.1 372.9,1032.5 369.0,1027.9 365.2,1023.4 361.3,1018.8 357.5,1014.4 353.8,1010.1 350.2,1005.8 346.6,1001.5 342.9,997.2 339.1,992.8 335.1,988.2 330.9,983.5 326.4,978.6 321.6,973.4 316.4,968.0 310.8,962.2 304.8,956.1 298.6,949.9 292.3,943.6 285.9,937.2 279.6,931.0 273.4,924.8 267.4,918.9 261.8,913.2 256.1,907.6 250.3,901.9 244.4,896.1 238.6,890.4 232.9,884.9 227.5,879.6 222.6,874.8 218.2,870.5 214.5,866.9 211.5,864.0" fill="#b6b7b9" opacity=".6" filter="url(#b1)"/>
<polygon points="370.5,528.9 372.6,530.5 375.2,532.3 378.3,534.5 381.7,537.0 385.4,539.7 389.5,542.6 393.8,545.8 398.3,549.2 403.0,552.8 407.8,556.6 412.8,560.6 418.3,565.0 424.1,569.7 430.1,574.7 436.4,579.8 442.7,585.0 449.1,590.4 455.4,595.7 461.6,601.0 467.7,606.2 473.6,611.3 479.4,616.3 485.1,621.3 490.8,626.3 496.5,631.4 502.3,636.5 508.1,641.9 514.2,647.4 520.4,653.2 526.8,659.3 533.3,665.6 539.9,672.0 546.6,678.5 553.4,685.3 560.3,692.2 567.4,699.4 574.8,706.9 582.5,714.6 590.5,722.7 598.9,731.1 607.9,739.9 617.4,749.3 627.3,759.1 637.5,769.1 648.0,779.4 658.5,789.9 669.0,800.3 679.4,810.6 689.5,820.8 699.3,830.7 709.1,840.8 719.4,851.5 730.0,862.4 740.5,873.5 750.7,884.3 760.4,894.6 769.5,904.1 777.5,912.6 784.3,919.7 789.6,925.3 790.4,924.7 785.1,919.0 778.4,911.7 770.4,903.2 761.5,893.6 751.8,883.2 741.6,872.4 731.2,861.3 720.7,850.2 710.5,839.5 700.7,829.3 691.0,819.3 681.0,809.1 670.7,798.7 660.2,788.2 649.8,777.7 639.4,767.3 629.2,757.1 619.4,747.3 609.9,737.9 601.1,728.9 592.7,720.5 584.7,712.4 577.1,704.6 569.7,697.2 562.6,689.9 555.7,682.9 548.9,676.2 542.3,669.5 535.7,663.1 529.2,656.7 522.8,650.6 516.6,644.8 510.6,639.2 504.8,633.8 499.0,628.6 493.3,623.4 487.6,618.4 481.9,613.4 476.2,608.3 470.3,603.2 464.2,598.0 458.0,592.7 451.6,587.3 445.3,582.0 438.9,576.7 432.7,571.6 426.6,566.6 420.8,561.9 415.3,557.5 410.2,553.4 405.4,549.6 400.7,546.0 396.2,542.6 391.8,539.4 387.8,536.4 384.0,533.7 380.6,531.3 377.6,529.1 375.0,527.2 372.9,525.7" fill="#e9eaec" opacity=".35" filter="url(#b1)"/>
<path d="M954.6 499.4 L1024 615 L1110 738 L1202 857 L1300 968 L1391 1062 L1415 1098" fill="none" stroke="#cdced0" stroke-width="1.2" opacity=".6"/>
<path d="M1329 648 L1370 720 L1416 792 L1470 870 L1514 931 L1560 990" fill="none" stroke="#d0d1d3" stroke-width="1.2" opacity=".5"/>
<path d="M1765 920 L1805 965" fill="none" stroke="#9c9da0" stroke-width="1.5" opacity=".5"/>
<path d="M758.4 1427.0 C741.9 1420.0 692.3 1400.5 659.2 1385.3 C626.1 1370.1 583.6 1348.3 560.0 1336.0 C536.4 1323.7 531.2 1320.0 517.5 1311.7 C503.8 1303.4 491.1 1294.9 477.8 1285.9 C464.6 1277.0 451.2 1267.9 438.0 1258.0 C424.8 1248.1 411.6 1237.8 398.4 1226.3 C385.2 1214.8 371.9 1202.6 358.7 1188.7 C345.5 1174.8 329.1 1155.5 319.0 1143.0 C308.9 1130.5 304.6 1123.6 298.0 1114.0 C291.4 1104.4 285.9 1095.8 279.4 1085.5 C272.9 1075.2 265.3 1062.9 259.0 1052.0 C252.7 1041.1 246.9 1030.9 241.7 1020.0 C236.5 1009.1 232.3 998.3 227.6 986.8 C222.9 975.3 217.7 961.6 213.7 951.0 C209.7 940.4 206.4 932.9 203.8 923.0 C201.2 913.1 199.2 900.5 197.9 891.6 C196.6 882.7 196.2 875.1 195.9 869.8 C195.6 864.5 195.9 861.6 195.9 860.0" fill="none" stroke="#a9aaac" stroke-width="22" filter="url(#b8)" opacity=".75"/>
</g>
<polygon points="702.1,553.0 704.8,557.1 708.2,562.5 712.2,569.0 716.6,576.2 721.5,583.9 726.6,592.1 731.8,600.3 737.0,608.5 742.2,616.4 747.1,623.8 751.8,630.9 756.5,638.0 761.3,645.0 766.1,652.0 770.9,659.1 775.8,666.1 780.8,673.1 785.8,680.1 790.8,687.1 795.9,694.1 801.0,701.0 805.9,707.7 810.8,714.3 815.8,720.8 820.8,727.4 826.0,734.1 831.4,741.1 837.1,748.4 843.2,756.1 849.7,764.4 856.8,773.2 864.2,782.6 872.1,792.4 880.3,802.6 888.7,813.1 897.3,823.6 906.0,834.1 914.7,844.5 923.3,854.7 931.8,864.5 940.3,873.9 948.7,883.1 957.2,892.2 965.8,901.2 974.3,910.1 982.9,919.0 991.5,927.8 1000.1,936.6 1008.8,945.4 1017.5,954.3 1026.3,963.4 1035.2,972.5 1044.2,981.7 1053.3,990.9 1062.4,1000.1 1071.4,1009.2 1080.4,1018.2 1089.4,1027.0 1098.2,1035.7 1106.9,1044.1 1115.4,1052.3 1123.8,1060.3 1132.1,1068.1 1140.4,1075.8 1148.5,1083.3 1156.7,1090.8 1164.8,1098.2 1173.0,1105.6 1181.2,1113.0 1189.5,1120.4 1197.8,1127.9 1206.2,1135.4 1214.6,1142.8 1223.0,1150.2 1231.5,1157.6 1239.9,1165.0 1248.3,1172.2 1256.7,1179.5 1265.0,1186.7 1273.3,1193.8 1281.6,1200.8 1289.8,1207.8 1298.0,1214.7 1306.1,1221.6 1314.3,1228.4 1322.4,1235.2 1330.5,1242.0 1338.7,1248.7 1346.8,1255.4 1355.0,1262.1 1363.3,1268.8 1371.8,1275.7 1380.3,1282.6 1388.9,1289.5 1397.5,1296.3 1405.9,1303.0 1414.2,1309.5 1422.2,1315.7 1430.0,1321.6 1437.3,1327.2 1444.2,1332.3 1450.7,1337.1 1456.9,1341.6 1462.9,1345.8 1468.7,1349.8 1474.3,1353.6 1479.9,1357.4 1485.5,1361.2 1491.2,1365.0 1497.1,1369.0 1503.1,1373.0 1509.1,1377.0 1515.1,1381.0 1521.0,1385.0 1527.0,1388.9 1533.0,1392.8 1539.0,1396.7 1545.0,1400.6 1551.0,1404.4 1557.0,1408.2 1563.0,1411.9 1568.9,1415.7 1574.9,1419.5 1580.9,1423.2 1586.9,1426.9 1592.9,1430.6 1598.9,1434.2 1604.9,1437.7 1610.9,1441.2 1617.0,1444.5 1622.9,1447.7 1628.9,1450.9 1634.9,1454.0 1640.9,1457.0 1646.9,1460.0 1652.9,1462.8 1658.9,1465.6 1664.9,1468.3 1670.9,1470.8 1676.9,1473.3 1683.1,1475.6 1689.4,1477.8 1695.9,1480.0 1702.4,1482.0 1708.9,1483.9 1715.2,1485.7 1721.2,1487.4 1726.9,1488.9 1732.2,1490.3 1737.0,1491.5 1741.3,1492.4 1745.2,1493.2 1748.6,1493.7 1751.7,1494.1 1754.6,1494.4 1757.3,1494.6 1759.8,1494.7 1762.2,1494.9 1764.7,1495.0 1767.2,1495.2 1769.9,1495.5 1772.6,1495.8 1775.3,1496.0 1777.9,1496.2 1780.5,1496.4 1782.9,1496.6 1785.0,1496.7 1787.0,1496.8 1788.6,1496.9 1789.9,1497.0 1790.1,1496.0 1788.7,1495.8 1787.1,1495.5 1785.2,1495.3 1783.0,1495.0 1780.7,1494.7 1778.1,1494.3 1775.5,1494.0 1772.9,1493.6 1770.2,1493.2 1767.6,1492.8 1765.0,1492.3 1762.5,1492.0 1760.1,1491.7 1757.6,1491.3 1755.0,1490.9 1752.3,1490.5 1749.3,1489.9 1746.0,1489.2 1742.3,1488.3 1738.2,1487.1 1733.4,1485.8 1728.2,1484.3 1722.6,1482.6 1716.6,1480.8 1710.4,1478.9 1704.1,1476.9 1697.7,1474.7 1691.3,1472.5 1685.1,1470.1 1679.1,1467.7 1673.2,1465.2 1667.4,1462.7 1661.5,1460.0 1655.6,1457.1 1649.7,1454.2 1643.8,1451.2 1637.9,1448.2 1632.0,1445.0 1626.1,1441.8 1620.2,1438.5 1614.3,1435.2 1608.4,1431.7 1602.5,1428.2 1596.6,1424.6 1590.7,1420.9 1584.8,1417.1 1578.8,1413.3 1572.9,1409.5 1567.0,1405.7 1561.0,1401.8 1555.1,1398.0 1549.2,1394.1 1543.3,1390.2 1537.4,1386.2 1531.5,1382.3 1525.5,1378.3 1519.6,1374.2 1513.7,1370.2 1507.8,1366.1 1501.9,1362.0 1496.1,1358.0 1490.4,1354.1 1484.8,1350.3 1479.2,1346.4 1473.6,1342.6 1468.0,1338.6 1462.1,1334.4 1456.0,1329.9 1449.5,1325.2 1442.7,1320.0 1435.5,1314.4 1427.8,1308.5 1419.9,1302.3 1411.6,1295.7 1403.3,1289.0 1394.7,1282.2 1386.2,1275.3 1377.7,1268.4 1369.3,1261.5 1361.0,1254.7 1352.9,1248.0 1344.8,1241.3 1336.7,1234.6 1328.6,1227.8 1320.5,1221.0 1312.5,1214.1 1304.4,1207.2 1296.2,1200.3 1288.1,1193.3 1279.9,1186.2 1271.6,1179.1 1263.3,1171.9 1255.0,1164.6 1246.6,1157.3 1238.2,1149.9 1229.8,1142.5 1221.5,1135.1 1213.1,1127.6 1204.8,1120.1 1196.5,1112.6 1188.3,1105.1 1180.2,1097.7 1172.1,1090.2 1164.1,1082.8 1156.0,1075.2 1147.9,1067.7 1139.8,1060.0 1131.6,1052.1 1123.3,1044.1 1114.9,1035.9 1106.3,1027.4 1097.6,1018.7 1088.8,1009.8 1079.9,1000.8 1070.9,991.6 1061.9,982.4 1053.0,973.2 1044.1,963.9 1035.2,954.7 1026.5,945.7 1017.8,936.7 1009.2,927.7 1000.7,918.9 992.2,910.0 983.7,901.1 975.3,892.2 966.9,883.2 958.5,874.1 950.2,864.9 942.0,855.5 933.6,845.9 925.1,835.8 916.5,825.4 907.9,814.9 899.4,804.4 891.1,794.0 883.0,783.8 875.1,773.9 867.7,764.5 860.7,755.6 854.2,747.4 848.1,739.8 842.4,732.5 837.0,725.6 831.9,718.9 826.9,712.3 822.0,705.9 817.2,699.3 812.3,692.7 807.3,685.9 802.2,678.9 797.2,671.9 792.2,665.0 787.3,658.0 782.4,651.1 777.6,644.1 772.8,637.1 768.1,630.1 763.4,623.2 758.7,616.2 754.0,608.8 749.0,600.9 743.9,592.7 738.8,584.5 733.8,576.3 729.1,568.5 724.7,561.3 720.8,554.8 717.5,549.3 714.9,545.0" fill="#7a5221"/>
<polygon points="699,548.5 718,548.5 723,561 705,564" fill="#7a5221"/>
<polygon points="365.2,920.8 365.5,922.2 366.0,924.1 366.5,926.2 367.0,928.7 367.7,931.3 368.3,934.1 369.0,936.9 369.6,939.7 370.3,942.3 370.9,944.9 371.4,947.2 371.9,949.5 372.5,951.8 373.0,954.0 373.5,956.4 374.0,958.7 374.6,961.2 375.3,963.7 376.0,966.4 376.7,969.2 377.6,972.2 378.5,975.3 379.5,978.6 380.6,982.0 381.6,985.4 382.7,988.8 383.8,992.2 384.8,995.4 385.8,998.4 386.7,1001.2 387.5,1003.7 388.2,1005.8 388.9,1007.7 389.5,1009.5 390.1,1011.3 390.7,1013.1 391.4,1015.0 392.3,1017.2 393.2,1019.8 394.3,1022.8 395.6,1026.2 397.0,1030.0 398.5,1034.2 400.2,1038.6 401.9,1043.2 403.7,1047.9 405.5,1052.7 407.4,1057.4 409.3,1062.1 411.1,1066.7 413.0,1071.1 415.0,1075.6 417.0,1080.1 419.0,1084.6 421.1,1089.1 423.2,1093.5 425.3,1097.9 427.4,1102.3 429.4,1106.5 431.5,1110.5 433.6,1114.5 435.7,1118.4 437.7,1122.2 439.8,1125.9 441.9,1129.6 444.0,1133.1 446.1,1136.6 448.2,1140.0 450.2,1143.3 452.3,1146.6 454.4,1149.7 456.5,1152.8 458.6,1155.7 460.6,1158.6 462.7,1161.3 464.7,1164.0 466.8,1166.7 468.8,1169.3 470.8,1171.9 472.8,1174.5 474.7,1177.0 476.5,1179.4 478.2,1181.7 479.9,1184.0 481.6,1186.3 483.5,1188.7 485.6,1191.3 487.8,1194.0 490.4,1197.0 493.2,1200.3 496.5,1204.0 500.1,1208.0 503.9,1212.2 508.0,1216.7 512.2,1221.3 516.6,1225.9 520.9,1230.5 525.3,1235.1 529.6,1239.4 533.8,1243.5 537.8,1247.5 541.8,1251.3 545.9,1255.1 549.9,1258.8 554.0,1262.4 558.0,1265.9 562.0,1269.4 566.1,1272.8 570.1,1276.2 574.1,1279.5 578.1,1282.7 582.1,1285.8 586.0,1288.7 589.9,1291.7 593.8,1294.5 597.7,1297.3 601.7,1300.2 605.8,1303.1 610.0,1306.0 614.3,1309.0 618.6,1312.1 622.7,1315.0 626.8,1318.0 630.9,1321.0 635.2,1324.1 639.8,1327.3 644.8,1330.6 650.3,1334.1 656.4,1337.8 663.1,1341.7 670.7,1346.0 678.9,1350.6 687.8,1355.4 697.2,1360.4 706.9,1365.5 716.9,1370.7 727.0,1375.8 737.2,1380.8 747.2,1385.6 757.1,1390.2 766.8,1394.5 776.7,1398.7 786.6,1402.8 796.6,1406.8 806.6,1410.7 816.6,1414.5 826.7,1418.3 836.7,1422.0 846.8,1425.7 856.7,1429.3 866.9,1433.0 877.5,1436.7 888.4,1440.5 899.2,1444.1 910.0,1447.7 920.5,1451.2 930.5,1454.5 939.9,1457.5 948.5,1460.3 956.2,1462.8 962.8,1465.0 968.5,1466.8 973.4,1468.4 977.7,1469.8 981.6,1471.0 985.1,1472.1 988.5,1473.1 992.0,1474.1 995.6,1475.1 999.5,1476.1 1003.6,1477.2 1007.5,1478.3 1011.2,1479.2 1014.9,1480.1 1018.6,1481.0 1022.4,1481.9 1026.4,1482.8 1030.5,1483.6 1034.9,1484.5 1039.7,1485.5 1044.8,1486.4 1050.0,1487.4 1055.5,1488.4 1061.1,1489.3 1066.9,1490.3 1072.9,1491.3 1079.1,1492.3 1085.6,1493.3 1092.2,1494.3 1099.0,1495.2 1106.1,1496.2 1113.6,1497.3 1121.4,1498.4 1129.4,1499.4 1137.5,1500.5 1145.7,1501.5 1154.0,1502.5 1162.3,1503.4 1170.5,1504.3 1178.5,1505.0 1186.7,1505.6 1195.4,1506.2 1204.2,1506.7 1213.2,1507.1 1222.0,1507.4 1230.5,1507.8 1238.5,1508.0 1245.9,1508.3 1252.4,1508.5 1258.0,1508.7 1262.4,1509.0 1266.1,1509.1 1268.9,1509.2 1271.1,1509.3 1272.8,1509.4 1274.1,1509.4 1275.2,1509.4 1276.0,1509.5 1276.9,1509.5 1277.8,1509.5 1277.8,1508.5 1276.9,1508.4 1276.1,1508.4 1275.2,1508.3 1274.2,1508.2 1272.9,1508.1 1271.2,1508.0 1269.0,1507.9 1266.1,1507.7 1262.5,1507.5 1258.0,1507.3 1252.5,1507.0 1246.0,1506.7 1238.6,1506.4 1230.6,1506.1 1222.1,1505.7 1213.3,1505.3 1204.3,1504.8 1195.5,1504.3 1186.9,1503.7 1178.7,1503.0 1170.7,1502.2 1162.5,1501.3 1154.3,1500.4 1146.0,1499.3 1137.8,1498.3 1129.7,1497.1 1121.7,1496.0 1114.0,1494.9 1106.5,1493.8 1099.4,1492.8 1092.6,1491.7 1086.0,1490.7 1079.6,1489.7 1073.4,1488.6 1067.4,1487.6 1061.6,1486.6 1056.0,1485.6 1050.6,1484.5 1045.3,1483.5 1040.3,1482.5 1035.5,1481.6 1031.1,1480.6 1027.0,1479.7 1023.1,1478.8 1019.4,1477.9 1015.7,1477.0 1012.0,1476.0 1008.3,1475.0 1004.5,1474.0 1000.5,1472.9 996.5,1471.7 992.9,1470.7 989.5,1469.7 986.2,1468.7 982.6,1467.6 978.8,1466.3 974.5,1464.9 969.7,1463.3 964.0,1461.4 957.4,1459.2 949.8,1456.6 941.2,1453.7 931.8,1450.5 921.8,1447.1 911.4,1443.6 900.7,1439.9 889.9,1436.1 879.1,1432.2 868.6,1428.4 858.5,1424.7 848.5,1420.9 838.6,1417.1 828.6,1413.3 818.6,1409.4 808.7,1405.4 798.7,1401.4 788.9,1397.3 779.1,1393.1 769.3,1388.8 759.7,1384.4 750.0,1379.8 740.1,1374.9 730.0,1369.9 720.0,1364.7 710.1,1359.4 700.5,1354.2 691.2,1349.1 682.5,1344.2 674.3,1339.6 666.9,1335.3 660.3,1331.3 654.4,1327.6 649.0,1324.2 644.2,1320.9 639.8,1317.7 635.6,1314.6 631.5,1311.6 627.5,1308.6 623.4,1305.5 619.1,1302.4 614.8,1299.3 610.6,1296.3 606.6,1293.3 602.7,1290.5 598.9,1287.6 595.1,1284.7 591.3,1281.8 587.5,1278.8 583.7,1275.7 579.9,1272.5 576.0,1269.2 572.1,1265.8 568.1,1262.4 564.2,1258.9 560.3,1255.3 556.4,1251.7 552.5,1248.0 548.6,1244.2 544.7,1240.4 540.8,1236.5 536.9,1232.3 532.8,1228.0 528.6,1223.4 524.4,1218.7 520.2,1214.1 516.1,1209.4 512.2,1204.9 508.5,1200.6 505.0,1196.5 502.0,1192.9 499.3,1189.6 496.9,1186.7 494.8,1184.0 493.0,1181.5 491.3,1179.1 489.7,1176.9 488.1,1174.6 486.4,1172.2 484.7,1169.7 482.8,1167.1 480.9,1164.4 478.9,1161.7 477.0,1159.0 475.1,1156.4 473.1,1153.7 471.2,1151.0 469.3,1148.2 467.5,1145.4 465.6,1142.5 463.7,1139.4 461.8,1136.3 459.8,1133.0 457.9,1129.6 456.0,1126.2 454.1,1122.7 452.1,1119.1 450.2,1115.5 448.3,1111.8 446.4,1107.9 444.5,1104.1 442.6,1100.1 440.6,1095.9 438.7,1091.7 436.7,1087.3 434.8,1082.9 432.8,1078.5 430.9,1074.0 429.1,1069.5 427.2,1065.1 425.5,1060.7 423.7,1056.3 421.9,1051.8 420.1,1047.1 418.4,1042.4 416.7,1037.7 415.0,1033.1 413.4,1028.7 411.9,1024.6 410.6,1020.7 409.3,1017.2 408.2,1014.2 407.3,1011.7 406.5,1009.6 405.8,1007.7 405.2,1005.9 404.6,1004.3 404.0,1002.6 403.4,1000.7 402.7,998.6 401.9,996.2 401.0,993.4 400.0,990.4 399.0,987.3 397.9,984.0 396.9,980.6 395.8,977.3 394.8,973.9 393.8,970.7 392.9,967.6 392.1,964.8 391.3,962.2 390.6,959.7 390.0,957.3 389.4,955.0 388.8,952.7 388.2,950.4 387.7,948.2 387.1,945.9 386.5,943.5 385.9,941.1 385.3,938.6 384.6,936.0 383.9,933.2 383.2,930.4 382.5,927.7 381.8,925.1 381.2,922.6 380.6,920.5 380.2,918.6 379.8,917.2" fill="#d63a37"/>
<polygon points="523.0,589.3 522.0,590.9 520.9,592.8 519.4,595.2 517.8,597.9 516.1,600.8 514.3,603.9 512.5,607.1 510.8,610.2 509.2,613.2 507.7,616.1 506.5,618.9 505.4,621.7 504.4,624.3 503.5,626.9 502.6,629.4 501.7,631.9 500.9,634.4 500.0,636.9 499.1,639.3 498.0,642.0 496.8,644.8 495.6,647.9 494.4,650.9 493.2,654.0 492.0,657.0 490.7,659.9 489.4,662.8 488.0,665.5 486.5,668.0 484.9,670.4 483.2,672.7 481.3,675.0 479.2,677.4 476.9,679.7 474.6,682.0 472.1,684.3 469.6,686.5 467.2,688.7 464.7,690.9 462.4,693.0 460.3,694.8 458.2,696.5 455.9,698.2 453.6,699.8 451.2,701.5 448.8,703.2 446.4,705.1 444.0,707.1 441.7,709.4 439.6,711.8 437.9,714.4 436.4,716.9 435.3,719.4 434.3,721.8 433.6,724.2 432.9,726.6 432.3,728.9 431.7,731.2 431.0,733.6 430.2,736.3 429.3,739.4 428.4,742.7 427.5,746.2 426.5,749.9 425.6,753.5 424.6,757.2 423.6,760.9 422.6,764.5 421.5,768.1 420.4,771.4 419.3,774.6 417.9,777.9 416.5,781.2 415.0,784.6 413.5,788.1 411.9,791.5 410.4,795.0 408.9,798.5 407.6,802.1 406.4,805.6 405.4,809.1 404.5,812.6 403.8,816.0 403.2,819.2 402.7,822.4 402.3,825.4 401.8,828.2 401.3,830.9 400.8,833.4 400.3,835.8 399.6,838.2 398.9,840.5 398.3,842.8 397.6,844.9 396.9,846.9 396.2,848.8 395.5,850.7 394.7,852.6 393.8,854.5 392.9,856.3 392.0,858.0 390.9,859.6 389.7,861.3 388.4,863.1 387.0,864.9 385.5,866.8 384.0,868.8 382.4,871.0 380.9,873.2 379.4,875.6 378.1,878.1 376.8,880.5 375.5,883.1 374.2,885.7 373.0,888.2 371.8,890.8 370.7,893.3 369.6,895.7 368.7,897.9 367.8,900.1 367.0,902.2 366.3,904.3 365.7,906.3 365.1,908.2 364.7,910.0 364.3,911.6 364.0,913.0 363.7,914.3 363.5,915.2 363.3,916.0 377.7,920.0 378.0,919.1 378.3,917.9 378.7,916.7 379.0,915.3 379.4,913.9 379.8,912.4 380.3,910.9 380.9,909.2 381.5,907.6 382.2,905.9 383.0,904.0 383.9,902.0 384.9,899.7 386.0,897.4 387.2,895.0 388.4,892.7 389.6,890.3 390.8,888.0 392.0,885.8 393.2,883.8 394.3,881.9 395.5,880.2 396.8,878.4 398.2,876.6 399.7,874.7 401.2,872.7 402.7,870.7 404.2,868.5 405.7,866.2 407.1,863.7 408.3,861.4 409.3,859.1 410.3,856.8 411.2,854.5 412.0,852.2 412.8,849.8 413.6,847.4 414.3,845.0 415.0,842.5 415.7,839.8 416.5,836.9 417.1,833.9 417.6,830.9 418.1,827.9 418.5,824.9 419.0,821.9 419.5,819.0 420.1,816.1 420.8,813.2 421.6,810.4 422.6,807.5 423.8,804.5 425.1,801.3 426.5,798.0 428.1,794.6 429.6,791.2 431.2,787.6 432.7,784.0 434.2,780.3 435.6,776.6 436.8,772.9 437.9,769.0 439.0,765.2 440.1,761.3 441.1,757.5 442.0,753.9 442.9,750.3 443.8,746.9 444.7,743.8 445.6,740.9 446.4,738.0 447.1,735.3 447.8,732.9 448.3,730.8 448.9,728.8 449.4,727.2 450.0,725.7 450.6,724.3 451.4,722.9 452.4,721.6 453.5,720.2 454.8,718.9 456.5,717.5 458.4,716.0 460.5,714.5 462.8,712.9 465.3,711.1 467.9,709.2 470.5,707.2 473.0,705.0 475.4,702.8 477.8,700.7 480.4,698.4 483.0,696.0 485.6,693.6 488.2,691.0 490.8,688.3 493.4,685.5 495.8,682.6 498.1,679.6 500.1,676.4 502.0,673.1 503.7,669.8 505.3,666.5 506.7,663.2 508.0,660.0 509.3,656.8 510.5,653.7 511.6,650.8 512.8,648.0 514.0,645.2 515.0,642.4 516.0,639.7 516.9,637.1 517.7,634.6 518.6,632.2 519.4,629.8 520.3,627.5 521.2,625.2 522.3,622.9 523.4,620.3 524.8,617.5 526.3,614.5 528.0,611.5 529.6,608.5 531.2,605.6 532.7,602.8 534.0,600.4 535.2,598.3 536.0,596.7" fill="#d63a37"/>
<polygon points="526,591 541,594.6 540,601 533,607.5 520,600.5" fill="#d63a37"/>
<circle cx="371.5" cy="918.5" r="7.5" fill="#d63a37"/>
<polygon points="526.3,596.4 599.3,612.4 676.6,627.0 746.9,628.0 826.5,619.3 880.4,600.6 941.2,579.4 976.6,596.7 1013.4,610.3 1020.5,614.4 1023.5,611.6 1018.6,602.7 980.2,588.5 941.8,569.6 877.6,592.6 824.7,611.5 746.5,621.0 677.4,620.0 600.7,605.6 527.7,589.6" fill="#d63a37"/>
<polygon points="1028.4,624.2 1035.2,636.8 1095.9,660.2 1175.4,688.2 1215.8,700.2 1258.1,721.7 1401.7,784.9 1410.8,788.6 1413.2,785.4 1406.3,777.1 1261.9,713.5 1219.2,691.8 1178.2,679.6 1099.1,651.8 1040.8,629.2 1031.6,621.8" fill="#d63a37"/>
<polygon points="1418.5,798.3 1418.0,797.6 1418.7,795.4 1418.6,795.2 1417.6,796.0 1417.2,798.5 1418.0,799.8 1418.6,800.5 1419.5,801.3 1420.8,802.1 1422.4,803.1 1424.5,804.2 1426.8,805.3 1429.3,806.7 1432.2,808.2 1435.5,809.8 1439.1,811.5 1443.1,813.4 1447.6,815.4 1452.6,817.5 1458.1,819.8 1464.3,822.2 1471.3,824.8 1479.0,827.7 1487.1,830.7 1495.6,833.7 1504.2,836.9 1512.9,840.0 1521.4,843.0 1529.6,846.0 1537.4,848.8 1544.9,851.5 1552.3,854.1 1559.6,856.5 1566.7,858.9 1573.8,861.3 1580.8,863.7 1587.7,866.3 1594.6,868.9 1601.4,871.8 1608.2,874.9 1615.1,878.2 1622.0,881.8 1629.0,885.6 1636.0,889.6 1642.9,893.7 1649.7,897.8 1656.4,901.9 1662.9,906.0 1669.2,910.0 1675.2,913.8 1680.8,917.4 1686.0,920.8 1690.8,924.2 1695.5,927.5 1700.1,930.8 1704.7,934.2 1709.5,937.6 1714.4,941.2 1719.8,944.9 1725.5,948.7 1731.7,952.8 1738.2,957.0 1745.0,961.3 1752.0,965.7 1759.1,970.2 1766.3,974.7 1773.5,979.2 1780.6,983.8 1787.5,988.3 1794.2,992.7 1800.6,997.1 1806.6,1001.2 1812.4,1005.3 1818.1,1009.3 1823.9,1013.5 1829.8,1017.7 1836.0,1022.2 1842.6,1027.0 1849.7,1032.1 1857.4,1037.7 1865.8,1043.8 1875.0,1050.4 1884.8,1057.4 1895.0,1064.8 1905.3,1072.3 1915.8,1079.9 1926.2,1087.4 1936.4,1094.8 1946.1,1101.9 1955.3,1108.6 1964.1,1115.0 1972.6,1121.2 1980.8,1127.3 1988.9,1133.2 1996.8,1139.1 2004.6,1144.8 2012.2,1150.5 2019.8,1156.2 2027.3,1161.9 2034.8,1167.6 2042.3,1173.4 2049.9,1179.3 2057.5,1185.3 2065.0,1191.3 2072.4,1197.2 2079.6,1203.0 2086.6,1208.6 2093.2,1213.9 2099.4,1218.9 2105.1,1223.5 2110.2,1227.7 2114.8,1231.4 2119.0,1234.8 2122.8,1237.9 2126.4,1240.8 2129.8,1243.5 2133.1,1246.3 2136.5,1249.1 2140.0,1252.0 2143.8,1255.2 2147.7,1258.4 2151.6,1261.7 2155.5,1265.0 2159.5,1268.3 2163.4,1271.6 2167.3,1274.9 2171.2,1278.3 2175.1,1281.7 2179.0,1285.1 2182.8,1288.5 2186.7,1292.0 2190.5,1295.6 2194.3,1299.2 2198.2,1302.8 2202.0,1306.4 2205.8,1310.0 2209.5,1313.7 2213.2,1317.3 2216.9,1320.9 2220.5,1324.5 2224.0,1328.1 2227.6,1331.8 2231.2,1335.4 2234.7,1339.1 2238.1,1342.7 2241.5,1346.3 2244.9,1349.9 2248.1,1353.4 2251.2,1356.9 2254.2,1360.3 2257.1,1363.7 2260.0,1367.0 2262.7,1370.2 2265.3,1373.4 2267.9,1376.6 2270.3,1379.7 2272.7,1382.8 2275.0,1385.8 2277.3,1388.9 2279.4,1391.9 2281.5,1395.0 2283.6,1398.1 2285.6,1401.1 2287.5,1404.2 2289.3,1407.2 2291.0,1410.2 2292.6,1413.0 2294.1,1415.8 2295.4,1418.5 2296.6,1420.9 2297.5,1423.3 2298.3,1425.5 2299.0,1427.6 2299.5,1429.7 2299.9,1431.7 2300.3,1433.6 2300.6,1435.6 2300.9,1437.5 2301.1,1439.4 2301.3,1441.2 2301.5,1442.9 2301.6,1444.5 2301.7,1446.0 2301.8,1447.4 2301.8,1448.7 2301.7,1449.9 2301.6,1451.1 2301.4,1452.3 2301.2,1453.4 2301.0,1454.5 2300.7,1455.6 2300.4,1456.6 2300.0,1457.7 2299.6,1458.7 2299.1,1459.8 2298.6,1460.8 2298.0,1461.8 2297.4,1462.7 2296.7,1463.7 2296.0,1464.6 2295.3,1465.4 2294.5,1466.3 2293.6,1467.2 2292.7,1468.1 2291.7,1469.0 2290.6,1469.8 2289.5,1470.6 2288.4,1471.4 2287.3,1472.1 2286.2,1472.8 2285.2,1473.4 2284.1,1474.0 2282.9,1474.6 2281.6,1475.1 2280.3,1475.6 2279.1,1476.0 2277.9,1476.5 2276.9,1476.9 2276.0,1477.2 2275.3,1477.6 2276.3,1481.4 2277.0,1481.4 2277.9,1481.3 2279.0,1481.2 2280.3,1481.1 2281.7,1480.9 2283.1,1480.7 2284.7,1480.4 2286.2,1480.1 2287.7,1479.7 2289.2,1479.2 2290.6,1478.7 2292.0,1478.1 2293.4,1477.5 2294.8,1476.8 2296.3,1476.1 2297.7,1475.3 2299.1,1474.5 2300.6,1473.5 2301.9,1472.5 2303.2,1471.4 2304.4,1470.3 2305.4,1469.1 2306.5,1467.9 2307.5,1466.6 2308.4,1465.2 2309.3,1463.8 2310.1,1462.3 2310.8,1460.7 2311.5,1459.1 2312.0,1457.5 2312.5,1455.8 2312.8,1454.2 2313.0,1452.5 2313.2,1450.8 2313.3,1449.0 2313.3,1447.3 2313.2,1445.5 2313.1,1443.6 2312.9,1441.7 2312.7,1439.8 2312.4,1437.9 2312.1,1435.9 2311.8,1433.8 2311.4,1431.6 2311.0,1429.3 2310.4,1426.9 2309.7,1424.4 2308.8,1421.9 2307.8,1419.2 2306.6,1416.5 2305.3,1413.6 2303.8,1410.8 2302.1,1407.8 2300.4,1404.7 2298.5,1401.6 2296.6,1398.5 2294.5,1395.3 2292.4,1392.2 2290.2,1389.0 2288.0,1385.9 2285.7,1382.7 2283.3,1379.6 2280.9,1376.5 2278.4,1373.3 2275.8,1370.1 2273.2,1366.9 2270.4,1363.7 2267.6,1360.4 2264.7,1357.1 2261.8,1353.7 2258.7,1350.2 2255.5,1346.7 2252.2,1343.1 2248.8,1339.5 2245.4,1335.8 2241.9,1332.1 2238.3,1328.5 2234.8,1324.8 2231.2,1321.1 2227.5,1317.5 2223.9,1313.9 2220.1,1310.2 2216.4,1306.6 2212.5,1302.9 2208.7,1299.3 2204.8,1295.7 2200.9,1292.1 2197.0,1288.5 2193.1,1285.0 2189.2,1281.5 2185.3,1278.0 2181.4,1274.5 2177.4,1271.1 2173.5,1267.7 2169.5,1264.3 2165.6,1261.0 2161.6,1257.7 2157.7,1254.4 2153.8,1251.1 2149.8,1247.8 2146.1,1244.7 2142.5,1241.8 2139.1,1239.1 2135.7,1236.3 2132.2,1233.6 2128.6,1230.7 2124.7,1227.6 2120.5,1224.3 2115.9,1220.6 2110.7,1216.5 2105.0,1211.9 2098.8,1206.9 2092.2,1201.6 2085.3,1196.0 2078.1,1190.2 2070.6,1184.3 2063.1,1178.3 2055.4,1172.2 2047.8,1166.3 2040.2,1160.4 2032.7,1154.7 2025.2,1149.0 2017.6,1143.3 2009.9,1137.6 2002.1,1131.8 1994.2,1126.0 1986.2,1120.0 1977.9,1114.0 1969.4,1107.8 1960.7,1101.4 1951.4,1094.6 1941.7,1087.5 1931.5,1080.1 1921.1,1072.6 1910.6,1065.0 1900.2,1057.5 1890.1,1050.1 1880.3,1043.1 1871.1,1036.4 1862.6,1030.3 1854.9,1024.8 1847.8,1019.7 1841.3,1014.9 1835.1,1010.4 1829.1,1006.2 1823.4,1002.0 1817.6,997.9 1811.7,993.8 1805.6,989.6 1799.2,985.3 1792.4,980.8 1785.5,976.2 1778.3,971.6 1771.1,967.1 1763.9,962.6 1756.8,958.1 1749.8,953.7 1743.1,949.4 1736.6,945.3 1730.5,941.3 1724.8,937.4 1719.6,933.8 1714.7,930.3 1710.0,926.9 1705.4,923.5 1700.7,920.2 1696.0,916.8 1691.0,913.4 1685.7,909.9 1680.0,906.2 1673.9,902.4 1667.6,898.5 1661.0,894.4 1654.3,890.3 1647.3,886.2 1640.3,882.1 1633.2,878.1 1626.0,874.2 1618.9,870.6 1611.8,867.1 1604.7,864.0 1597.6,861.2 1590.6,858.6 1583.5,856.1 1576.4,853.7 1569.2,851.4 1562.0,849.1 1554.8,846.8 1547.4,844.3 1540.0,841.8 1532.2,839.0 1523.9,836.1 1515.3,833.0 1506.7,830.0 1498.0,826.9 1489.6,823.9 1481.4,821.0 1473.8,818.2 1466.8,815.6 1460.7,813.2 1455.3,811.1 1450.4,809.0 1446.0,807.0 1442.1,805.2 1438.5,803.5 1435.4,801.9 1432.5,800.5 1430.0,799.1 1427.7,797.9 1425.6,796.9 1423.9,796.2 1422.7,795.7 1422.1,795.5 1421.9,795.6 1422.3,796.4 1422.0,798.7 1421.2,799.3 1421.4,799.0 1422.2,796.7 1421.5,795.7" fill="#d33632"/>
<path d="M1694 1497 L1735 1496 L1762 1495.6 L1819 1494" fill="none" stroke="#cf2f2f" stroke-width="2.4" stroke-dasharray="34 3 22 2 40 4"/>
<rect x="1846.5" y="1491.5" width="3" height="2.5" fill="#222"/>
<polygon points="732.5,660.7 828.6,656.7 851.6,689.7 757.0,694.4" fill="#29296b"/>
<polygon points="780.0,724.6 873.0,718.7 896.0,749.0 802.8,754.0" fill="#29296b"/>
<polygon points="280.2,919.0 366.5,920.4 391.3,943.2 304.0,943.2" fill="#29296b"/>
<polygon points="329.8,965.0 416.0,965.0 440.0,987.2 352.6,987.8" fill="#29296b"/>
<polygon points="1609.6,870.0 1702.9,860.6 1717.7,886.0 1625.5,894.0" fill="#29296b"/>
<polygon points="1642.3,916.8 1732.6,908.8 1747.5,932.7 1657.0,938.6" fill="#29296b"/>
</svg>

<svg class="a" style="left:0;top:40px" width="2880" height="184" viewBox="0 40 2880 184">
<defs>
<radialGradient id="sph" cx=".42" cy=".25" r=".75"><stop offset="0" stop-color="#bfeeff"/><stop offset=".18" stop-color="#3fb6ff"/><stop offset=".55" stop-color="#1188ff"/><stop offset="1" stop-color="#1f4df0"/></radialGradient>
<linearGradient id="lb" x1="0" y1="0" x2="0" y2="1"><stop offset="0" stop-color="#8fd4f3"/><stop offset=".5" stop-color="#4aa6df"/><stop offset="1" stop-color="#2b86cb"/></linearGradient>
<linearGradient id="lb2" x1="0" y1="0" x2="1" y2="0"><stop offset="0" stop-color="#a6ddf6"/><stop offset=".45" stop-color="#4aa6df"/><stop offset="1" stop-color="#1e76bf"/></linearGradient>
<linearGradient id="lb3" x1="0" y1="1" x2="1" y2="0"><stop offset="0" stop-color="#2b86cb"/><stop offset=".6" stop-color="#4aa6df"/><stop offset="1" stop-color="#9bdcf8"/></linearGradient>
<linearGradient id="db" x1="0" y1="0" x2="0" y2="1"><stop offset="0" stop-color="#0d4a82"/><stop offset=".6" stop-color="#1c62a3"/><stop offset="1" stop-color="#0d4a82"/></linearGradient>
<linearGradient id="fl" x1="0" y1="0" x2="0" y2="1"><stop offset="0" stop-color="#8c2a10"/><stop offset=".3" stop-color="#f26a1b"/><stop offset=".6" stop-color="#fbd04a"/><stop offset="1" stop-color="#ffffff"/></linearGradient>
<linearGradient id="strp" x1="0" y1="0" x2="0" y2="1"><stop offset="0.000" stop-color="#a0a0a0"/><stop offset="0.090" stop-color="#dcdcdc"/><stop offset="0.125" stop-color="#dcdcdc"/><stop offset="0.140" stop-color="#2c2c2c"/><stop offset="0.200" stop-color="#2c2c2c"/><stop offset="0.215" stop-color="#f2f2f2"/><stop offset="0.300" stop-color="#f2f2f2"/><stop offset="0.315" stop-color="#2a2a2a"/><stop offset="0.375" stop-color="#2a2a2a"/><stop offset="0.390" stop-color="#f4f4f4"/><stop offset="0.470" stop-color="#f4f4f4"/><stop offset="0.485" stop-color="#262626"/><stop offset="0.550" stop-color="#262626"/><stop offset="0.565" stop-color="#ececec"/><stop offset="0.640" stop-color="#ececec"/><stop offset="0.655" stop-color="#2a2a2a"/><stop offset="0.720" stop-color="#2a2a2a"/><stop offset="0.735" stop-color="#d8d8d8"/><stop offset="0.830" stop-color="#d0d0d0"/><stop offset="0.845" stop-color="#2e2e2e"/><stop offset="0.900" stop-color="#2e2e2e"/><stop offset="0.915" stop-color="#b0b0b0"/><stop offset="1.000" stop-color="#808080"/></linearGradient>
<radialGradient id="strs" cx=".5" cy=".5" r=".5"><stop offset="0" stop-color="#888" stop-opacity="0"/><stop offset=".6" stop-color="#888" stop-opacity="0"/><stop offset="1" stop-color="#9a9a9a" stop-opacity=".75"/></radialGradient>
<linearGradient id="rb" x1="0" y1="0" x2="0" y2="1"><stop offset="0.00" stop-color="#f2405e"/><stop offset="0.09" stop-color="#e040a8"/><stop offset="0.17" stop-color="#4262f2"/><stop offset="0.25" stop-color="#22bfe2"/><stop offset="0.33" stop-color="#3fe067"/><stop offset="0.42" stop-color="#cdf024"/><stop offset="0.50" stop-color="#f8f032"/><stop offset="0.58" stop-color="#cdf024"/><stop offset="0.67" stop-color="#3fe067"/><stop offset="0.75" stop-color="#22bfe2"/><stop offset="0.83" stop-color="#4262f2"/><stop offset="0.91" stop-color="#e040a8"/><stop offset="1.00" stop-color="#f2405e"/></linearGradient>
<radialGradient id="rbr" cx=".5" cy=".5" r=".5"><stop offset="0" stop-color="#f2405e" stop-opacity="0"/><stop offset=".78" stop-color="#f2405e" stop-opacity="0"/><stop offset=".95" stop-color="#f2405e" stop-opacity=".9"/><stop offset="1" stop-color="#f2405e" stop-opacity="1"/></radialGradient>
</defs>
<ellipse cx="32" cy="71" rx="11" ry="25.5" fill="#fbfbfd" stroke="#8c8c90" stroke-width="1.6"/>
<path d="M32 50 C27 58 26 70 27 82 M32 50 C37 58 38 70 37 82" fill="none" stroke="#e58a94" stroke-width="1.3" stroke-dasharray="2 2"/>
<path d="M26 66 L38 66 M25 74 L39 74" stroke="#e9a0a8" stroke-width="1.2" stroke-dasharray="2 2"/>
<path d="M31 70 L31 88 L28.5 85.5 L26.5 87.5 L32 96 L43 96 L45 84 L45 78 L42 77 L42 81 L41 76 L38 75.5 L38 80 L37 75 L34.5 74.5 L34.5 79 L34 70 Z" fill="#fff" stroke="#555" stroke-width="1.4" stroke-linejoin="round"/>
<path d="M78 60 L92 56 L96 59 L108 56 L111 60 L105 90 L84 86 Z" fill="#d8cf86" stroke="#8a8a86" stroke-width="1.5" stroke-linejoin="round"/>
<path d="M77 63 L100 58 L106 61 L112 63 L108 88 L86 91 Z" fill="#f6ec92" stroke="#8f8f8a" stroke-width="1.5" stroke-linejoin="round"/>
<path d="M108 88 L110 91 L88 92.5 L86 91 Z" fill="#9a9a94"/>
<path d="M145 55 L150 54 L169 62 L169 86 L174 92 L168 93 L147 87 Z" fill="#4c4c4e" stroke="#3a3a3c" stroke-width="1.2" stroke-linejoin="round"/>
<path d="M149 61 L167 66 L167 87 L149 83 Z" fill="url(#fl)"/>
<path d="M149 56.5 L165 61.5 L165 64 L149 59.5 Z" fill="#9a9a9c"/>
<rect x="230" y="76" width="36" height="16" fill="#f2d324" stroke="#b59a1b" stroke-width="1"/>
<rect x="231" y="92" width="36" height="2.5" fill="#8f8f8f"/>
<path d="M233 76v4 M237 76v3 M241 76v4 M245 76v3 M249 76v5 M253 76v3 M257 76v4 M261 76v3" stroke="#4a4320" stroke-width="1.3"/>
<path d="M238 83h4v5 M253 83h5v5h-5z" fill="none" stroke="#a9881b" stroke-width="1.4"/>
<path d="M230 61 H266 M257 54 V74" stroke="#555" stroke-width="1.5"/>
<path d="M230 74 H266 M265 56 V74" stroke="#555" stroke-width="1.3" stroke-dasharray="1.5 2"/>
<path d="M348 56 L363 89" stroke="#111" stroke-width="2"/>
<circle cx="348" cy="56" r="4.3" fill="#1747f0"/><circle cx="355.5" cy="72.5" r="7" fill="#f5150e"/><circle cx="363.5" cy="89.5" r="4.8" fill="#10e048"/>
<circle cx="516" cy="72.7" r="16.5" fill="url(#sph)"/>
<path d="M664.5 55 H690 L698 63 V91 H664.5 Z" fill="#fbfbfb" stroke="#444" stroke-width="1.6"/>
<path d="M690 55 V63 H698 Z" fill="#7bbdf0" stroke="#444" stroke-width="1.2"/>
<path d="M667 60 H680 C686 62 690 66 692 70 C690 76 686 80 680 81 H667" fill="none" stroke="#777" stroke-width="1.2" stroke-dasharray="2 1.5"/>
<path d="M667 70 H691 M669 86 H682 M686 86 H694" stroke="#888" stroke-width="1.2" stroke-dasharray="1.5 2"/>
<path d="M836 53 H845 V64 H855 V80 C855 87 850 91 846 91 H835 C831 91 826 87 826 80 V64 H836 Z" fill="#e4e6f4" stroke="#14145a" stroke-width="2" stroke-linejoin="round"/>
<path d="M829 68 H853 M829 72 H853 M829 76 H853 M829 80 H853 M830 84 H852 M833 88 H849" stroke="#14145a" stroke-width="2" stroke-dasharray="2 2"/>
<rect x="837.5" y="54.5" width="6" height="9" fill="#f4f5fb"/>
<circle cx="38.7" cy="183.3" r="9.6" fill="#f7f8fc" stroke="#6d7b80" stroke-width="3.4"/>
<path d="M45.5 191 L55.5 205" stroke="#6d7b80" stroke-width="6.5"/>
<rect x="81" y="167" width="24" height="18.5" fill="none" stroke="#6d7b80" stroke-width="2.2"/>
<circle cx="105.2" cy="187.6" r="9.6" fill="#f7f8fc" fill-opacity=".7" stroke="#6d7b80" stroke-width="3.4"/>
<path d="M112 195.5 L122 209" stroke="#6d7b80" stroke-width="6.5"/>
<path d="M162 204 C168 196 170 186 173 178 C175 174 180 172 183 171 L196 169.5 C200 170 202 173 201 176 L190 193 L203 196 L201 199 L176 211" fill="#fafafc" stroke="#707070" stroke-width="1.6" stroke-linejoin="round"/>
<path d="M177 178 L182 172 M181 180 L188 171 M186 181 L193 171.5 M190 183 L198 172" stroke="#333" stroke-width="1.8"/>
<path d="M229 176 C236 170 250 168 262 178 L266 190 L256 204 L243 210 C236 210 230 206 228 200" fill="none" stroke="#555" stroke-width="3.2"/>
<path d="M224 189 L236 181 L236 186 L247 186 L247 196 L236 196 L240 206 L230 203 Z" fill="#2f86ea" stroke="#1b5fb8" stroke-width="1"/>
<path d="M247 170 L259 178 L262 192 L254 200 L250 188 L244 184 Z" fill="#3b90ee" stroke="#1b5fb8" stroke-width="1"/>
<path d="M239 168 L248 166 L250 176 Z" fill="#444"/>
<rect x="293" y="159" width="59.5" height="59" rx="3" fill="#fff" stroke="#4c69f0" stroke-width="2"/>
<path d="M303 168 L344 181.5 L341 205 L311 209.5 Z" fill="#ffee12"/>
<path d="M302 168 L310 171 L312 179 L306 181 Z" fill="#5a564a"/>
<circle cx="328.4" cy="196" r="12.6" fill="url(#sph)"/>
<path d="M374 188 C376 178 392 175.5 402 176 C414 176.5 424 182 428 187.5 C422 194 412 199 400 199.5 C388 200 376 197 374 188 Z" fill="url(#lb)"/>
<ellipse cx="462.3" cy="189" rx="26.4" ry="12" fill="#3b95d6"/><ellipse cx="462.3" cy="187.5" rx="23" ry="8.5" fill="#4aa3df" opacity=".8"/>
<path d="M498 186.5 C512 190 538 190 552 183 C548 191 530 194.5 520 194 C510 193.5 501 190.5 498 186.5 Z" fill="#3b95d6"/>
<path d="M587 177.5 C592 184 604 193 613 196 L613 199.8 L561.5 199.8 L561.5 196.5 C572 192 582 184 587 177.5 Z" fill="url(#db)"/>
<path d="M649.6 176.2 C655 183 666 193 674.5 196.5 L674.5 199.8 L624 199.8 L624 197 C634 193 644 184 649.6 176.2 Z" fill="#0e4f88"/>
<path d="M684.5 180.5 C692 177.5 712 180 724 185 C731 188 736 191 736.5 194.5 C731 197.5 714 196 703 192 C694 189 686 184.5 684.5 180.5 Z" fill="url(#lb3)"/>
<path d="M746.5 194.5 C747 190 760 184 772 181.5 C784 178.8 796 177.8 800 179 C799 184 788 191 776 194.5 C764 197.6 750 198 746.5 194.5 Z" fill="url(#lb3)"/>
<path d="M808.5 202.5 L851 174.5 C857 178 862 185 861.5 191 C860 198 853 202 846 203.5 C834 205 818 205 808.5 202.5 Z" fill="url(#lb3)" stroke="#2a6ea8" stroke-width=".8"/>
<path d="M871.5 182 C873 176 882 173.5 890 175.5 C904 179 919 190 923.5 199 C922 204 908 205 896 203 C884 200.5 872 192 871.5 182 Z" fill="#3a93d4"/>
<line x1="865.5" y1="160" x2="865.5" y2="218" stroke="#e4e6ee" stroke-width="1"/><line x1="928.5" y1="160" x2="928.5" y2="218" stroke="#e4e6ee" stroke-width="1"/>
<ellipse cx="958.3" cy="188.8" rx="11.8" ry="26.5" fill="url(#lb2)"/>
<circle cx="1037.9" cy="188.8" r="20.5" fill="none" stroke="#3a8fd6" stroke-width="4"/>
<rect x="1011" y="194" width="52" height="8" fill="#f7f8fc"/>
<path d="M1037.9 177.3 C1044 184 1054 193 1062 196.8 L1062 199.8 L1012 199.8 L1012 197 C1022 193 1032 184 1037.9 177.3 Z" fill="#0e4f88"/>
<path d="M1050 180.5 L1064 183 L1058 191 Z" fill="#3a8fd6"/>
<path d="M1071.8 188.8 a26.4 6.6 0 0 1 52.8 0" fill="none" stroke="#f0201a" stroke-width="3.2"/>
<ellipse cx="1098.2" cy="188.8" rx="10.7" ry="26.4" fill="url(#lb2)"/>
<path d="M1071.8 188.8 a26.4 6.6 0 0 0 52.8 0" fill="none" stroke="#f0201a" stroke-width="3.2"/>
<path d="M1112.2 179 L1123.2 186.5 L1114.2 187 Z" fill="#f0201a"/>
<path d="M1134.6 188.8 a26.4 6.6 0 0 1 52.8 0" fill="none" stroke="#f0201a" stroke-width="3.2"/>
<ellipse cx="1161.0" cy="188.8" rx="10.7" ry="26.4" fill="url(#lb2)"/>
<path d="M1134.6 188.8 a26.4 6.6 0 0 0 52.8 0" fill="none" stroke="#f0201a" stroke-width="3.2"/>
<path d="M1175.0 179 L1186.0 186.5 L1177.0 187 Z" fill="#f0201a"/>
<path d="M1145.3 189.5 L1156 203 L1150.5 203 L1150.5 215 L1140 215 L1140 203 L1134.5 203 Z" fill="#fbab18" stroke="#b8790c" stroke-width="1.2"/>
<g fill="none" stroke="#111" stroke-width="2.3"><circle cx="1237.9" cy="188" r="16.6"/><ellipse cx="1237.9" cy="179.5" rx="8.5" ry="5"/><path d="M1224.5 184 a13.5 7.5 0 0 0 27 0"/><path d="M1221.5 191 a16.4 9 0 0 0 32.8 0"/></g>
<g fill="none"><circle cx="1299.8" cy="188" r="16.6" stroke="#111" stroke-width="2.3"/><g stroke="#f0201a" stroke-width="2"><ellipse cx="1299.8" cy="179.5" rx="8.5" ry="5"/><path d="M1286.5 184 a13.5 7.5 0 0 0 27 0"/><path d="M1283.5 191 a16.4 9 0 0 0 32.8 0"/></g></g>
<g fill="none" stroke="#111" stroke-width="2"><circle cx="1361.8" cy="188" r="16.6" stroke-width="2.6"/><path d="M1361.8 171.5 L1347.5 196 L1376 196 Z M1361.8 204.5 L1350.5 181 L1373 181 Z M1345.5 188 H1378 M1352 176 L1371.5 200 M1371.5 176 L1352 200"/><ellipse cx="1361.8" cy="188" rx="9" ry="16.4"/><ellipse cx="1361.8" cy="188" rx="16.4" ry="8"/></g>
<circle cx="1441.2" cy="189.1" r="19.3" fill="url(#sph)"/><circle cx="1502.9" cy="189.1" r="19.3" fill="url(#sph)"/>
<rect x="1535.3" y="159.5" width="59.5" height="59" rx="3" fill="#fff" stroke="#4c69f0" stroke-width="2"/>
<circle cx="1565" cy="189.5" r="19" fill="url(#sph)"/>
<path d="M1557 203 C1562 198 1572 195 1583 195.5 C1585 198.5 1588 201 1589.8 204.8 C1582 205.5 1566 206.5 1557 203 Z" fill="#12c0e6"/>
<path d="M1557 197 L1560 189 L1580 169 L1586 174.5 L1566 194.5 Z" fill="#111"/>
<path d="M1562.5 189.5 L1580 172 L1583.5 175 L1566 192.5 Z" fill="#4a8af0"/><path d="M1564 190.5 L1581.5 173" stroke="#d8e8ff" stroke-width="1.6" stroke-dasharray="1.5 1.5"/>
<path d="M1557.5 196.5 L1559.5 190.5 L1564.5 195 Z" fill="#f2c9a0"/>
<path d="M1558 204 C1562 206 1568 206 1571 204.5" stroke="#111" stroke-width="1.6" fill="none"/>
<circle cx="1643.2" cy="189" r="19.3" fill="url(#strp)"/><circle cx="1643.2" cy="189" r="19.3" fill="url(#strs)"/>
<circle cx="1704.5" cy="189" r="19.3" fill="url(#rb)"/><circle cx="1704.5" cy="189" r="19.3" fill="url(#rbr)"/>
<rect x="1753.4" y="159.5" width="59.5" height="59" rx="3" fill="#fff" stroke="#4c69f0" stroke-width="2"/>
<path d="M1776 172 C1764 178 1764 186 1771 190 C1778 194 1777 203 1766 208" fill="none" stroke="#2050ee" stroke-width="3.6" stroke-dasharray="3.5 2.5"/>
<path d="M1782.9 166 V211" stroke="#111" stroke-width="1.6" stroke-dasharray="5 2 1.5 2"/>
<path d="M1803 171.5 C1791 178 1791 186 1797 190 C1804 194 1803 203 1792 208" fill="none" stroke="#2050ee" stroke-width="3.2"/>
<rect x="1844" y="172" width="14" height="13.5" fill="#f5261a"/><rect x="1862" y="172" width="14" height="13.5" fill="#fcc22f"/><rect x="1844" y="189.7" width="14" height="13.6" fill="#a5cf4d"/><rect x="1862" y="189.7" width="14" height="13.6" fill="#70cfd6"/>
<circle cx="32.5" cy="131" r="13.5" fill="url(#sph)"/>
<rect x="2771" y="139" width="11" height="3.5" fill="#111"/>
<path d="M2802 128.5 H2819 M2802.8 128.5 V143 M2818.2 128.5 V143" stroke="#111" stroke-width="2.6" fill="none"/><path d="M2802 143.5 H2819" stroke="#777" stroke-width="2"/>
<path d="M2840 127.5 L2855 141.5 M2855 127.5 L2840 141.5" stroke="#111" stroke-width="2.8"/>
</svg>
<!-- ===== status bar ===== -->
<span class="t st" style="left:6.5px;letter-spacing:1.05px">Press F1 for help</span>
<div class="pane" style="left:2176px;width:48px"></div>
<div class="pane" style="left:2232px;width:138px"></div>
<div class="pane" style="left:2378px;width:138px"></div>
<div class="pane" style="left:2524px;width:138px"></div>
<div class="pane" style="left:2670px;width:50px"></div>
<div class="pane" style="left:2728px;width:58px"></div>
<div class="pane" style="left:2794px;width:46px"></div>
<span class="t st" style="left:2185px;letter-spacing:.16px">cm</span>
<span class="t st" style="left:2240px;letter-spacing:.29px">X: 1.3</span>
<span class="t st" style="left:2387px;letter-spacing:.39px">Y: 14.2</span>
<span class="t st" style="left:2533px;letter-spacing:.41px">Z: 0.0</span>
<svg class="a" style="left:2840px;top:1760px" width="40" height="40" viewBox="2840 1760 40 40">
<g stroke="#8d8d93" stroke-width="2"><path d="M2856 1799 L2878 1777"/><path d="M2864 1799 L2878 1785"/><path d="M2872 1799 L2878 1793"/></g>
<g stroke="#ffffff" stroke-width="1.2"><path d="M2858 1799.5 L2878.5 1779"/><path d="M2866 1799.5 L2878.5 1787"/><path d="M2874 1799.5 L2878.5 1795"/></g>
<path d="M2880 1800 L2880 1793 A7 7 0 0 1 2873 1800 Z" fill="#000"/></svg>
<svg class="a" style="left:0;top:1790px" width="10" height="10" viewBox="0 1790 10 10"><path d="M0 1800 L0 1793 A7 7 0 0 0 7 1800 Z" fill="#000"/></svg>
</body>
</html>
